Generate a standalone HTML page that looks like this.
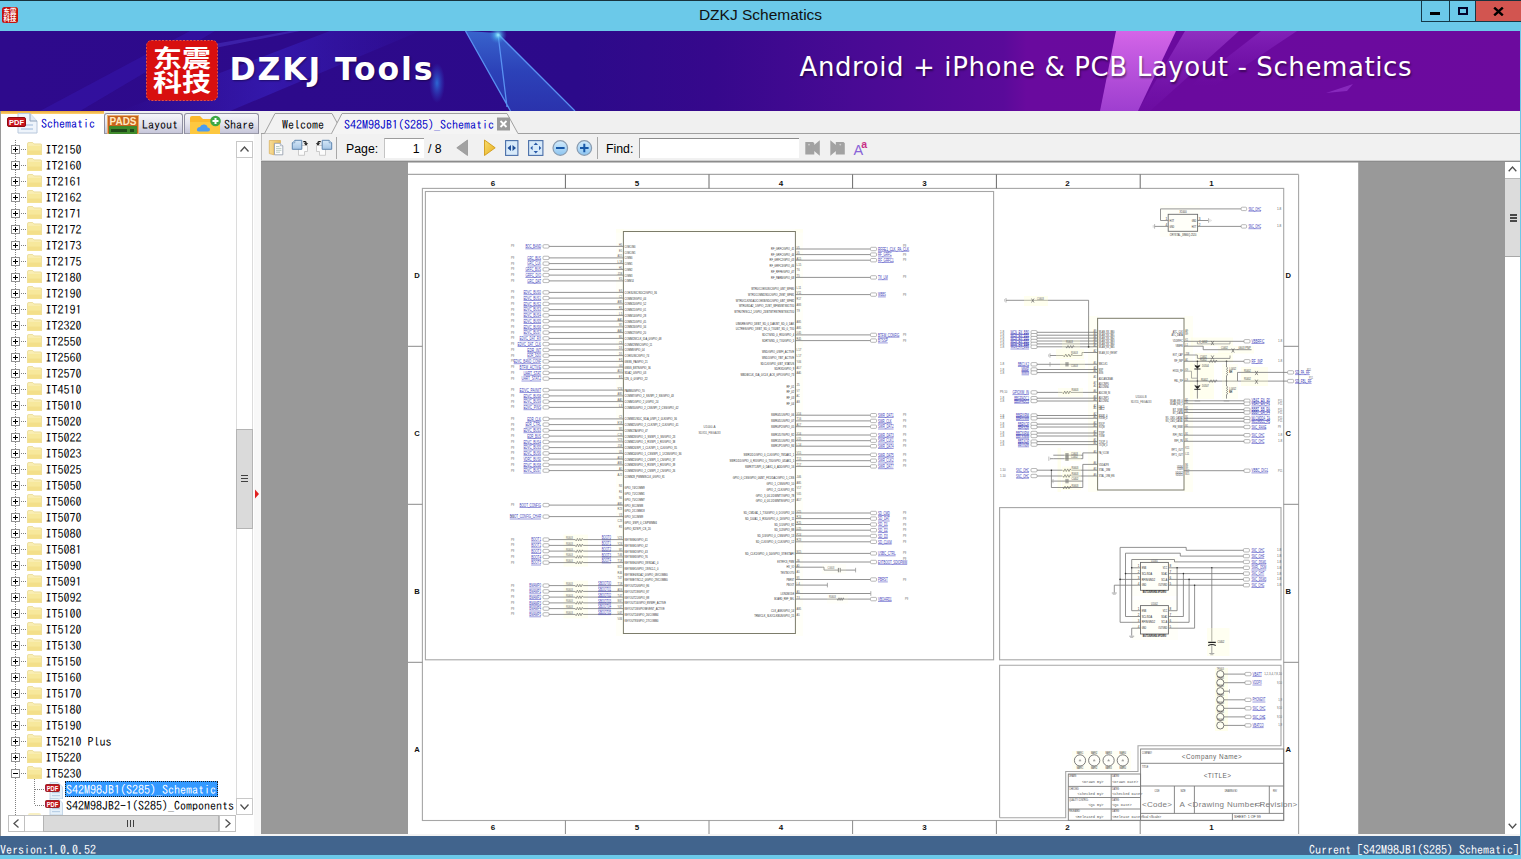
<!DOCTYPE html>
<html><head><meta charset="utf-8"><title>DZKJ Schematics</title>
<style>
html,body{margin:0;padding:0}
body{width:1521px;height:859px;overflow:hidden;position:relative;background:#f0f0f0;font-family:"IPAGothic","Liberation Mono",monospace;font-size:12px;color:#000}
.abs{position:absolute}
.mono{font-family:"IPAGothic","Liberation Mono",monospace;font-size:12px;line-height:16px;white-space:pre}
.sans{font-family:"Liberation Sans","DejaVu Sans",sans-serif}
#titlebar{left:0;top:0;width:1521px;height:31px;background:#6bc9e9}
#titlebar .topline{left:0;top:0;width:1521px;height:1px;background:#17323d}
#title{left:0;top:5px;width:1521px;text-align:center;font-family:"Liberation Sans","DejaVu Sans",sans-serif;font-size:15.5px;line-height:20px;color:#111}
#banner{left:0;top:31px;width:1521px;height:80px;background:linear-gradient(90deg,#2e0a8c 0%,#2c0a8a 38%,#36088c 47%,#480a94 56%,#5a0a9a 66%,#690a9e 67.5%,#6c0a9e 100%);overflow:hidden}
#tabs{left:0;top:111px;width:1521px;height:23px;background:#f0f0f0}
#status{left:0;top:836px;width:1521px;height:19px;background:#41648d}
#bottomline{left:0;top:855px;width:1521px;height:4px;background:#6bc9e9}
.trow{position:absolute;left:0;height:16px;width:236px}
.trow .lbl{position:absolute;top:0;left:44.4px;font-family:"IPAGothic","Liberation Mono",monospace;font-size:12px;line-height:16px;white-space:pre}
</style></head><body>
<div id="titlebar" class="abs"><div class="abs topline"></div><svg class="abs" style="left:2px;top:7px" width="16" height="16" viewBox="0 0 16 16"><rect x="0" y="0" width="16" height="16" rx="2.5" fill="#c4120e"/><text x="8" y="7.3" font-size="6.4" font-weight="bold" text-anchor="middle" fill="#fff" font-family='"Liberation Sans","Noto Sans CJK SC",sans-serif'>东震</text><text x="8" y="14" font-size="6.4" font-weight="bold" text-anchor="middle" fill="#fff" font-family='"Liberation Sans","Noto Sans CJK SC",sans-serif'>科技</text></svg><div id="title" class="abs">DZKJ Schematics</div><div class="abs" style="left:1421px;top:1px;width:100px;height:21px;border-left:1px solid #143848;border-bottom:1px solid #143848;box-sizing:border-box"><div class="abs" style="left:27px;top:0;width:1px;height:20px;background:#143848"></div><div class="abs" style="left:53px;top:0;width:1px;height:20px;background:#143848"></div><div class="abs" style="left:54px;top:0;width:46px;height:20px;background:#d25550"></div><div class="abs" style="left:8px;top:11px;width:10px;height:3px;background:#000"></div><div class="abs" style="left:36px;top:6px;width:10px;height:8px;border:2px solid #03032a;box-sizing:border-box"></div><svg class="abs" style="left:71px;top:5.5px" width="11" height="9" viewBox="0 0 11 9"><path d="M1.2 0.6 L9.8 8.4 M9.8 0.6 L1.2 8.4" stroke="#000" stroke-width="2.4" fill="none"/></svg></div></div>
<div id="banner" class="abs"><svg class="abs" style="left:0;top:0" width="1521" height="80" viewBox="0 0 1521 80"><defs><linearGradient id="st1" x1="0" y1="0" x2="1" y2="0"><stop offset="0" stop-color="#3d2ad8" stop-opacity="0"/><stop offset="0.5" stop-color="#3f2fe0" stop-opacity="0.75"/><stop offset="1" stop-color="#3d2ad8" stop-opacity="0.1"/></linearGradient><linearGradient id="tri" x1="0" y1="0" x2="0" y2="1"><stop offset="0" stop-color="#3a74d8" stop-opacity="0.85"/><stop offset="0.5" stop-color="#2c50c4" stop-opacity="0.8"/><stop offset="1" stop-color="#2a40b8" stop-opacity="0.75"/></linearGradient><radialGradient id="glow"><stop offset="0" stop-color="#9ff0ff" stop-opacity="1"/><stop offset="0.4" stop-color="#50b8f0" stop-opacity="0.6"/><stop offset="1" stop-color="#3a74d8" stop-opacity="0"/></radialGradient><radialGradient id="glow2"><stop offset="0" stop-color="#2c78e0" stop-opacity="0.85"/><stop offset="1" stop-color="#2c50d0" stop-opacity="0"/></radialGradient><linearGradient id="st3" x1="0" y1="0" x2="0" y2="1"><stop offset="0" stop-color="#a848d8" stop-opacity="0.6"/><stop offset="0.6" stop-color="#9030c8" stop-opacity="0.3"/><stop offset="1" stop-color="#8020c0" stop-opacity="0.1"/></linearGradient><linearGradient id="st4" x1="0" y1="0" x2="0" y2="1"><stop offset="0" stop-color="#9838d0" stop-opacity="0.5"/><stop offset="1" stop-color="#8020c0" stop-opacity="0"/></linearGradient><linearGradient id="st2" x1="0" y1="0" x2="0" y2="1"><stop offset="0" stop-color="#e070f0" stop-opacity="0.9"/><stop offset="1" stop-color="#b050e0" stop-opacity="0.75"/></linearGradient></defs><polygon points="120,80 330,0 420,0 230,80" fill="url(#st1)" opacity="0.5"/><polygon points="40,80 190,0 215,0 80,80" fill="#3a22c8" opacity="0.3"/><polygon points="185,18 290,0 300,0 200,20" fill="#5a4ae0" opacity="0.35"/><polygon points="465.5,0 498,2 575,80 510.5,80" fill="url(#tri)"/><path d="M465.5 0 L510.5 80 M498 3 L507 76 M498 3 L575 80" stroke="#5c96f4" stroke-width="1.3" fill="none" opacity="0.95"/><circle cx="498" cy="4" r="9" fill="url(#glow)"/><ellipse cx="437" cy="52" rx="8" ry="20" fill="url(#glow2)"/><polygon points="1116,0 1176,0 1138,80 1100,80" fill="url(#st2)"/><polygon points="1185,0 1239,0 1150,80 1138,80" fill="url(#st3)"/><polygon points="1261,0 1297,0 1215,55 1190,55" fill="url(#st4)"/><polygon points="1326,62 1353,53 1347,60" fill="#9a3cd0" opacity="0.6"/></svg><svg class="abs" style="left:146px;top:9px" width="72" height="61" viewBox="0 0 72 61"><rect x="0.5" y="0.5" width="71" height="60" rx="5" fill="#d80f0f" stroke="#e85040" stroke-width="1" stroke-dasharray="2 1.5"/><text x="36" y="27.3" font-size="24" font-weight="bold" text-anchor="middle" fill="#fff" font-family='"Liberation Sans","Noto Sans CJK SC",sans-serif' textLength="58" lengthAdjust="spacingAndGlyphs">东震</text><text x="36" y="50.5" font-size="24" font-weight="bold" text-anchor="middle" fill="#fff" font-family='"Liberation Sans","Noto Sans CJK SC",sans-serif' textLength="58" lengthAdjust="spacingAndGlyphs">科技</text></svg><div class="abs" style="left:229.6px;top:18px;font-family:'DejaVu Sans','Liberation Sans',sans-serif;font-size:31.5px;line-height:40px;letter-spacing:1.85px;font-weight:bold;color:#fff;white-space:pre;text-shadow:1px 1px 2px rgba(0,0,0,.4)">DZKJ Tools</div><div class="abs" style="left:799.5px;top:19px;font-family:'DejaVu Sans','Liberation Sans',sans-serif;font-size:26px;line-height:34px;letter-spacing:0.6px;color:#fff;white-space:pre;text-shadow:1px 2px 2px rgba(0,0,0,.45)">Android + iPhone &amp; PCB Layout - Schematics</div></div>
<div id="tabs" class="abs"><div class="abs" style="left:261px;top:22px;width:1260px;height:1px;background:#a0a0a0"></div><div class="abs" style="left:0;top:0;width:104px;height:23px;background:#fff;border-left:1px solid #9a9a9a;box-sizing:border-box"></div><div class="abs" style="left:1px;top:0;width:103px;height:3px;background:linear-gradient(180deg,#e8a838,#ffd070)"></div><svg class="abs" style="left:7px;top:1px" width="32" height="22" viewBox="0 0 32 22"><path d="M11 1.5 L23 1.5 L30 9 L30 21 L11 21 Z" fill="#eef4fb" stroke="#b8c8dc" stroke-width="1"/><path d="M23 1.5 L23 9 L30 9" fill="#dfe9f5" stroke="#8fa2ba" stroke-width="1"/><rect x="14" y="12" width="12" height="2" fill="#c5d6ea"/><rect x="14" y="16" width="12" height="2" fill="#c5d6ea"/><rect x="0.5" y="5.5" width="18" height="9" rx="1.5" fill="#c8141c" stroke="#8e0a10" stroke-width="1"/><text x="9.5" y="13" font-size="8" font-weight="bold" fill="#fff" text-anchor="middle" font-family='"Liberation Sans",sans-serif' textLength="15" lengthAdjust="spacingAndGlyphs">PDF</text></svg><div class="abs mono" style="left:41px;top:4px;color:#0000c8">Schematic</div><div class="abs" style="left:104px;top:2px;width:79px;height:21px;box-sizing:border-box;border:1px solid #8e8ea0;border-bottom:1px solid #9a9aa8;border-radius:3px 3px 0 0;background:linear-gradient(180deg,#f6f6fa 0%,#e4e4ee 50%,#c6c6da 100%)"></div><svg class="abs" style="left:107px;top:4px" width="32" height="19" viewBox="0 0 32 19"><rect x="0.5" y="0.5" width="31" height="18.5" fill="#c8641c" stroke="#e8b070" stroke-width="1"/><rect x="2" y="11" width="28" height="8" fill="#3f8a2c"/><rect x="4" y="14" width="16" height="3" fill="#1f4a18"/><rect x="23" y="14" width="4" height="3" fill="#1f4a18"/><text x="16" y="10" font-size="10" font-weight="bold" fill="#ffe9c0" text-anchor="middle" font-family='"Liberation Sans",sans-serif' textLength="27" lengthAdjust="spacingAndGlyphs">PADS</text></svg><div class="abs mono" style="left:142px;top:5px">Layout</div><div class="abs" style="left:184px;top:2px;width:75px;height:21px;box-sizing:border-box;border:1px solid #8e8ea0;border-bottom:1px solid #9a9aa8;border-radius:3px 3px 0 0;background:linear-gradient(180deg,#f6f6fa 0%,#e4e4ee 50%,#c6c6da 100%)"></div><svg class="abs" style="left:189px;top:3px" width="34" height="20" viewBox="0 0 34 20"><path d="M1 4 Q1 2 3 2 L11 2 L14 5 L29 5 Q31 5 31 7 L31 20 L1 20 Z" fill="#fbb92c"/><path d="M1 8 L31 8 L31 20 L1 20 Z" fill="#fdc840"/><path d="M10 17.5 Q7.5 17.5 8 15 Q8.5 13 11 13 Q12 10 15.5 10.5 Q18.5 11 18.5 13.5 Q21 13.5 21 15.5 Q21 17.5 19 17.5 Z" fill="#4b9cf0"/><circle cx="26.5" cy="7" r="5.3" fill="#3da845"/><path d="M26.5 4 V10 M23.5 7 H29.5" stroke="#fff" stroke-width="2"/></svg><div class="abs mono" style="left:224px;top:5px">Share</div><svg class="abs" style="left:261px;top:0" width="270" height="23" viewBox="0 0 270 23"><path d="M3.5 22.5 L14 2.5 L71 2.5 L82 22.5" fill="#f2f2f2" stroke="#a0a0a0" stroke-width="1"/><path d="M70.5 22.6 L81 2.5 L246 2.5 L257 22.6" fill="#f4f4f4" stroke="#a0a0a0" stroke-width="1"/><path d="M71.5 22.5 L256.5 22.5" stroke="#f4f4f4" stroke-width="1.4"/><rect x="236" y="6.5" width="13" height="13" fill="#9a9a9a"/><path d="M239.5 10 L245.5 16 M245.5 10 L239.5 16" stroke="#fff" stroke-width="1.8"/></svg><div class="abs mono" style="left:282px;top:5px">Welcome</div><div class="abs mono" style="left:344px;top:5px;color:#0000c8">S42M98JB1(S285)_Schematic</div></div>
<div class="abs" style="left:0;top:134px;width:254px;height:702px;background:#fff;border-left:1px solid #9a9a9a;box-sizing:border-box;overflow:hidden"><div class="abs" style="left:14px;top:6px;width:1px;height:676px;background:repeating-linear-gradient(180deg,#808080 0 1px,transparent 1px 2px)"></div><div class="trow" style="top:7px"><div class="abs" style="left:20px;top:8px;width:5px;height:1px;background:repeating-linear-gradient(90deg,#808080 0 1px,transparent 1px 2px)"></div><svg class="abs" style="left:10px;top:4px" width="9" height="9" viewBox="0 0 9 9"><rect x="0.5" y="0.5" width="8" height="8" fill="#fff" stroke="#919191"/><path d="M2 4.5 H7 M4.5 2 V7" stroke="#000" stroke-width="1"/></svg><svg class="abs" style="left:25.6px;top:1px" width="15" height="13.4" viewBox="0 0 16 14" preserveAspectRatio="none"><path d="M0.5 2 Q0.5 0.5 2 0.5 L6 0.5 L7.5 2 L14.5 2 Q15.5 2 15.5 3 L15.5 13.5 L0.5 13.5 Z" fill="#f9eeb4" stroke="#e8d68a" stroke-width="0.8"/><path d="M0.8 4 L15.2 4 L15.2 13.2 L0.8 13.2 Z" fill="#f7e89c"/><path d="M0.8 9 L15.2 9 L15.2 13.2 L0.8 13.2 Z" fill="#f1dc84" opacity="0.75"/></svg><div class="lbl">IT2150</div></div><div class="trow" style="top:23px"><div class="abs" style="left:20px;top:8px;width:5px;height:1px;background:repeating-linear-gradient(90deg,#808080 0 1px,transparent 1px 2px)"></div><svg class="abs" style="left:10px;top:4px" width="9" height="9" viewBox="0 0 9 9"><rect x="0.5" y="0.5" width="8" height="8" fill="#fff" stroke="#919191"/><path d="M2 4.5 H7 M4.5 2 V7" stroke="#000" stroke-width="1"/></svg><svg class="abs" style="left:25.6px;top:1px" width="15" height="13.4" viewBox="0 0 16 14" preserveAspectRatio="none"><path d="M0.5 2 Q0.5 0.5 2 0.5 L6 0.5 L7.5 2 L14.5 2 Q15.5 2 15.5 3 L15.5 13.5 L0.5 13.5 Z" fill="#f9eeb4" stroke="#e8d68a" stroke-width="0.8"/><path d="M0.8 4 L15.2 4 L15.2 13.2 L0.8 13.2 Z" fill="#f7e89c"/><path d="M0.8 9 L15.2 9 L15.2 13.2 L0.8 13.2 Z" fill="#f1dc84" opacity="0.75"/></svg><div class="lbl">IT2160</div></div><div class="trow" style="top:39px"><div class="abs" style="left:20px;top:8px;width:5px;height:1px;background:repeating-linear-gradient(90deg,#808080 0 1px,transparent 1px 2px)"></div><svg class="abs" style="left:10px;top:4px" width="9" height="9" viewBox="0 0 9 9"><rect x="0.5" y="0.5" width="8" height="8" fill="#fff" stroke="#919191"/><path d="M2 4.5 H7 M4.5 2 V7" stroke="#000" stroke-width="1"/></svg><svg class="abs" style="left:25.6px;top:1px" width="15" height="13.4" viewBox="0 0 16 14" preserveAspectRatio="none"><path d="M0.5 2 Q0.5 0.5 2 0.5 L6 0.5 L7.5 2 L14.5 2 Q15.5 2 15.5 3 L15.5 13.5 L0.5 13.5 Z" fill="#f9eeb4" stroke="#e8d68a" stroke-width="0.8"/><path d="M0.8 4 L15.2 4 L15.2 13.2 L0.8 13.2 Z" fill="#f7e89c"/><path d="M0.8 9 L15.2 9 L15.2 13.2 L0.8 13.2 Z" fill="#f1dc84" opacity="0.75"/></svg><div class="lbl">IT2161</div></div><div class="trow" style="top:55px"><div class="abs" style="left:20px;top:8px;width:5px;height:1px;background:repeating-linear-gradient(90deg,#808080 0 1px,transparent 1px 2px)"></div><svg class="abs" style="left:10px;top:4px" width="9" height="9" viewBox="0 0 9 9"><rect x="0.5" y="0.5" width="8" height="8" fill="#fff" stroke="#919191"/><path d="M2 4.5 H7 M4.5 2 V7" stroke="#000" stroke-width="1"/></svg><svg class="abs" style="left:25.6px;top:1px" width="15" height="13.4" viewBox="0 0 16 14" preserveAspectRatio="none"><path d="M0.5 2 Q0.5 0.5 2 0.5 L6 0.5 L7.5 2 L14.5 2 Q15.5 2 15.5 3 L15.5 13.5 L0.5 13.5 Z" fill="#f9eeb4" stroke="#e8d68a" stroke-width="0.8"/><path d="M0.8 4 L15.2 4 L15.2 13.2 L0.8 13.2 Z" fill="#f7e89c"/><path d="M0.8 9 L15.2 9 L15.2 13.2 L0.8 13.2 Z" fill="#f1dc84" opacity="0.75"/></svg><div class="lbl">IT2162</div></div><div class="trow" style="top:71px"><div class="abs" style="left:20px;top:8px;width:5px;height:1px;background:repeating-linear-gradient(90deg,#808080 0 1px,transparent 1px 2px)"></div><svg class="abs" style="left:10px;top:4px" width="9" height="9" viewBox="0 0 9 9"><rect x="0.5" y="0.5" width="8" height="8" fill="#fff" stroke="#919191"/><path d="M2 4.5 H7 M4.5 2 V7" stroke="#000" stroke-width="1"/></svg><svg class="abs" style="left:25.6px;top:1px" width="15" height="13.4" viewBox="0 0 16 14" preserveAspectRatio="none"><path d="M0.5 2 Q0.5 0.5 2 0.5 L6 0.5 L7.5 2 L14.5 2 Q15.5 2 15.5 3 L15.5 13.5 L0.5 13.5 Z" fill="#f9eeb4" stroke="#e8d68a" stroke-width="0.8"/><path d="M0.8 4 L15.2 4 L15.2 13.2 L0.8 13.2 Z" fill="#f7e89c"/><path d="M0.8 9 L15.2 9 L15.2 13.2 L0.8 13.2 Z" fill="#f1dc84" opacity="0.75"/></svg><div class="lbl">IT2171</div></div><div class="trow" style="top:87px"><div class="abs" style="left:20px;top:8px;width:5px;height:1px;background:repeating-linear-gradient(90deg,#808080 0 1px,transparent 1px 2px)"></div><svg class="abs" style="left:10px;top:4px" width="9" height="9" viewBox="0 0 9 9"><rect x="0.5" y="0.5" width="8" height="8" fill="#fff" stroke="#919191"/><path d="M2 4.5 H7 M4.5 2 V7" stroke="#000" stroke-width="1"/></svg><svg class="abs" style="left:25.6px;top:1px" width="15" height="13.4" viewBox="0 0 16 14" preserveAspectRatio="none"><path d="M0.5 2 Q0.5 0.5 2 0.5 L6 0.5 L7.5 2 L14.5 2 Q15.5 2 15.5 3 L15.5 13.5 L0.5 13.5 Z" fill="#f9eeb4" stroke="#e8d68a" stroke-width="0.8"/><path d="M0.8 4 L15.2 4 L15.2 13.2 L0.8 13.2 Z" fill="#f7e89c"/><path d="M0.8 9 L15.2 9 L15.2 13.2 L0.8 13.2 Z" fill="#f1dc84" opacity="0.75"/></svg><div class="lbl">IT2172</div></div><div class="trow" style="top:103px"><div class="abs" style="left:20px;top:8px;width:5px;height:1px;background:repeating-linear-gradient(90deg,#808080 0 1px,transparent 1px 2px)"></div><svg class="abs" style="left:10px;top:4px" width="9" height="9" viewBox="0 0 9 9"><rect x="0.5" y="0.5" width="8" height="8" fill="#fff" stroke="#919191"/><path d="M2 4.5 H7 M4.5 2 V7" stroke="#000" stroke-width="1"/></svg><svg class="abs" style="left:25.6px;top:1px" width="15" height="13.4" viewBox="0 0 16 14" preserveAspectRatio="none"><path d="M0.5 2 Q0.5 0.5 2 0.5 L6 0.5 L7.5 2 L14.5 2 Q15.5 2 15.5 3 L15.5 13.5 L0.5 13.5 Z" fill="#f9eeb4" stroke="#e8d68a" stroke-width="0.8"/><path d="M0.8 4 L15.2 4 L15.2 13.2 L0.8 13.2 Z" fill="#f7e89c"/><path d="M0.8 9 L15.2 9 L15.2 13.2 L0.8 13.2 Z" fill="#f1dc84" opacity="0.75"/></svg><div class="lbl">IT2173</div></div><div class="trow" style="top:119px"><div class="abs" style="left:20px;top:8px;width:5px;height:1px;background:repeating-linear-gradient(90deg,#808080 0 1px,transparent 1px 2px)"></div><svg class="abs" style="left:10px;top:4px" width="9" height="9" viewBox="0 0 9 9"><rect x="0.5" y="0.5" width="8" height="8" fill="#fff" stroke="#919191"/><path d="M2 4.5 H7 M4.5 2 V7" stroke="#000" stroke-width="1"/></svg><svg class="abs" style="left:25.6px;top:1px" width="15" height="13.4" viewBox="0 0 16 14" preserveAspectRatio="none"><path d="M0.5 2 Q0.5 0.5 2 0.5 L6 0.5 L7.5 2 L14.5 2 Q15.5 2 15.5 3 L15.5 13.5 L0.5 13.5 Z" fill="#f9eeb4" stroke="#e8d68a" stroke-width="0.8"/><path d="M0.8 4 L15.2 4 L15.2 13.2 L0.8 13.2 Z" fill="#f7e89c"/><path d="M0.8 9 L15.2 9 L15.2 13.2 L0.8 13.2 Z" fill="#f1dc84" opacity="0.75"/></svg><div class="lbl">IT2175</div></div><div class="trow" style="top:135px"><div class="abs" style="left:20px;top:8px;width:5px;height:1px;background:repeating-linear-gradient(90deg,#808080 0 1px,transparent 1px 2px)"></div><svg class="abs" style="left:10px;top:4px" width="9" height="9" viewBox="0 0 9 9"><rect x="0.5" y="0.5" width="8" height="8" fill="#fff" stroke="#919191"/><path d="M2 4.5 H7 M4.5 2 V7" stroke="#000" stroke-width="1"/></svg><svg class="abs" style="left:25.6px;top:1px" width="15" height="13.4" viewBox="0 0 16 14" preserveAspectRatio="none"><path d="M0.5 2 Q0.5 0.5 2 0.5 L6 0.5 L7.5 2 L14.5 2 Q15.5 2 15.5 3 L15.5 13.5 L0.5 13.5 Z" fill="#f9eeb4" stroke="#e8d68a" stroke-width="0.8"/><path d="M0.8 4 L15.2 4 L15.2 13.2 L0.8 13.2 Z" fill="#f7e89c"/><path d="M0.8 9 L15.2 9 L15.2 13.2 L0.8 13.2 Z" fill="#f1dc84" opacity="0.75"/></svg><div class="lbl">IT2180</div></div><div class="trow" style="top:151px"><div class="abs" style="left:20px;top:8px;width:5px;height:1px;background:repeating-linear-gradient(90deg,#808080 0 1px,transparent 1px 2px)"></div><svg class="abs" style="left:10px;top:4px" width="9" height="9" viewBox="0 0 9 9"><rect x="0.5" y="0.5" width="8" height="8" fill="#fff" stroke="#919191"/><path d="M2 4.5 H7 M4.5 2 V7" stroke="#000" stroke-width="1"/></svg><svg class="abs" style="left:25.6px;top:1px" width="15" height="13.4" viewBox="0 0 16 14" preserveAspectRatio="none"><path d="M0.5 2 Q0.5 0.5 2 0.5 L6 0.5 L7.5 2 L14.5 2 Q15.5 2 15.5 3 L15.5 13.5 L0.5 13.5 Z" fill="#f9eeb4" stroke="#e8d68a" stroke-width="0.8"/><path d="M0.8 4 L15.2 4 L15.2 13.2 L0.8 13.2 Z" fill="#f7e89c"/><path d="M0.8 9 L15.2 9 L15.2 13.2 L0.8 13.2 Z" fill="#f1dc84" opacity="0.75"/></svg><div class="lbl">IT2190</div></div><div class="trow" style="top:167px"><div class="abs" style="left:20px;top:8px;width:5px;height:1px;background:repeating-linear-gradient(90deg,#808080 0 1px,transparent 1px 2px)"></div><svg class="abs" style="left:10px;top:4px" width="9" height="9" viewBox="0 0 9 9"><rect x="0.5" y="0.5" width="8" height="8" fill="#fff" stroke="#919191"/><path d="M2 4.5 H7 M4.5 2 V7" stroke="#000" stroke-width="1"/></svg><svg class="abs" style="left:25.6px;top:1px" width="15" height="13.4" viewBox="0 0 16 14" preserveAspectRatio="none"><path d="M0.5 2 Q0.5 0.5 2 0.5 L6 0.5 L7.5 2 L14.5 2 Q15.5 2 15.5 3 L15.5 13.5 L0.5 13.5 Z" fill="#f9eeb4" stroke="#e8d68a" stroke-width="0.8"/><path d="M0.8 4 L15.2 4 L15.2 13.2 L0.8 13.2 Z" fill="#f7e89c"/><path d="M0.8 9 L15.2 9 L15.2 13.2 L0.8 13.2 Z" fill="#f1dc84" opacity="0.75"/></svg><div class="lbl">IT2191</div></div><div class="trow" style="top:183px"><div class="abs" style="left:20px;top:8px;width:5px;height:1px;background:repeating-linear-gradient(90deg,#808080 0 1px,transparent 1px 2px)"></div><svg class="abs" style="left:10px;top:4px" width="9" height="9" viewBox="0 0 9 9"><rect x="0.5" y="0.5" width="8" height="8" fill="#fff" stroke="#919191"/><path d="M2 4.5 H7 M4.5 2 V7" stroke="#000" stroke-width="1"/></svg><svg class="abs" style="left:25.6px;top:1px" width="15" height="13.4" viewBox="0 0 16 14" preserveAspectRatio="none"><path d="M0.5 2 Q0.5 0.5 2 0.5 L6 0.5 L7.5 2 L14.5 2 Q15.5 2 15.5 3 L15.5 13.5 L0.5 13.5 Z" fill="#f9eeb4" stroke="#e8d68a" stroke-width="0.8"/><path d="M0.8 4 L15.2 4 L15.2 13.2 L0.8 13.2 Z" fill="#f7e89c"/><path d="M0.8 9 L15.2 9 L15.2 13.2 L0.8 13.2 Z" fill="#f1dc84" opacity="0.75"/></svg><div class="lbl">IT2320</div></div><div class="trow" style="top:199px"><div class="abs" style="left:20px;top:8px;width:5px;height:1px;background:repeating-linear-gradient(90deg,#808080 0 1px,transparent 1px 2px)"></div><svg class="abs" style="left:10px;top:4px" width="9" height="9" viewBox="0 0 9 9"><rect x="0.5" y="0.5" width="8" height="8" fill="#fff" stroke="#919191"/><path d="M2 4.5 H7 M4.5 2 V7" stroke="#000" stroke-width="1"/></svg><svg class="abs" style="left:25.6px;top:1px" width="15" height="13.4" viewBox="0 0 16 14" preserveAspectRatio="none"><path d="M0.5 2 Q0.5 0.5 2 0.5 L6 0.5 L7.5 2 L14.5 2 Q15.5 2 15.5 3 L15.5 13.5 L0.5 13.5 Z" fill="#f9eeb4" stroke="#e8d68a" stroke-width="0.8"/><path d="M0.8 4 L15.2 4 L15.2 13.2 L0.8 13.2 Z" fill="#f7e89c"/><path d="M0.8 9 L15.2 9 L15.2 13.2 L0.8 13.2 Z" fill="#f1dc84" opacity="0.75"/></svg><div class="lbl">IT2550</div></div><div class="trow" style="top:215px"><div class="abs" style="left:20px;top:8px;width:5px;height:1px;background:repeating-linear-gradient(90deg,#808080 0 1px,transparent 1px 2px)"></div><svg class="abs" style="left:10px;top:4px" width="9" height="9" viewBox="0 0 9 9"><rect x="0.5" y="0.5" width="8" height="8" fill="#fff" stroke="#919191"/><path d="M2 4.5 H7 M4.5 2 V7" stroke="#000" stroke-width="1"/></svg><svg class="abs" style="left:25.6px;top:1px" width="15" height="13.4" viewBox="0 0 16 14" preserveAspectRatio="none"><path d="M0.5 2 Q0.5 0.5 2 0.5 L6 0.5 L7.5 2 L14.5 2 Q15.5 2 15.5 3 L15.5 13.5 L0.5 13.5 Z" fill="#f9eeb4" stroke="#e8d68a" stroke-width="0.8"/><path d="M0.8 4 L15.2 4 L15.2 13.2 L0.8 13.2 Z" fill="#f7e89c"/><path d="M0.8 9 L15.2 9 L15.2 13.2 L0.8 13.2 Z" fill="#f1dc84" opacity="0.75"/></svg><div class="lbl">IT2560</div></div><div class="trow" style="top:231px"><div class="abs" style="left:20px;top:8px;width:5px;height:1px;background:repeating-linear-gradient(90deg,#808080 0 1px,transparent 1px 2px)"></div><svg class="abs" style="left:10px;top:4px" width="9" height="9" viewBox="0 0 9 9"><rect x="0.5" y="0.5" width="8" height="8" fill="#fff" stroke="#919191"/><path d="M2 4.5 H7 M4.5 2 V7" stroke="#000" stroke-width="1"/></svg><svg class="abs" style="left:25.6px;top:1px" width="15" height="13.4" viewBox="0 0 16 14" preserveAspectRatio="none"><path d="M0.5 2 Q0.5 0.5 2 0.5 L6 0.5 L7.5 2 L14.5 2 Q15.5 2 15.5 3 L15.5 13.5 L0.5 13.5 Z" fill="#f9eeb4" stroke="#e8d68a" stroke-width="0.8"/><path d="M0.8 4 L15.2 4 L15.2 13.2 L0.8 13.2 Z" fill="#f7e89c"/><path d="M0.8 9 L15.2 9 L15.2 13.2 L0.8 13.2 Z" fill="#f1dc84" opacity="0.75"/></svg><div class="lbl">IT2570</div></div><div class="trow" style="top:247px"><div class="abs" style="left:20px;top:8px;width:5px;height:1px;background:repeating-linear-gradient(90deg,#808080 0 1px,transparent 1px 2px)"></div><svg class="abs" style="left:10px;top:4px" width="9" height="9" viewBox="0 0 9 9"><rect x="0.5" y="0.5" width="8" height="8" fill="#fff" stroke="#919191"/><path d="M2 4.5 H7 M4.5 2 V7" stroke="#000" stroke-width="1"/></svg><svg class="abs" style="left:25.6px;top:1px" width="15" height="13.4" viewBox="0 0 16 14" preserveAspectRatio="none"><path d="M0.5 2 Q0.5 0.5 2 0.5 L6 0.5 L7.5 2 L14.5 2 Q15.5 2 15.5 3 L15.5 13.5 L0.5 13.5 Z" fill="#f9eeb4" stroke="#e8d68a" stroke-width="0.8"/><path d="M0.8 4 L15.2 4 L15.2 13.2 L0.8 13.2 Z" fill="#f7e89c"/><path d="M0.8 9 L15.2 9 L15.2 13.2 L0.8 13.2 Z" fill="#f1dc84" opacity="0.75"/></svg><div class="lbl">IT4510</div></div><div class="trow" style="top:263px"><div class="abs" style="left:20px;top:8px;width:5px;height:1px;background:repeating-linear-gradient(90deg,#808080 0 1px,transparent 1px 2px)"></div><svg class="abs" style="left:10px;top:4px" width="9" height="9" viewBox="0 0 9 9"><rect x="0.5" y="0.5" width="8" height="8" fill="#fff" stroke="#919191"/><path d="M2 4.5 H7 M4.5 2 V7" stroke="#000" stroke-width="1"/></svg><svg class="abs" style="left:25.6px;top:1px" width="15" height="13.4" viewBox="0 0 16 14" preserveAspectRatio="none"><path d="M0.5 2 Q0.5 0.5 2 0.5 L6 0.5 L7.5 2 L14.5 2 Q15.5 2 15.5 3 L15.5 13.5 L0.5 13.5 Z" fill="#f9eeb4" stroke="#e8d68a" stroke-width="0.8"/><path d="M0.8 4 L15.2 4 L15.2 13.2 L0.8 13.2 Z" fill="#f7e89c"/><path d="M0.8 9 L15.2 9 L15.2 13.2 L0.8 13.2 Z" fill="#f1dc84" opacity="0.75"/></svg><div class="lbl">IT5010</div></div><div class="trow" style="top:279px"><div class="abs" style="left:20px;top:8px;width:5px;height:1px;background:repeating-linear-gradient(90deg,#808080 0 1px,transparent 1px 2px)"></div><svg class="abs" style="left:10px;top:4px" width="9" height="9" viewBox="0 0 9 9"><rect x="0.5" y="0.5" width="8" height="8" fill="#fff" stroke="#919191"/><path d="M2 4.5 H7 M4.5 2 V7" stroke="#000" stroke-width="1"/></svg><svg class="abs" style="left:25.6px;top:1px" width="15" height="13.4" viewBox="0 0 16 14" preserveAspectRatio="none"><path d="M0.5 2 Q0.5 0.5 2 0.5 L6 0.5 L7.5 2 L14.5 2 Q15.5 2 15.5 3 L15.5 13.5 L0.5 13.5 Z" fill="#f9eeb4" stroke="#e8d68a" stroke-width="0.8"/><path d="M0.8 4 L15.2 4 L15.2 13.2 L0.8 13.2 Z" fill="#f7e89c"/><path d="M0.8 9 L15.2 9 L15.2 13.2 L0.8 13.2 Z" fill="#f1dc84" opacity="0.75"/></svg><div class="lbl">IT5020</div></div><div class="trow" style="top:295px"><div class="abs" style="left:20px;top:8px;width:5px;height:1px;background:repeating-linear-gradient(90deg,#808080 0 1px,transparent 1px 2px)"></div><svg class="abs" style="left:10px;top:4px" width="9" height="9" viewBox="0 0 9 9"><rect x="0.5" y="0.5" width="8" height="8" fill="#fff" stroke="#919191"/><path d="M2 4.5 H7 M4.5 2 V7" stroke="#000" stroke-width="1"/></svg><svg class="abs" style="left:25.6px;top:1px" width="15" height="13.4" viewBox="0 0 16 14" preserveAspectRatio="none"><path d="M0.5 2 Q0.5 0.5 2 0.5 L6 0.5 L7.5 2 L14.5 2 Q15.5 2 15.5 3 L15.5 13.5 L0.5 13.5 Z" fill="#f9eeb4" stroke="#e8d68a" stroke-width="0.8"/><path d="M0.8 4 L15.2 4 L15.2 13.2 L0.8 13.2 Z" fill="#f7e89c"/><path d="M0.8 9 L15.2 9 L15.2 13.2 L0.8 13.2 Z" fill="#f1dc84" opacity="0.75"/></svg><div class="lbl">IT5022</div></div><div class="trow" style="top:311px"><div class="abs" style="left:20px;top:8px;width:5px;height:1px;background:repeating-linear-gradient(90deg,#808080 0 1px,transparent 1px 2px)"></div><svg class="abs" style="left:10px;top:4px" width="9" height="9" viewBox="0 0 9 9"><rect x="0.5" y="0.5" width="8" height="8" fill="#fff" stroke="#919191"/><path d="M2 4.5 H7 M4.5 2 V7" stroke="#000" stroke-width="1"/></svg><svg class="abs" style="left:25.6px;top:1px" width="15" height="13.4" viewBox="0 0 16 14" preserveAspectRatio="none"><path d="M0.5 2 Q0.5 0.5 2 0.5 L6 0.5 L7.5 2 L14.5 2 Q15.5 2 15.5 3 L15.5 13.5 L0.5 13.5 Z" fill="#f9eeb4" stroke="#e8d68a" stroke-width="0.8"/><path d="M0.8 4 L15.2 4 L15.2 13.2 L0.8 13.2 Z" fill="#f7e89c"/><path d="M0.8 9 L15.2 9 L15.2 13.2 L0.8 13.2 Z" fill="#f1dc84" opacity="0.75"/></svg><div class="lbl">IT5023</div></div><div class="trow" style="top:327px"><div class="abs" style="left:20px;top:8px;width:5px;height:1px;background:repeating-linear-gradient(90deg,#808080 0 1px,transparent 1px 2px)"></div><svg class="abs" style="left:10px;top:4px" width="9" height="9" viewBox="0 0 9 9"><rect x="0.5" y="0.5" width="8" height="8" fill="#fff" stroke="#919191"/><path d="M2 4.5 H7 M4.5 2 V7" stroke="#000" stroke-width="1"/></svg><svg class="abs" style="left:25.6px;top:1px" width="15" height="13.4" viewBox="0 0 16 14" preserveAspectRatio="none"><path d="M0.5 2 Q0.5 0.5 2 0.5 L6 0.5 L7.5 2 L14.5 2 Q15.5 2 15.5 3 L15.5 13.5 L0.5 13.5 Z" fill="#f9eeb4" stroke="#e8d68a" stroke-width="0.8"/><path d="M0.8 4 L15.2 4 L15.2 13.2 L0.8 13.2 Z" fill="#f7e89c"/><path d="M0.8 9 L15.2 9 L15.2 13.2 L0.8 13.2 Z" fill="#f1dc84" opacity="0.75"/></svg><div class="lbl">IT5025</div></div><div class="trow" style="top:343px"><div class="abs" style="left:20px;top:8px;width:5px;height:1px;background:repeating-linear-gradient(90deg,#808080 0 1px,transparent 1px 2px)"></div><svg class="abs" style="left:10px;top:4px" width="9" height="9" viewBox="0 0 9 9"><rect x="0.5" y="0.5" width="8" height="8" fill="#fff" stroke="#919191"/><path d="M2 4.5 H7 M4.5 2 V7" stroke="#000" stroke-width="1"/></svg><svg class="abs" style="left:25.6px;top:1px" width="15" height="13.4" viewBox="0 0 16 14" preserveAspectRatio="none"><path d="M0.5 2 Q0.5 0.5 2 0.5 L6 0.5 L7.5 2 L14.5 2 Q15.5 2 15.5 3 L15.5 13.5 L0.5 13.5 Z" fill="#f9eeb4" stroke="#e8d68a" stroke-width="0.8"/><path d="M0.8 4 L15.2 4 L15.2 13.2 L0.8 13.2 Z" fill="#f7e89c"/><path d="M0.8 9 L15.2 9 L15.2 13.2 L0.8 13.2 Z" fill="#f1dc84" opacity="0.75"/></svg><div class="lbl">IT5050</div></div><div class="trow" style="top:359px"><div class="abs" style="left:20px;top:8px;width:5px;height:1px;background:repeating-linear-gradient(90deg,#808080 0 1px,transparent 1px 2px)"></div><svg class="abs" style="left:10px;top:4px" width="9" height="9" viewBox="0 0 9 9"><rect x="0.5" y="0.5" width="8" height="8" fill="#fff" stroke="#919191"/><path d="M2 4.5 H7 M4.5 2 V7" stroke="#000" stroke-width="1"/></svg><svg class="abs" style="left:25.6px;top:1px" width="15" height="13.4" viewBox="0 0 16 14" preserveAspectRatio="none"><path d="M0.5 2 Q0.5 0.5 2 0.5 L6 0.5 L7.5 2 L14.5 2 Q15.5 2 15.5 3 L15.5 13.5 L0.5 13.5 Z" fill="#f9eeb4" stroke="#e8d68a" stroke-width="0.8"/><path d="M0.8 4 L15.2 4 L15.2 13.2 L0.8 13.2 Z" fill="#f7e89c"/><path d="M0.8 9 L15.2 9 L15.2 13.2 L0.8 13.2 Z" fill="#f1dc84" opacity="0.75"/></svg><div class="lbl">IT5060</div></div><div class="trow" style="top:375px"><div class="abs" style="left:20px;top:8px;width:5px;height:1px;background:repeating-linear-gradient(90deg,#808080 0 1px,transparent 1px 2px)"></div><svg class="abs" style="left:10px;top:4px" width="9" height="9" viewBox="0 0 9 9"><rect x="0.5" y="0.5" width="8" height="8" fill="#fff" stroke="#919191"/><path d="M2 4.5 H7 M4.5 2 V7" stroke="#000" stroke-width="1"/></svg><svg class="abs" style="left:25.6px;top:1px" width="15" height="13.4" viewBox="0 0 16 14" preserveAspectRatio="none"><path d="M0.5 2 Q0.5 0.5 2 0.5 L6 0.5 L7.5 2 L14.5 2 Q15.5 2 15.5 3 L15.5 13.5 L0.5 13.5 Z" fill="#f9eeb4" stroke="#e8d68a" stroke-width="0.8"/><path d="M0.8 4 L15.2 4 L15.2 13.2 L0.8 13.2 Z" fill="#f7e89c"/><path d="M0.8 9 L15.2 9 L15.2 13.2 L0.8 13.2 Z" fill="#f1dc84" opacity="0.75"/></svg><div class="lbl">IT5070</div></div><div class="trow" style="top:391px"><div class="abs" style="left:20px;top:8px;width:5px;height:1px;background:repeating-linear-gradient(90deg,#808080 0 1px,transparent 1px 2px)"></div><svg class="abs" style="left:10px;top:4px" width="9" height="9" viewBox="0 0 9 9"><rect x="0.5" y="0.5" width="8" height="8" fill="#fff" stroke="#919191"/><path d="M2 4.5 H7 M4.5 2 V7" stroke="#000" stroke-width="1"/></svg><svg class="abs" style="left:25.6px;top:1px" width="15" height="13.4" viewBox="0 0 16 14" preserveAspectRatio="none"><path d="M0.5 2 Q0.5 0.5 2 0.5 L6 0.5 L7.5 2 L14.5 2 Q15.5 2 15.5 3 L15.5 13.5 L0.5 13.5 Z" fill="#f9eeb4" stroke="#e8d68a" stroke-width="0.8"/><path d="M0.8 4 L15.2 4 L15.2 13.2 L0.8 13.2 Z" fill="#f7e89c"/><path d="M0.8 9 L15.2 9 L15.2 13.2 L0.8 13.2 Z" fill="#f1dc84" opacity="0.75"/></svg><div class="lbl">IT5080</div></div><div class="trow" style="top:407px"><div class="abs" style="left:20px;top:8px;width:5px;height:1px;background:repeating-linear-gradient(90deg,#808080 0 1px,transparent 1px 2px)"></div><svg class="abs" style="left:10px;top:4px" width="9" height="9" viewBox="0 0 9 9"><rect x="0.5" y="0.5" width="8" height="8" fill="#fff" stroke="#919191"/><path d="M2 4.5 H7 M4.5 2 V7" stroke="#000" stroke-width="1"/></svg><svg class="abs" style="left:25.6px;top:1px" width="15" height="13.4" viewBox="0 0 16 14" preserveAspectRatio="none"><path d="M0.5 2 Q0.5 0.5 2 0.5 L6 0.5 L7.5 2 L14.5 2 Q15.5 2 15.5 3 L15.5 13.5 L0.5 13.5 Z" fill="#f9eeb4" stroke="#e8d68a" stroke-width="0.8"/><path d="M0.8 4 L15.2 4 L15.2 13.2 L0.8 13.2 Z" fill="#f7e89c"/><path d="M0.8 9 L15.2 9 L15.2 13.2 L0.8 13.2 Z" fill="#f1dc84" opacity="0.75"/></svg><div class="lbl">IT5081</div></div><div class="trow" style="top:423px"><div class="abs" style="left:20px;top:8px;width:5px;height:1px;background:repeating-linear-gradient(90deg,#808080 0 1px,transparent 1px 2px)"></div><svg class="abs" style="left:10px;top:4px" width="9" height="9" viewBox="0 0 9 9"><rect x="0.5" y="0.5" width="8" height="8" fill="#fff" stroke="#919191"/><path d="M2 4.5 H7 M4.5 2 V7" stroke="#000" stroke-width="1"/></svg><svg class="abs" style="left:25.6px;top:1px" width="15" height="13.4" viewBox="0 0 16 14" preserveAspectRatio="none"><path d="M0.5 2 Q0.5 0.5 2 0.5 L6 0.5 L7.5 2 L14.5 2 Q15.5 2 15.5 3 L15.5 13.5 L0.5 13.5 Z" fill="#f9eeb4" stroke="#e8d68a" stroke-width="0.8"/><path d="M0.8 4 L15.2 4 L15.2 13.2 L0.8 13.2 Z" fill="#f7e89c"/><path d="M0.8 9 L15.2 9 L15.2 13.2 L0.8 13.2 Z" fill="#f1dc84" opacity="0.75"/></svg><div class="lbl">IT5090</div></div><div class="trow" style="top:439px"><div class="abs" style="left:20px;top:8px;width:5px;height:1px;background:repeating-linear-gradient(90deg,#808080 0 1px,transparent 1px 2px)"></div><svg class="abs" style="left:10px;top:4px" width="9" height="9" viewBox="0 0 9 9"><rect x="0.5" y="0.5" width="8" height="8" fill="#fff" stroke="#919191"/><path d="M2 4.5 H7 M4.5 2 V7" stroke="#000" stroke-width="1"/></svg><svg class="abs" style="left:25.6px;top:1px" width="15" height="13.4" viewBox="0 0 16 14" preserveAspectRatio="none"><path d="M0.5 2 Q0.5 0.5 2 0.5 L6 0.5 L7.5 2 L14.5 2 Q15.5 2 15.5 3 L15.5 13.5 L0.5 13.5 Z" fill="#f9eeb4" stroke="#e8d68a" stroke-width="0.8"/><path d="M0.8 4 L15.2 4 L15.2 13.2 L0.8 13.2 Z" fill="#f7e89c"/><path d="M0.8 9 L15.2 9 L15.2 13.2 L0.8 13.2 Z" fill="#f1dc84" opacity="0.75"/></svg><div class="lbl">IT5091</div></div><div class="trow" style="top:455px"><div class="abs" style="left:20px;top:8px;width:5px;height:1px;background:repeating-linear-gradient(90deg,#808080 0 1px,transparent 1px 2px)"></div><svg class="abs" style="left:10px;top:4px" width="9" height="9" viewBox="0 0 9 9"><rect x="0.5" y="0.5" width="8" height="8" fill="#fff" stroke="#919191"/><path d="M2 4.5 H7 M4.5 2 V7" stroke="#000" stroke-width="1"/></svg><svg class="abs" style="left:25.6px;top:1px" width="15" height="13.4" viewBox="0 0 16 14" preserveAspectRatio="none"><path d="M0.5 2 Q0.5 0.5 2 0.5 L6 0.5 L7.5 2 L14.5 2 Q15.5 2 15.5 3 L15.5 13.5 L0.5 13.5 Z" fill="#f9eeb4" stroke="#e8d68a" stroke-width="0.8"/><path d="M0.8 4 L15.2 4 L15.2 13.2 L0.8 13.2 Z" fill="#f7e89c"/><path d="M0.8 9 L15.2 9 L15.2 13.2 L0.8 13.2 Z" fill="#f1dc84" opacity="0.75"/></svg><div class="lbl">IT5092</div></div><div class="trow" style="top:471px"><div class="abs" style="left:20px;top:8px;width:5px;height:1px;background:repeating-linear-gradient(90deg,#808080 0 1px,transparent 1px 2px)"></div><svg class="abs" style="left:10px;top:4px" width="9" height="9" viewBox="0 0 9 9"><rect x="0.5" y="0.5" width="8" height="8" fill="#fff" stroke="#919191"/><path d="M2 4.5 H7 M4.5 2 V7" stroke="#000" stroke-width="1"/></svg><svg class="abs" style="left:25.6px;top:1px" width="15" height="13.4" viewBox="0 0 16 14" preserveAspectRatio="none"><path d="M0.5 2 Q0.5 0.5 2 0.5 L6 0.5 L7.5 2 L14.5 2 Q15.5 2 15.5 3 L15.5 13.5 L0.5 13.5 Z" fill="#f9eeb4" stroke="#e8d68a" stroke-width="0.8"/><path d="M0.8 4 L15.2 4 L15.2 13.2 L0.8 13.2 Z" fill="#f7e89c"/><path d="M0.8 9 L15.2 9 L15.2 13.2 L0.8 13.2 Z" fill="#f1dc84" opacity="0.75"/></svg><div class="lbl">IT5100</div></div><div class="trow" style="top:487px"><div class="abs" style="left:20px;top:8px;width:5px;height:1px;background:repeating-linear-gradient(90deg,#808080 0 1px,transparent 1px 2px)"></div><svg class="abs" style="left:10px;top:4px" width="9" height="9" viewBox="0 0 9 9"><rect x="0.5" y="0.5" width="8" height="8" fill="#fff" stroke="#919191"/><path d="M2 4.5 H7 M4.5 2 V7" stroke="#000" stroke-width="1"/></svg><svg class="abs" style="left:25.6px;top:1px" width="15" height="13.4" viewBox="0 0 16 14" preserveAspectRatio="none"><path d="M0.5 2 Q0.5 0.5 2 0.5 L6 0.5 L7.5 2 L14.5 2 Q15.5 2 15.5 3 L15.5 13.5 L0.5 13.5 Z" fill="#f9eeb4" stroke="#e8d68a" stroke-width="0.8"/><path d="M0.8 4 L15.2 4 L15.2 13.2 L0.8 13.2 Z" fill="#f7e89c"/><path d="M0.8 9 L15.2 9 L15.2 13.2 L0.8 13.2 Z" fill="#f1dc84" opacity="0.75"/></svg><div class="lbl">IT5120</div></div><div class="trow" style="top:503px"><div class="abs" style="left:20px;top:8px;width:5px;height:1px;background:repeating-linear-gradient(90deg,#808080 0 1px,transparent 1px 2px)"></div><svg class="abs" style="left:10px;top:4px" width="9" height="9" viewBox="0 0 9 9"><rect x="0.5" y="0.5" width="8" height="8" fill="#fff" stroke="#919191"/><path d="M2 4.5 H7 M4.5 2 V7" stroke="#000" stroke-width="1"/></svg><svg class="abs" style="left:25.6px;top:1px" width="15" height="13.4" viewBox="0 0 16 14" preserveAspectRatio="none"><path d="M0.5 2 Q0.5 0.5 2 0.5 L6 0.5 L7.5 2 L14.5 2 Q15.5 2 15.5 3 L15.5 13.5 L0.5 13.5 Z" fill="#f9eeb4" stroke="#e8d68a" stroke-width="0.8"/><path d="M0.8 4 L15.2 4 L15.2 13.2 L0.8 13.2 Z" fill="#f7e89c"/><path d="M0.8 9 L15.2 9 L15.2 13.2 L0.8 13.2 Z" fill="#f1dc84" opacity="0.75"/></svg><div class="lbl">IT5130</div></div><div class="trow" style="top:519px"><div class="abs" style="left:20px;top:8px;width:5px;height:1px;background:repeating-linear-gradient(90deg,#808080 0 1px,transparent 1px 2px)"></div><svg class="abs" style="left:10px;top:4px" width="9" height="9" viewBox="0 0 9 9"><rect x="0.5" y="0.5" width="8" height="8" fill="#fff" stroke="#919191"/><path d="M2 4.5 H7 M4.5 2 V7" stroke="#000" stroke-width="1"/></svg><svg class="abs" style="left:25.6px;top:1px" width="15" height="13.4" viewBox="0 0 16 14" preserveAspectRatio="none"><path d="M0.5 2 Q0.5 0.5 2 0.5 L6 0.5 L7.5 2 L14.5 2 Q15.5 2 15.5 3 L15.5 13.5 L0.5 13.5 Z" fill="#f9eeb4" stroke="#e8d68a" stroke-width="0.8"/><path d="M0.8 4 L15.2 4 L15.2 13.2 L0.8 13.2 Z" fill="#f7e89c"/><path d="M0.8 9 L15.2 9 L15.2 13.2 L0.8 13.2 Z" fill="#f1dc84" opacity="0.75"/></svg><div class="lbl">IT5150</div></div><div class="trow" style="top:535px"><div class="abs" style="left:20px;top:8px;width:5px;height:1px;background:repeating-linear-gradient(90deg,#808080 0 1px,transparent 1px 2px)"></div><svg class="abs" style="left:10px;top:4px" width="9" height="9" viewBox="0 0 9 9"><rect x="0.5" y="0.5" width="8" height="8" fill="#fff" stroke="#919191"/><path d="M2 4.5 H7 M4.5 2 V7" stroke="#000" stroke-width="1"/></svg><svg class="abs" style="left:25.6px;top:1px" width="15" height="13.4" viewBox="0 0 16 14" preserveAspectRatio="none"><path d="M0.5 2 Q0.5 0.5 2 0.5 L6 0.5 L7.5 2 L14.5 2 Q15.5 2 15.5 3 L15.5 13.5 L0.5 13.5 Z" fill="#f9eeb4" stroke="#e8d68a" stroke-width="0.8"/><path d="M0.8 4 L15.2 4 L15.2 13.2 L0.8 13.2 Z" fill="#f7e89c"/><path d="M0.8 9 L15.2 9 L15.2 13.2 L0.8 13.2 Z" fill="#f1dc84" opacity="0.75"/></svg><div class="lbl">IT5160</div></div><div class="trow" style="top:551px"><div class="abs" style="left:20px;top:8px;width:5px;height:1px;background:repeating-linear-gradient(90deg,#808080 0 1px,transparent 1px 2px)"></div><svg class="abs" style="left:10px;top:4px" width="9" height="9" viewBox="0 0 9 9"><rect x="0.5" y="0.5" width="8" height="8" fill="#fff" stroke="#919191"/><path d="M2 4.5 H7 M4.5 2 V7" stroke="#000" stroke-width="1"/></svg><svg class="abs" style="left:25.6px;top:1px" width="15" height="13.4" viewBox="0 0 16 14" preserveAspectRatio="none"><path d="M0.5 2 Q0.5 0.5 2 0.5 L6 0.5 L7.5 2 L14.5 2 Q15.5 2 15.5 3 L15.5 13.5 L0.5 13.5 Z" fill="#f9eeb4" stroke="#e8d68a" stroke-width="0.8"/><path d="M0.8 4 L15.2 4 L15.2 13.2 L0.8 13.2 Z" fill="#f7e89c"/><path d="M0.8 9 L15.2 9 L15.2 13.2 L0.8 13.2 Z" fill="#f1dc84" opacity="0.75"/></svg><div class="lbl">IT5170</div></div><div class="trow" style="top:567px"><div class="abs" style="left:20px;top:8px;width:5px;height:1px;background:repeating-linear-gradient(90deg,#808080 0 1px,transparent 1px 2px)"></div><svg class="abs" style="left:10px;top:4px" width="9" height="9" viewBox="0 0 9 9"><rect x="0.5" y="0.5" width="8" height="8" fill="#fff" stroke="#919191"/><path d="M2 4.5 H7 M4.5 2 V7" stroke="#000" stroke-width="1"/></svg><svg class="abs" style="left:25.6px;top:1px" width="15" height="13.4" viewBox="0 0 16 14" preserveAspectRatio="none"><path d="M0.5 2 Q0.5 0.5 2 0.5 L6 0.5 L7.5 2 L14.5 2 Q15.5 2 15.5 3 L15.5 13.5 L0.5 13.5 Z" fill="#f9eeb4" stroke="#e8d68a" stroke-width="0.8"/><path d="M0.8 4 L15.2 4 L15.2 13.2 L0.8 13.2 Z" fill="#f7e89c"/><path d="M0.8 9 L15.2 9 L15.2 13.2 L0.8 13.2 Z" fill="#f1dc84" opacity="0.75"/></svg><div class="lbl">IT5180</div></div><div class="trow" style="top:583px"><div class="abs" style="left:20px;top:8px;width:5px;height:1px;background:repeating-linear-gradient(90deg,#808080 0 1px,transparent 1px 2px)"></div><svg class="abs" style="left:10px;top:4px" width="9" height="9" viewBox="0 0 9 9"><rect x="0.5" y="0.5" width="8" height="8" fill="#fff" stroke="#919191"/><path d="M2 4.5 H7 M4.5 2 V7" stroke="#000" stroke-width="1"/></svg><svg class="abs" style="left:25.6px;top:1px" width="15" height="13.4" viewBox="0 0 16 14" preserveAspectRatio="none"><path d="M0.5 2 Q0.5 0.5 2 0.5 L6 0.5 L7.5 2 L14.5 2 Q15.5 2 15.5 3 L15.5 13.5 L0.5 13.5 Z" fill="#f9eeb4" stroke="#e8d68a" stroke-width="0.8"/><path d="M0.8 4 L15.2 4 L15.2 13.2 L0.8 13.2 Z" fill="#f7e89c"/><path d="M0.8 9 L15.2 9 L15.2 13.2 L0.8 13.2 Z" fill="#f1dc84" opacity="0.75"/></svg><div class="lbl">IT5190</div></div><div class="trow" style="top:599px"><div class="abs" style="left:20px;top:8px;width:5px;height:1px;background:repeating-linear-gradient(90deg,#808080 0 1px,transparent 1px 2px)"></div><svg class="abs" style="left:10px;top:4px" width="9" height="9" viewBox="0 0 9 9"><rect x="0.5" y="0.5" width="8" height="8" fill="#fff" stroke="#919191"/><path d="M2 4.5 H7 M4.5 2 V7" stroke="#000" stroke-width="1"/></svg><svg class="abs" style="left:25.6px;top:1px" width="15" height="13.4" viewBox="0 0 16 14" preserveAspectRatio="none"><path d="M0.5 2 Q0.5 0.5 2 0.5 L6 0.5 L7.5 2 L14.5 2 Q15.5 2 15.5 3 L15.5 13.5 L0.5 13.5 Z" fill="#f9eeb4" stroke="#e8d68a" stroke-width="0.8"/><path d="M0.8 4 L15.2 4 L15.2 13.2 L0.8 13.2 Z" fill="#f7e89c"/><path d="M0.8 9 L15.2 9 L15.2 13.2 L0.8 13.2 Z" fill="#f1dc84" opacity="0.75"/></svg><div class="lbl">IT5210 Plus</div></div><div class="trow" style="top:615px"><div class="abs" style="left:20px;top:8px;width:5px;height:1px;background:repeating-linear-gradient(90deg,#808080 0 1px,transparent 1px 2px)"></div><svg class="abs" style="left:10px;top:4px" width="9" height="9" viewBox="0 0 9 9"><rect x="0.5" y="0.5" width="8" height="8" fill="#fff" stroke="#919191"/><path d="M2 4.5 H7 M4.5 2 V7" stroke="#000" stroke-width="1"/></svg><svg class="abs" style="left:25.6px;top:1px" width="15" height="13.4" viewBox="0 0 16 14" preserveAspectRatio="none"><path d="M0.5 2 Q0.5 0.5 2 0.5 L6 0.5 L7.5 2 L14.5 2 Q15.5 2 15.5 3 L15.5 13.5 L0.5 13.5 Z" fill="#f9eeb4" stroke="#e8d68a" stroke-width="0.8"/><path d="M0.8 4 L15.2 4 L15.2 13.2 L0.8 13.2 Z" fill="#f7e89c"/><path d="M0.8 9 L15.2 9 L15.2 13.2 L0.8 13.2 Z" fill="#f1dc84" opacity="0.75"/></svg><div class="lbl">IT5220</div></div><div class="trow" style="top:631px"><div class="abs" style="left:20px;top:8px;width:5px;height:1px;background:repeating-linear-gradient(90deg,#808080 0 1px,transparent 1px 2px)"></div><svg class="abs" style="left:10px;top:4px" width="9" height="9" viewBox="0 0 9 9"><rect x="0.5" y="0.5" width="8" height="8" fill="#fff" stroke="#919191"/><path d="M2 4.5 H7" stroke="#000" stroke-width="1"/></svg><svg class="abs" style="left:25.6px;top:1px" width="15" height="13.4" viewBox="0 0 16 14" preserveAspectRatio="none"><path d="M0.5 2 Q0.5 0.5 2 0.5 L6 0.5 L7.5 2 L14.5 2 Q15.5 2 15.5 3 L15.5 13.5 L0.5 13.5 Z" fill="#f9eeb4" stroke="#e8d68a" stroke-width="0.8"/><path d="M0.8 4 L15.2 4 L15.2 13.2 L0.8 13.2 Z" fill="#f7e89c"/><path d="M0.8 9 L15.2 9 L15.2 13.2 L0.8 13.2 Z" fill="#f1dc84" opacity="0.75"/></svg><div class="lbl">IT5230</div></div><div class="abs" style="left:33px;top:645px;width:1px;height:26px;background:repeating-linear-gradient(180deg,#808080 0 1px,transparent 1px 2px)"></div><div class="abs" style="left:34px;top:655px;width:10px;height:1px;background:repeating-linear-gradient(90deg,#808080 0 1px,transparent 1px 2px)"></div><svg class="abs" style="left:44px;top:648px" width="18" height="17" viewBox="0 0 18 17"><path d="M5 0.5 L13 0.5 L17.5 5 L17.5 17 L5 17 Z" fill="#e6f1fa" stroke="#b9cee2" stroke-width="0.8"/><rect x="7" y="10" width="8" height="1.2" fill="#b8cfe6"/><rect x="7" y="13" width="8" height="1.2" fill="#b8cfe6"/><rect x="0.5" y="2.5" width="14" height="7" rx="1" fill="#c4141c" stroke="#8a0c12" stroke-width="0.8"/><text x="7.5" y="8.6" font-size="6.5" font-weight="bold" fill="#fff" text-anchor="middle" font-family='"Liberation Sans",sans-serif' textLength="11.5" lengthAdjust="spacingAndGlyphs">PDF</text></svg><div class="abs" style="left:34px;top:671px;width:10px;height:1px;background:repeating-linear-gradient(90deg,#808080 0 1px,transparent 1px 2px)"></div><svg class="abs" style="left:44px;top:664px" width="18" height="17" viewBox="0 0 18 17"><path d="M5 0.5 L13 0.5 L17.5 5 L17.5 17 L5 17 Z" fill="#e6f1fa" stroke="#b9cee2" stroke-width="0.8"/><rect x="7" y="10" width="8" height="1.2" fill="#b8cfe6"/><rect x="7" y="13" width="8" height="1.2" fill="#b8cfe6"/><rect x="0.5" y="2.5" width="14" height="7" rx="1" fill="#c4141c" stroke="#8a0c12" stroke-width="0.8"/><text x="7.5" y="8.6" font-size="6.5" font-weight="bold" fill="#fff" text-anchor="middle" font-family='"Liberation Sans",sans-serif' textLength="11.5" lengthAdjust="spacingAndGlyphs">PDF</text></svg><div class="abs" style="left:63.5px;top:647px;width:153px;height:16px;background:#3399ff;outline:1px dotted #1a1a1a;outline-offset:-1px"></div><div class="abs mono" style="left:65px;top:647px;color:#fff">S42M98JB1(S285)_Schematic</div><div class="abs mono" style="left:65px;top:663px">S42M98JB2-1(S285)_Components</div><div class="abs" style="left:27px;top:679px;width:13px;height:2px;border-radius:3px 3px 0 0;background:#f8f0c4"></div><div class="abs" style="left:235px;top:7px;width:17px;height:674px;background:#fff;border:1px solid #dcdcdc;box-sizing:border-box"></div><div class="abs" style="left:235px;top:7px;width:17px;height:17px;border:1px solid #c8c8c8;box-sizing:border-box;background:#fff"></div><svg class="abs" style="left:239px;top:12px" width="9" height="6" viewBox="0 0 9 6"><path d="M0.5 5.5 L4.5 1 L8.5 5.5" fill="none" stroke="#505050" stroke-width="1.3"/></svg><div class="abs" style="left:235px;top:664px;width:17px;height:17px;border:1px solid #c8c8c8;box-sizing:border-box;background:#fff"></div><svg class="abs" style="left:239px;top:670px" width="9" height="6" viewBox="0 0 9 6"><path d="M0.5 0.5 L4.5 5 L8.5 0.5" fill="none" stroke="#505050" stroke-width="1.3"/></svg><div class="abs" style="left:235px;top:295px;width:17px;height:100px;background:#dadada;border:1px solid #b4b4b4;box-sizing:border-box"></div><div class="abs" style="left:240px;top:341px;width:7px;height:1px;background:#404040;box-shadow:0 3px 0 #404040,0 6px 0 #404040"></div><div class="abs" style="left:7px;top:681px;width:228px;height:17px;background:#fff;border:1px solid #c8c8c8;box-sizing:border-box"></div><div class="abs" style="left:7px;top:681px;width:17px;height:17px;border:1px solid #c0c0c0;box-sizing:border-box;background:#fff"></div><svg class="abs" style="left:12px;top:685px" width="6" height="9" viewBox="0 0 6 9"><path d="M5.5 0.5 L1 4.5 L5.5 8.5" fill="none" stroke="#505050" stroke-width="1.3"/></svg><div class="abs" style="left:218px;top:681px;width:17px;height:17px;border:1px solid #c0c0c0;box-sizing:border-box;background:#fff"></div><svg class="abs" style="left:224px;top:685px" width="6" height="9" viewBox="0 0 6 9"><path d="M0.5 0.5 L5 4.5 L0.5 8.5" fill="none" stroke="#505050" stroke-width="1.3"/></svg><div class="abs" style="left:42px;top:681px;width:176px;height:17px;background:#dadada;border:1px solid #b4b4b4;box-sizing:border-box"></div><div class="abs" style="left:126px;top:686px;width:1px;height:7px;background:#404040;box-shadow:3px 0 0 #404040,6px 0 0 #404040"></div></div>
<div class="abs" style="left:254px;top:134px;width:7px;height:702px;background:#f8f8f8"></div><svg class="abs" style="left:254px;top:489px" width="6" height="10" viewBox="0 0 6 10"><path d="M1 0.5 L5 5 L1 9.5 Z" fill="#e02020"/></svg>
<div class="abs" style="left:261px;top:134px;width:1260px;height:27px;background:#f1f1f1;border-left:1px solid #bdbdbd;box-sizing:border-box"></div><div class="abs" style="left:261px;top:160px;width:1260px;height:1px;background:#d0d0d0"></div><div class="abs" style="left:261px;top:161px;width:1260px;height:1px;background:#8c8c8c"></div><svg class="abs" style="left:268px;top:139px" width="17" height="18" viewBox="0 0 17 18"><defs><linearGradient id="gcp" x1="0" y1="0" x2="1" y2="0"><stop offset="0" stop-color="#f6dc96"/><stop offset="1" stop-color="#e8bc5c"/></linearGradient><linearGradient id="gbl" x1="0" y1="0" x2="0" y2="1"><stop offset="0" stop-color="#d6e8f8"/><stop offset="1" stop-color="#a4c4e4"/></linearGradient></defs><path d="M1.3 1.5 L12.5 1.5 L12.5 4.5 L6 4.5 L6 15.8 L1.3 14.6 Z" fill="url(#gcp)" stroke="#d8ae58" stroke-width="0.7"/><path d="M6.5 4.3 L12.3 4.3 L14.8 6.8 L14.8 15.8 L6.5 15.8 Z" fill="#fdfdfd" stroke="#8e98a8" stroke-width="0.8"/><path d="M12.3 4.3 L12.3 6.8 L14.8 6.8" fill="#e4ecf4" stroke="#8e98a8" stroke-width="0.6"/><path d="M8 7.5 H11.5 M8 9.4 H13.4 M8 11.3 H13.4 M8 13.2 H12" stroke="#a8c0b8" stroke-width="0.8"/></svg><svg class="abs" style="left:291px;top:139px" width="18" height="18" viewBox="0 0 18 18"><path d="M7.5 6.5 L16.5 6.5 L16.5 12.5 L13.5 12.5 L13.5 16.3 L7.5 16.3 Z" fill="#fbfbfb" stroke="#c6c6c6" stroke-width="0.9"/><path d="M1.3 3.8 L3.8 1.3 L10.8 1.3 L10.8 10.3 L1.3 10.3 Z" fill="url(#gbl)" stroke="#5f86b0" stroke-width="1"/><path d="M1.3 3.8 L3.8 3.8 L3.8 1.3" fill="#e8f2fb" stroke="#5f86b0" stroke-width="0.7"/><path d="M12.3 2.6 H14 Q15 2.6 15 3.8 V4.6" fill="none" stroke="#111" stroke-width="1.3"/><path d="M12.8 4.3 L17.2 4.3 L15 6.4 Z" fill="#111"/></svg><svg class="abs" style="left:315px;top:139px" width="18" height="18" viewBox="0 0 18 18"><path d="M1.5 6.5 L10.5 6.5 L10.5 16.3 L4.5 16.3 L4.5 12.5 L1.5 12.5 Z" fill="#fbfbfb" stroke="#c6c6c6" stroke-width="0.9"/><path d="M7.2 1.3 L14.2 1.3 L16.7 3.8 L16.7 10.3 L7.2 10.3 Z" fill="url(#gbl)" stroke="#5f86b0" stroke-width="1"/><path d="M14.2 1.3 L14.2 3.8 L16.7 3.8" fill="#e8f2fb" stroke="#5f86b0" stroke-width="0.7"/><path d="M5.7 2.6 H4 Q3 2.6 3 3.8 V4.6" fill="none" stroke="#111" stroke-width="1.3"/><path d="M0.8 4.3 L5.2 4.3 L3 6.4 Z" fill="#111"/></svg><div class="abs" style="left:336px;top:137px;width:1px;height:22px;background:#a8a8a8"></div><div class="abs sans" style="left:346px;top:142px;font-size:12.3px;line-height:15px;white-space:pre">Page:</div><div class="abs" style="left:384px;top:138px;width:40px;height:20px;background:#fff;border-top:1px solid #9c9c9c;border-left:1px solid #c4c4c4;box-sizing:border-box"></div><div class="abs sans" style="left:384px;top:142px;width:35.5px;text-align:right;font-size:12.3px;line-height:15px;white-space:pre">1</div><div class="abs sans" style="left:428px;top:142px;font-size:12.3px;line-height:15px;white-space:pre">/ 8</div><svg class="abs" style="left:456px;top:139px" width="13" height="18" viewBox="0 0 13 18"><path d="M11.5 1 L11.5 16.5 L0.8 8.8 Z" fill="#a2a2a2" stroke="#969696" stroke-width="0.8"/></svg><svg class="abs" style="left:483px;top:139px" width="13" height="18" viewBox="0 0 13 18"><defs><linearGradient id="gy" x1="0" y1="0" x2="1" y2="1"><stop offset="0" stop-color="#f8dc6c"/><stop offset="1" stop-color="#e8b020"/></linearGradient></defs><path d="M1.5 1 L1.5 16.5 L12.2 8.8 Z" fill="url(#gy)" stroke="#d09a18" stroke-width="0.9"/></svg><svg class="abs" style="left:505px;top:140px" width="14" height="16" viewBox="0 0 14 16"><rect x="0.6" y="0.6" width="12.3" height="14.8" fill="#d8eafa" stroke="#4a6ea8" stroke-width="1.1"/><path d="M2.5 8 L6 5 L6 11 Z M11 8 L7.5 5 L7.5 11 Z" fill="#1f4f9a"/></svg><svg class="abs" style="left:528px;top:140px" width="16" height="16" viewBox="0 0 16 16"><rect x="0.6" y="0.6" width="14.3" height="14.8" fill="#d8eafa" stroke="#4a6ea8" stroke-width="1.1"/><path d="M7.8 2.5 L10 5 L5.6 5 Z M7.8 13.5 L10 11 L5.6 11 Z M2.3 8 L4.6 5.8 L4.6 10.2 Z M13.3 8 L11 5.8 L11 10.2 Z" fill="#2a5aa8"/></svg><svg class="abs" style="left:552px;top:140px" width="17" height="17" viewBox="0 0 17 17"><defs><linearGradient id="gz552" x1="0" y1="0" x2="0" y2="1"><stop offset="0" stop-color="#d4ecfc"/><stop offset="1" stop-color="#8cc4f0"/></linearGradient></defs><circle cx="8.3" cy="8" r="7.3" fill="url(#gz552)" stroke="#8a9cb0" stroke-width="1.2"/><path d="M4 8 H12.6" stroke="#1858a8" stroke-width="2"/></svg><svg class="abs" style="left:576px;top:140px" width="17" height="17" viewBox="0 0 17 17"><defs><linearGradient id="gz576" x1="0" y1="0" x2="0" y2="1"><stop offset="0" stop-color="#d4ecfc"/><stop offset="1" stop-color="#8cc4f0"/></linearGradient></defs><circle cx="8.3" cy="8" r="7.3" fill="url(#gz576)" stroke="#8a9cb0" stroke-width="1.2"/><path d="M4 8 H12.6 M8.3 3.7 V12.3" stroke="#1858a8" stroke-width="2"/></svg><div class="abs" style="left:597px;top:137px;width:1px;height:22px;background:#a8a8a8"></div><div class="abs sans" style="left:606px;top:142px;font-size:12.3px;line-height:15px;white-space:pre">Find:</div><div class="abs" style="left:639px;top:138px;width:160px;height:20px;background:#fff;border-top:1px solid #8c8c8c;border-left:1px solid #9c9c9c;box-sizing:border-box"></div><svg class="abs" style="left:804px;top:139px" width="18" height="18" viewBox="0 0 18 18"><path d="M1.3 3 L9 3 L10.3 4.3 L10.3 15.5 L1.3 15.5 Z" fill="#a2a2a2"/><path d="M15.8 1.3 L15.8 16.8 L6.5 9 Z" fill="#a2a2a2"/><circle cx="5" cy="5.6" r="0.9" fill="#d0d0d0"/></svg><svg class="abs" style="left:829px;top:139px" width="18" height="18" viewBox="0 0 18 18"><path d="M6.8 3 L14.5 3 L15.8 4.3 L15.8 15.5 L6.8 15.5 Z" fill="#a2a2a2"/><path d="M1.3 1.3 L1.3 16.8 L10.6 9 Z" fill="#a2a2a2"/><circle cx="11.3" cy="5.6" r="0.9" fill="#d0d0d0"/></svg><div class="abs sans" style="left:853.5px;top:142.6px;font-size:14.5px;line-height:14.5px;color:#8a64d8">A</div><div class="abs sans" style="left:861.2px;top:138.6px;font-size:10.5px;line-height:10.5px;color:#c83088;font-weight:bold">a</div>
<div class="abs" style="left:261px;top:162px;width:1244px;height:672px;background:#999"></div><div class="abs" style="left:261px;top:834px;width:1260px;height:2px;background:#f4f4f4"></div><div class="abs" style="left:1505px;top:162px;width:15px;height:672px;background:#fff"></div><div class="abs" style="left:1520px;top:31px;width:1px;height:828px;background:#6bc9e9;z-index:5"></div><svg class="abs" style="left:1508px;top:166px" width="9" height="6" viewBox="0 0 9 6"><path d="M0.7 5.3 L4.5 1 L8.3 5.3" fill="none" stroke="#505050" stroke-width="1.3"/></svg><div class="abs" style="left:1505px;top:178px;width:15px;height:79px;background:#dcdcdc;border-top:1px solid #b8b8b8;border-bottom:1px solid #a8a8a8;box-sizing:border-box"></div><div class="abs" style="left:1510px;top:214px;width:7px;height:2px;background:#484848;box-shadow:0 3px 0 #484848,0 6px 0 #484848"></div><svg class="abs" style="left:1508px;top:823px" width="9" height="6" viewBox="0 0 9 6"><path d="M0.7 0.7 L4.5 5 L8.3 0.7" fill="none" stroke="#505050" stroke-width="1.3"/></svg><svg class="abs" style="left:261px;top:161px" width="1244" height="673" viewBox="261 161 1244 673" font-family='"Liberation Sans",sans-serif' fill="none"><rect x="408" y="162.6" width="950.2" height="680" fill="#fff"/><path d="M408.0 174.4 L1298.6 174.4" stroke="#a6a6a6" stroke-width="1.1"/><path d="M1298.6 174.4 L1298.6 840.0" stroke="#a6a6a6" stroke-width="1.1"/><rect x="422.4" y="188.4" width="861.3" height="632.1" stroke="#a6a6a6" stroke-width="1.1" fill="none"/><path d="M565.4 174.4 L565.4 188.4" stroke="#6a6a6a" stroke-width="1"/><path d="M565.4 820.5 L565.4 840.0" stroke="#8a8a8a" stroke-width="1"/><path d="M709.0 174.4 L709.0 188.4" stroke="#6a6a6a" stroke-width="1"/><path d="M709.0 820.5 L709.0 840.0" stroke="#8a8a8a" stroke-width="1"/><path d="M852.6 174.4 L852.6 188.4" stroke="#6a6a6a" stroke-width="1"/><path d="M852.6 820.5 L852.6 840.0" stroke="#8a8a8a" stroke-width="1"/><path d="M996.4 174.4 L996.4 188.4" stroke="#6a6a6a" stroke-width="1"/><path d="M996.4 820.5 L996.4 840.0" stroke="#8a8a8a" stroke-width="1"/><path d="M1140.2 174.4 L1140.2 188.4" stroke="#6a6a6a" stroke-width="1"/><path d="M1140.2 820.5 L1140.2 840.0" stroke="#8a8a8a" stroke-width="1"/><path d="M408.0 346.3 L422.4 346.3" stroke="#8a8a8a" stroke-width="1"/><path d="M1283.7 346.3 L1298.6 346.3" stroke="#8a8a8a" stroke-width="1"/><path d="M408.0 504.3 L422.4 504.3" stroke="#8a8a8a" stroke-width="1"/><path d="M1283.7 504.3 L1298.6 504.3" stroke="#8a8a8a" stroke-width="1"/><path d="M408.0 662.3 L422.4 662.3" stroke="#8a8a8a" stroke-width="1"/><path d="M1283.7 662.3 L1298.6 662.3" stroke="#8a8a8a" stroke-width="1"/><text x="493.0" y="186.0" font-size="8" fill="#111" text-anchor="middle" font-weight="bold">6</text><text x="493.0" y="830.0" font-size="8" fill="#111" text-anchor="middle" font-weight="bold">6</text><text x="637.0" y="186.0" font-size="8" fill="#111" text-anchor="middle" font-weight="bold">5</text><text x="637.0" y="830.0" font-size="8" fill="#111" text-anchor="middle" font-weight="bold">5</text><text x="781.0" y="186.0" font-size="8" fill="#111" text-anchor="middle" font-weight="bold">4</text><text x="781.0" y="830.0" font-size="8" fill="#111" text-anchor="middle" font-weight="bold">4</text><text x="924.5" y="186.0" font-size="8" fill="#111" text-anchor="middle" font-weight="bold">3</text><text x="924.5" y="830.0" font-size="8" fill="#111" text-anchor="middle" font-weight="bold">3</text><text x="1067.5" y="186.0" font-size="8" fill="#111" text-anchor="middle" font-weight="bold">2</text><text x="1067.5" y="830.0" font-size="8" fill="#111" text-anchor="middle" font-weight="bold">2</text><text x="1211.5" y="186.0" font-size="8" fill="#111" text-anchor="middle" font-weight="bold">1</text><text x="1211.5" y="830.0" font-size="8" fill="#111" text-anchor="middle" font-weight="bold">1</text><text x="417.0" y="277.9" font-size="7.6" fill="#111" text-anchor="middle" font-weight="bold">D</text><text x="1288.3" y="277.9" font-size="7.6" fill="#111" text-anchor="middle" font-weight="bold">D</text><text x="417.0" y="435.9" font-size="7.6" fill="#111" text-anchor="middle" font-weight="bold">C</text><text x="1288.3" y="435.9" font-size="7.6" fill="#111" text-anchor="middle" font-weight="bold">C</text><text x="417.0" y="593.9" font-size="7.6" fill="#111" text-anchor="middle" font-weight="bold">B</text><text x="1288.3" y="593.9" font-size="7.6" fill="#111" text-anchor="middle" font-weight="bold">B</text><text x="417.0" y="751.9" font-size="7.6" fill="#111" text-anchor="middle" font-weight="bold">A</text><text x="1288.3" y="751.9" font-size="7.6" fill="#111" text-anchor="middle" font-weight="bold">A</text><rect x="425.4" y="191.5" width="568.2" height="468.3" stroke="#a6a6a6" stroke-width="1.1" fill="none"/><rect x="999.6" y="507.6" width="281.4" height="152.2" stroke="#a6a6a6" stroke-width="1.1" fill="none"/><path d="M999.6 817.7 L999.6 665.2 L1281.0 665.2 L1281.0 745.7 L1138.0 745.7 L1138.0 771.5 L1065.7 771.5 L1065.7 817.7 L999.6 817.7" stroke="#a6a6a6" stroke-width="1.1" fill="none"/><rect x="616.0" y="229.0" width="8.0" height="407.0" fill="#ffffcc" opacity="0.14"/><rect x="795.0" y="229.0" width="8.0" height="407.0" fill="#ffffcc" opacity="0.14"/><rect x="616.0" y="229.0" width="187.0" height="3.5" fill="#ffffcc" opacity="0.14"/><rect x="623.4" y="231.5" width="172.0" height="402.0" stroke="#7c7c6a" stroke-width="1" fill="none"/><text x="709.5" y="428.0" font-size="3.904" fill="#555" text-anchor="middle" textLength="11.9" lengthAdjust="spacingAndGlyphs">U1000-A</text><text x="709.5" y="433.5" font-size="3.904" fill="#555" text-anchor="middle" textLength="22.0" lengthAdjust="spacingAndGlyphs">SDX55_FBGA433</text><text x="624.6" y="247.8" font-size="3.538" fill="#2c2c2c" text-anchor="start" textLength="10.8" lengthAdjust="spacingAndGlyphs">COMCOM0</text><text x="622.2" y="245.9" font-size="3.538" fill="#555" text-anchor="end" textLength="3.1" lengthAdjust="spacingAndGlyphs">H5</text><path d="M549.0 246.4 L623.4 246.4" stroke="#767676" stroke-width="0.8"/><rect x="543.0" y="244.7" width="6.0" height="3.4" rx="1" stroke="#8a8a8a" stroke-width="0.6" fill="#fff"/><text x="541.0" y="248.1" font-size="5" fill="#3c3cb8" text-anchor="end" textLength="15.6" lengthAdjust="spacingAndGlyphs">BOC_BAND</text><path d="M525.4 248.8 h15.6" stroke="#4646c0" stroke-width="0.55"/><text x="511.0" y="247.4" font-size="3.538" fill="#666" text-anchor="start" textLength="3.1" lengthAdjust="spacingAndGlyphs">P9</text><text x="624.6" y="253.6" font-size="3.538" fill="#2c2c2c" text-anchor="start" textLength="10.8" lengthAdjust="spacingAndGlyphs">COMCOM1</text><text x="622.2" y="251.7" font-size="3.538" fill="#555" text-anchor="end" textLength="3.1" lengthAdjust="spacingAndGlyphs">E5</text><text x="624.6" y="259.3" font-size="3.538" fill="#2c2c2c" text-anchor="start" textLength="7.7" lengthAdjust="spacingAndGlyphs">COMM0</text><text x="622.2" y="257.4" font-size="3.538" fill="#555" text-anchor="end" textLength="4.6" lengthAdjust="spacingAndGlyphs">AD5</text><path d="M549.0 257.9 L623.4 257.9" stroke="#767676" stroke-width="0.8"/><rect x="543.0" y="256.2" width="6.0" height="3.4" rx="1" stroke="#8a8a8a" stroke-width="0.6" fill="#fff"/><text x="541.0" y="259.6" font-size="5" fill="#3c3cb8" text-anchor="end" textLength="13.7" lengthAdjust="spacingAndGlyphs">GRC_BUS</text><path d="M527.4 260.2 h13.7" stroke="#4646c0" stroke-width="0.55"/><text x="511.0" y="258.9" font-size="3.538" fill="#666" text-anchor="start" textLength="3.1" lengthAdjust="spacingAndGlyphs">P9</text><text x="624.6" y="265.0" font-size="3.538" fill="#2c2c2c" text-anchor="start" textLength="7.7" lengthAdjust="spacingAndGlyphs">COMM1</text><text x="622.2" y="263.1" font-size="3.538" fill="#555" text-anchor="end" textLength="4.6" lengthAdjust="spacingAndGlyphs">L18</text><path d="M549.0 263.6 L623.4 263.6" stroke="#767676" stroke-width="0.8"/><rect x="543.0" y="261.9" width="6.0" height="3.4" rx="1" stroke="#8a8a8a" stroke-width="0.6" fill="#fff"/><text x="541.0" y="265.3" font-size="5" fill="#3c3cb8" text-anchor="end" textLength="13.7" lengthAdjust="spacingAndGlyphs">GRC_CLK</text><path d="M527.4 266.0 h13.7" stroke="#4646c0" stroke-width="0.55"/><text x="511.0" y="264.6" font-size="3.538" fill="#666" text-anchor="start" textLength="3.1" lengthAdjust="spacingAndGlyphs">P9</text><text x="624.6" y="270.8" font-size="3.538" fill="#2c2c2c" text-anchor="start" textLength="7.7" lengthAdjust="spacingAndGlyphs">COMM2</text><text x="622.2" y="268.9" font-size="3.538" fill="#555" text-anchor="end" textLength="3.1" lengthAdjust="spacingAndGlyphs">H5</text><path d="M549.0 269.4 L623.4 269.4" stroke="#767676" stroke-width="0.8"/><rect x="543.0" y="267.7" width="6.0" height="3.4" rx="1" stroke="#8a8a8a" stroke-width="0.6" fill="#fff"/><text x="541.0" y="271.1" font-size="5" fill="#3c3cb8" text-anchor="end" textLength="15.6" lengthAdjust="spacingAndGlyphs">GRFC_BUS</text><path d="M525.4 271.7 h15.6" stroke="#4646c0" stroke-width="0.55"/><text x="511.0" y="270.4" font-size="3.538" fill="#666" text-anchor="start" textLength="3.1" lengthAdjust="spacingAndGlyphs">P9</text><text x="624.6" y="276.5" font-size="3.538" fill="#2c2c2c" text-anchor="start" textLength="7.7" lengthAdjust="spacingAndGlyphs">COMM3</text><text x="622.2" y="274.6" font-size="3.538" fill="#555" text-anchor="end" textLength="4.6" lengthAdjust="spacingAndGlyphs">J18</text><path d="M549.0 275.1 L623.4 275.1" stroke="#767676" stroke-width="0.8"/><rect x="543.0" y="273.4" width="6.0" height="3.4" rx="1" stroke="#8a8a8a" stroke-width="0.6" fill="#fff"/><text x="541.0" y="276.8" font-size="5" fill="#3c3cb8" text-anchor="end" textLength="15.6" lengthAdjust="spacingAndGlyphs">GRFC_DIO</text><path d="M525.4 277.5 h15.6" stroke="#4646c0" stroke-width="0.55"/><text x="511.0" y="276.1" font-size="3.538" fill="#666" text-anchor="start" textLength="3.1" lengthAdjust="spacingAndGlyphs">P9</text><text x="624.6" y="282.3" font-size="3.538" fill="#2c2c2c" text-anchor="start" textLength="9.2" lengthAdjust="spacingAndGlyphs">COMM14</text><text x="622.2" y="280.4" font-size="3.538" fill="#555" text-anchor="end" textLength="3.1" lengthAdjust="spacingAndGlyphs">K5</text><path d="M549.0 280.9 L623.4 280.9" stroke="#767676" stroke-width="0.8"/><rect x="543.0" y="279.2" width="6.0" height="3.4" rx="1" stroke="#8a8a8a" stroke-width="0.6" fill="#fff"/><text x="541.0" y="282.6" font-size="5" fill="#3c3cb8" text-anchor="end" textLength="13.7" lengthAdjust="spacingAndGlyphs">GRC_DAT</text><path d="M527.4 283.2 h13.7" stroke="#4646c0" stroke-width="0.55"/><text x="511.0" y="281.9" font-size="3.538" fill="#666" text-anchor="start" textLength="3.1" lengthAdjust="spacingAndGlyphs">P9</text><text x="624.6" y="293.8" font-size="3.538" fill="#2c2c2c" text-anchor="start" textLength="32.3" lengthAdjust="spacingAndGlyphs">COEXUSIC/SDC2/GPIO_36</text><text x="622.2" y="291.9" font-size="3.538" fill="#555" text-anchor="end" textLength="3.1" lengthAdjust="spacingAndGlyphs">E3</text><path d="M549.0 292.4 L623.4 292.4" stroke="#767676" stroke-width="0.8"/><rect x="543.0" y="290.7" width="6.0" height="3.4" rx="1" stroke="#8a8a8a" stroke-width="0.6" fill="#fff"/><text x="541.0" y="294.1" font-size="5" fill="#3c3cb8" text-anchor="end" textLength="17.6" lengthAdjust="spacingAndGlyphs">EDVC_BUS0</text><path d="M523.5 294.7 h17.6" stroke="#4646c0" stroke-width="0.55"/><text x="511.0" y="293.4" font-size="3.538" fill="#666" text-anchor="start" textLength="3.1" lengthAdjust="spacingAndGlyphs">P9</text><text x="624.6" y="299.5" font-size="3.538" fill="#2c2c2c" text-anchor="start" textLength="21.5" lengthAdjust="spacingAndGlyphs">COMM19/GPIO_44</text><text x="622.2" y="297.6" font-size="3.538" fill="#555" text-anchor="end" textLength="3.1" lengthAdjust="spacingAndGlyphs">C1</text><path d="M549.0 298.1 L623.4 298.1" stroke="#767676" stroke-width="0.8"/><rect x="543.0" y="296.4" width="6.0" height="3.4" rx="1" stroke="#8a8a8a" stroke-width="0.6" fill="#fff"/><text x="541.0" y="299.8" font-size="5" fill="#3c3cb8" text-anchor="end" textLength="17.6" lengthAdjust="spacingAndGlyphs">EDVC_BUS1</text><path d="M523.5 300.5 h17.6" stroke="#4646c0" stroke-width="0.55"/><text x="511.0" y="299.1" font-size="3.538" fill="#666" text-anchor="start" textLength="3.1" lengthAdjust="spacingAndGlyphs">P9</text><text x="624.6" y="305.3" font-size="3.538" fill="#2c2c2c" text-anchor="start" textLength="21.5" lengthAdjust="spacingAndGlyphs">COMM20/GPIO_52</text><text x="622.2" y="303.4" font-size="3.538" fill="#555" text-anchor="end" textLength="4.6" lengthAdjust="spacingAndGlyphs">AB5</text><path d="M549.0 303.9 L623.4 303.9" stroke="#767676" stroke-width="0.8"/><rect x="543.0" y="302.2" width="6.0" height="3.4" rx="1" stroke="#8a8a8a" stroke-width="0.6" fill="#fff"/><text x="541.0" y="305.6" font-size="5" fill="#3c3cb8" text-anchor="end" textLength="17.6" lengthAdjust="spacingAndGlyphs">EDVC_BUS2</text><path d="M523.5 306.2 h17.6" stroke="#4646c0" stroke-width="0.55"/><text x="511.0" y="304.9" font-size="3.538" fill="#666" text-anchor="start" textLength="3.1" lengthAdjust="spacingAndGlyphs">P9</text><text x="624.6" y="311.0" font-size="3.538" fill="#2c2c2c" text-anchor="start" textLength="21.5" lengthAdjust="spacingAndGlyphs">COMM21/GPIO_01</text><text x="622.2" y="309.1" font-size="3.538" fill="#555" text-anchor="end" textLength="3.1" lengthAdjust="spacingAndGlyphs">R3</text><path d="M549.0 309.6 L623.4 309.6" stroke="#767676" stroke-width="0.8"/><rect x="543.0" y="307.9" width="6.0" height="3.4" rx="1" stroke="#8a8a8a" stroke-width="0.6" fill="#fff"/><text x="541.0" y="311.3" font-size="5" fill="#3c3cb8" text-anchor="end" textLength="17.6" lengthAdjust="spacingAndGlyphs">EDVC_BUS3</text><path d="M523.5 312.0 h17.6" stroke="#4646c0" stroke-width="0.55"/><text x="511.0" y="310.6" font-size="3.538" fill="#666" text-anchor="start" textLength="3.1" lengthAdjust="spacingAndGlyphs">P9</text><text x="624.6" y="316.8" font-size="3.538" fill="#2c2c2c" text-anchor="start" textLength="21.5" lengthAdjust="spacingAndGlyphs">COMM14/GPIO_28</text><text x="622.2" y="314.9" font-size="3.538" fill="#555" text-anchor="end" textLength="3.1" lengthAdjust="spacingAndGlyphs">L5</text><path d="M549.0 315.4 L623.4 315.4" stroke="#767676" stroke-width="0.8"/><rect x="543.0" y="313.7" width="6.0" height="3.4" rx="1" stroke="#8a8a8a" stroke-width="0.6" fill="#fff"/><text x="541.0" y="317.1" font-size="5" fill="#3c3cb8" text-anchor="end" textLength="17.6" lengthAdjust="spacingAndGlyphs">EDVC_BUS4</text><path d="M523.5 317.7 h17.6" stroke="#4646c0" stroke-width="0.55"/><text x="511.0" y="316.4" font-size="3.538" fill="#666" text-anchor="start" textLength="3.1" lengthAdjust="spacingAndGlyphs">P9</text><text x="624.6" y="322.5" font-size="3.538" fill="#2c2c2c" text-anchor="start" textLength="21.5" lengthAdjust="spacingAndGlyphs">COMM25/GPIO_45</text><text x="622.2" y="320.6" font-size="3.538" fill="#555" text-anchor="end" textLength="4.6" lengthAdjust="spacingAndGlyphs">AA5</text><path d="M549.0 321.1 L623.4 321.1" stroke="#767676" stroke-width="0.8"/><rect x="543.0" y="319.4" width="6.0" height="3.4" rx="1" stroke="#8a8a8a" stroke-width="0.6" fill="#fff"/><text x="541.0" y="322.8" font-size="5" fill="#3c3cb8" text-anchor="end" textLength="17.6" lengthAdjust="spacingAndGlyphs">EDVC_BUS5</text><path d="M523.5 323.5 h17.6" stroke="#4646c0" stroke-width="0.55"/><text x="511.0" y="322.1" font-size="3.538" fill="#666" text-anchor="start" textLength="3.1" lengthAdjust="spacingAndGlyphs">P9</text><text x="624.6" y="328.3" font-size="3.538" fill="#2c2c2c" text-anchor="start" textLength="21.5" lengthAdjust="spacingAndGlyphs">COMM26/GPIO_34</text><text x="622.2" y="326.4" font-size="3.538" fill="#555" text-anchor="end" textLength="3.1" lengthAdjust="spacingAndGlyphs">W5</text><path d="M549.0 326.9 L623.4 326.9" stroke="#767676" stroke-width="0.8"/><rect x="543.0" y="325.2" width="6.0" height="3.4" rx="1" stroke="#8a8a8a" stroke-width="0.6" fill="#fff"/><text x="541.0" y="328.6" font-size="5" fill="#3c3cb8" text-anchor="end" textLength="17.6" lengthAdjust="spacingAndGlyphs">EDVC_BUS6</text><path d="M523.5 329.2 h17.6" stroke="#4646c0" stroke-width="0.55"/><text x="511.0" y="327.9" font-size="3.538" fill="#666" text-anchor="start" textLength="3.1" lengthAdjust="spacingAndGlyphs">P9</text><text x="624.6" y="334.0" font-size="3.538" fill="#2c2c2c" text-anchor="start" textLength="21.5" lengthAdjust="spacingAndGlyphs">COMM27/GPIO_20</text><text x="622.2" y="332.1" font-size="3.538" fill="#555" text-anchor="end" textLength="4.6" lengthAdjust="spacingAndGlyphs">AA3</text><path d="M549.0 332.6 L623.4 332.6" stroke="#767676" stroke-width="0.8"/><rect x="543.0" y="330.9" width="6.0" height="3.4" rx="1" stroke="#8a8a8a" stroke-width="0.6" fill="#fff"/><text x="541.0" y="334.3" font-size="5" fill="#3c3cb8" text-anchor="end" textLength="17.6" lengthAdjust="spacingAndGlyphs">EDVC_BUS7</text><path d="M523.5 335.0 h17.6" stroke="#4646c0" stroke-width="0.55"/><text x="511.0" y="333.6" font-size="3.538" fill="#666" text-anchor="start" textLength="3.1" lengthAdjust="spacingAndGlyphs">P9</text><text x="624.6" y="339.8" font-size="3.538" fill="#2c2c2c" text-anchor="start" textLength="36.9" lengthAdjust="spacingAndGlyphs">COMM28/CLK_IDA_0/GPIO_48</text><text x="622.2" y="337.9" font-size="3.538" fill="#555" text-anchor="end" textLength="3.1" lengthAdjust="spacingAndGlyphs">B5</text><path d="M549.0 338.4 L623.4 338.4" stroke="#767676" stroke-width="0.8"/><rect x="543.0" y="336.7" width="6.0" height="3.4" rx="1" stroke="#8a8a8a" stroke-width="0.6" fill="#fff"/><text x="541.0" y="340.1" font-size="5" fill="#3c3cb8" text-anchor="end" textLength="21.4" lengthAdjust="spacingAndGlyphs">EDVC_DAT_RX</text><path d="M519.5 340.7 h21.4" stroke="#4646c0" stroke-width="0.55"/><text x="511.0" y="339.4" font-size="3.538" fill="#666" text-anchor="start" textLength="3.1" lengthAdjust="spacingAndGlyphs">P9</text><text x="624.6" y="345.5" font-size="3.538" fill="#2c2c2c" text-anchor="start" textLength="27.7" lengthAdjust="spacingAndGlyphs">COMM29/MIC/GPIO_11</text><text x="622.2" y="343.6" font-size="3.538" fill="#555" text-anchor="end" textLength="3.1" lengthAdjust="spacingAndGlyphs">C3</text><path d="M549.0 344.1 L623.4 344.1" stroke="#767676" stroke-width="0.8"/><rect x="543.0" y="342.4" width="6.0" height="3.4" rx="1" stroke="#8a8a8a" stroke-width="0.6" fill="#fff"/><text x="541.0" y="345.8" font-size="5" fill="#3c3cb8" text-anchor="end" textLength="23.4" lengthAdjust="spacingAndGlyphs">EDVC_DAT_CLK</text><path d="M517.6 346.5 h23.4" stroke="#4646c0" stroke-width="0.55"/><text x="511.0" y="345.1" font-size="3.538" fill="#666" text-anchor="start" textLength="3.1" lengthAdjust="spacingAndGlyphs">P9</text><text x="624.6" y="351.3" font-size="3.538" fill="#2c2c2c" text-anchor="start" textLength="20.0" lengthAdjust="spacingAndGlyphs">COMM8/GPIO_04</text><text x="622.2" y="349.4" font-size="3.538" fill="#555" text-anchor="end" textLength="3.1" lengthAdjust="spacingAndGlyphs">D3</text><path d="M549.0 349.9 L623.4 349.9" stroke="#767676" stroke-width="0.8"/><rect x="543.0" y="348.2" width="6.0" height="3.4" rx="1" stroke="#8a8a8a" stroke-width="0.6" fill="#fff"/><text x="541.0" y="351.6" font-size="5" fill="#3c3cb8" text-anchor="end" textLength="13.7" lengthAdjust="spacingAndGlyphs">EDR_INT</text><path d="M527.4 352.2 h13.7" stroke="#4646c0" stroke-width="0.55"/><text x="511.0" y="350.9" font-size="3.538" fill="#666" text-anchor="start" textLength="3.1" lengthAdjust="spacingAndGlyphs">P9</text><text x="624.6" y="357.0" font-size="3.538" fill="#2c2c2c" text-anchor="start" textLength="24.6" lengthAdjust="spacingAndGlyphs">COEXUSIC/GPIO_74</text><text x="622.2" y="355.1" font-size="3.538" fill="#555" text-anchor="end" textLength="3.1" lengthAdjust="spacingAndGlyphs">D5</text><path d="M549.0 355.6 L623.4 355.6" stroke="#767676" stroke-width="0.8"/><rect x="543.0" y="353.9" width="6.0" height="3.4" rx="1" stroke="#8a8a8a" stroke-width="0.6" fill="#fff"/><text x="541.0" y="357.3" font-size="5" fill="#3c3cb8" text-anchor="end" textLength="13.7" lengthAdjust="spacingAndGlyphs">EDR_SDO</text><path d="M527.4 358.0 h13.7" stroke="#4646c0" stroke-width="0.55"/><text x="511.0" y="356.6" font-size="3.538" fill="#666" text-anchor="start" textLength="3.1" lengthAdjust="spacingAndGlyphs">P9</text><text x="624.6" y="362.8" font-size="3.538" fill="#2c2c2c" text-anchor="start" textLength="23.1" lengthAdjust="spacingAndGlyphs">GNSS_PA/GPIO_21</text><text x="622.2" y="360.9" font-size="3.538" fill="#555" text-anchor="end" textLength="3.1" lengthAdjust="spacingAndGlyphs">F3</text><path d="M549.0 361.4 L623.4 361.4" stroke="#767676" stroke-width="0.8"/><rect x="543.0" y="359.7" width="6.0" height="3.4" rx="1" stroke="#8a8a8a" stroke-width="0.6" fill="#fff"/><text x="541.0" y="363.1" font-size="5" fill="#3c3cb8" text-anchor="end" textLength="27.3" lengthAdjust="spacingAndGlyphs">EDVC_BAND_CONF</text><path d="M513.7 363.7 h27.3" stroke="#4646c0" stroke-width="0.55"/><text x="511.0" y="362.4" font-size="3.538" fill="#666" text-anchor="start" textLength="3.1" lengthAdjust="spacingAndGlyphs">P9</text><text x="624.6" y="368.5" font-size="3.538" fill="#2c2c2c" text-anchor="start" textLength="26.1" lengthAdjust="spacingAndGlyphs">GNSS_BSTN/GPIO_36</text><text x="622.2" y="366.6" font-size="3.538" fill="#555" text-anchor="end" textLength="3.1" lengthAdjust="spacingAndGlyphs">G3</text><path d="M549.0 367.1 L623.4 367.1" stroke="#767676" stroke-width="0.8"/><rect x="543.0" y="365.4" width="6.0" height="3.4" rx="1" stroke="#8a8a8a" stroke-width="0.6" fill="#fff"/><text x="541.0" y="368.8" font-size="5" fill="#3c3cb8" text-anchor="end" textLength="21.4" lengthAdjust="spacingAndGlyphs">BTFM_ACTIVE</text><path d="M519.5 369.5 h21.4" stroke="#4646c0" stroke-width="0.55"/><text x="511.0" y="368.1" font-size="3.538" fill="#666" text-anchor="start" textLength="3.1" lengthAdjust="spacingAndGlyphs">P9</text><text x="624.6" y="374.3" font-size="3.538" fill="#2c2c2c" text-anchor="start" textLength="21.5" lengthAdjust="spacingAndGlyphs">SDA2_0/GPIO_03</text><text x="622.2" y="372.4" font-size="3.538" fill="#555" text-anchor="end" textLength="4.6" lengthAdjust="spacingAndGlyphs">AD3</text><path d="M549.0 372.9 L623.4 372.9" stroke="#767676" stroke-width="0.8"/><rect x="543.0" y="371.2" width="6.0" height="3.4" rx="1" stroke="#8a8a8a" stroke-width="0.6" fill="#fff"/><text x="541.0" y="374.6" font-size="5" fill="#3c3cb8" text-anchor="end" textLength="17.6" lengthAdjust="spacingAndGlyphs">UART_STAT</text><path d="M523.5 375.2 h17.6" stroke="#4646c0" stroke-width="0.55"/><text x="511.0" y="373.9" font-size="3.538" fill="#666" text-anchor="start" textLength="3.1" lengthAdjust="spacingAndGlyphs">P9</text><text x="624.6" y="380.0" font-size="3.538" fill="#2c2c2c" text-anchor="start" textLength="23.1" lengthAdjust="spacingAndGlyphs">I2S_0_0/GPIO_22</text><text x="622.2" y="378.1" font-size="3.538" fill="#555" text-anchor="end" textLength="3.1" lengthAdjust="spacingAndGlyphs">E3</text><path d="M549.0 378.6 L623.4 378.6" stroke="#767676" stroke-width="0.8"/><rect x="543.0" y="376.9" width="6.0" height="3.4" rx="1" stroke="#8a8a8a" stroke-width="0.6" fill="#fff"/><text x="541.0" y="380.3" font-size="5" fill="#3c3cb8" text-anchor="end" textLength="19.5" lengthAdjust="spacingAndGlyphs">UART_STAT2</text><path d="M521.5 381.0 h19.5" stroke="#4646c0" stroke-width="0.55"/><text x="511.0" y="379.6" font-size="3.538" fill="#666" text-anchor="start" textLength="3.1" lengthAdjust="spacingAndGlyphs">P9</text><text x="624.6" y="391.5" font-size="3.538" fill="#2c2c2c" text-anchor="start" textLength="20.0" lengthAdjust="spacingAndGlyphs">PAMM4/GPIO_70</text><text x="622.2" y="389.6" font-size="3.538" fill="#555" text-anchor="end" textLength="4.6" lengthAdjust="spacingAndGlyphs">Y24</text><path d="M549.0 390.1 L623.4 390.1" stroke="#767676" stroke-width="0.8"/><rect x="543.0" y="388.4" width="6.0" height="3.4" rx="1" stroke="#8a8a8a" stroke-width="0.6" fill="#fff"/><text x="541.0" y="391.8" font-size="5" fill="#3c3cb8" text-anchor="end" textLength="21.4" lengthAdjust="spacingAndGlyphs">EDVC_PAINIT</text><path d="M519.5 392.5 h21.4" stroke="#4646c0" stroke-width="0.55"/><text x="511.0" y="391.1" font-size="3.538" fill="#666" text-anchor="start" textLength="3.1" lengthAdjust="spacingAndGlyphs">P9</text><text x="624.6" y="397.3" font-size="3.538" fill="#2c2c2c" text-anchor="start" textLength="49.2" lengthAdjust="spacingAndGlyphs">COMM7/GPIO_2_SS/SPI_2_SS/GPIO_43</text><text x="622.2" y="395.4" font-size="3.538" fill="#555" text-anchor="end" textLength="4.6" lengthAdjust="spacingAndGlyphs">AB5</text><path d="M549.0 395.9 L623.4 395.9" stroke="#767676" stroke-width="0.8"/><rect x="543.0" y="394.2" width="6.0" height="3.4" rx="1" stroke="#8a8a8a" stroke-width="0.6" fill="#fff"/><text x="541.0" y="397.6" font-size="5" fill="#3c3cb8" text-anchor="end" textLength="17.6" lengthAdjust="spacingAndGlyphs">EDVC_BUS8</text><path d="M523.5 398.2 h17.6" stroke="#4646c0" stroke-width="0.55"/><text x="511.0" y="396.9" font-size="3.538" fill="#666" text-anchor="start" textLength="3.1" lengthAdjust="spacingAndGlyphs">P9</text><text x="624.6" y="403.0" font-size="3.538" fill="#2c2c2c" text-anchor="start" textLength="33.8" lengthAdjust="spacingAndGlyphs">COMM1/GPIO_2_0/GPIO_24</text><text x="622.2" y="401.1" font-size="3.538" fill="#555" text-anchor="end" textLength="4.6" lengthAdjust="spacingAndGlyphs">AA5</text><path d="M549.0 401.6 L623.4 401.6" stroke="#767676" stroke-width="0.8"/><rect x="543.0" y="399.9" width="6.0" height="3.4" rx="1" stroke="#8a8a8a" stroke-width="0.6" fill="#fff"/><text x="541.0" y="403.3" font-size="5" fill="#3c3cb8" text-anchor="end" textLength="17.6" lengthAdjust="spacingAndGlyphs">EDVC_BUS9</text><path d="M523.5 404.0 h17.6" stroke="#4646c0" stroke-width="0.55"/><text x="511.0" y="402.6" font-size="3.538" fill="#666" text-anchor="start" textLength="3.1" lengthAdjust="spacingAndGlyphs">P9</text><text x="624.6" y="408.8" font-size="3.538" fill="#2c2c2c" text-anchor="start" textLength="53.8" lengthAdjust="spacingAndGlyphs">COMM30/GPIO_2_CSS/SPI_2_CSS/GPIO_42</text><text x="622.2" y="406.9" font-size="3.538" fill="#555" text-anchor="end" textLength="3.1" lengthAdjust="spacingAndGlyphs">L3</text><path d="M549.0 407.4 L623.4 407.4" stroke="#767676" stroke-width="0.8"/><rect x="543.0" y="405.7" width="6.0" height="3.4" rx="1" stroke="#8a8a8a" stroke-width="0.6" fill="#fff"/><text x="541.0" y="409.1" font-size="5" fill="#3c3cb8" text-anchor="end" textLength="17.6" lengthAdjust="spacingAndGlyphs">EDVC_PINS</text><path d="M523.5 409.7 h17.6" stroke="#4646c0" stroke-width="0.55"/><text x="511.0" y="408.4" font-size="3.538" fill="#666" text-anchor="start" textLength="3.1" lengthAdjust="spacingAndGlyphs">P9</text><text x="624.6" y="420.3" font-size="3.538" fill="#2c2c2c" text-anchor="start" textLength="52.3" lengthAdjust="spacingAndGlyphs">COMM31/SDC_SDA_0/SPI_2_0LK/GPIO_36</text><text x="622.2" y="418.4" font-size="3.538" fill="#555" text-anchor="end" textLength="3.1" lengthAdjust="spacingAndGlyphs">C5</text><path d="M549.0 418.9 L623.4 418.9" stroke="#767676" stroke-width="0.8"/><rect x="543.0" y="417.2" width="6.0" height="3.4" rx="1" stroke="#8a8a8a" stroke-width="0.6" fill="#fff"/><text x="541.0" y="420.6" font-size="5" fill="#3c3cb8" text-anchor="end" textLength="13.7" lengthAdjust="spacingAndGlyphs">EDR_CLK</text><path d="M527.4 421.2 h13.7" stroke="#4646c0" stroke-width="0.55"/><text x="511.0" y="419.9" font-size="3.538" fill="#666" text-anchor="start" textLength="3.1" lengthAdjust="spacingAndGlyphs">P9</text><text x="624.6" y="426.0" font-size="3.538" fill="#2c2c2c" text-anchor="start" textLength="53.8" lengthAdjust="spacingAndGlyphs">COMM25/GPIO_2_CLK/SPI_2_CLK/GPIO_41</text><text x="622.2" y="424.1" font-size="3.538" fill="#555" text-anchor="end" textLength="4.6" lengthAdjust="spacingAndGlyphs">E18</text><path d="M549.0 424.6 L623.4 424.6" stroke="#767676" stroke-width="0.8"/><rect x="543.0" y="422.9" width="6.0" height="3.4" rx="1" stroke="#8a8a8a" stroke-width="0.6" fill="#fff"/><text x="541.0" y="426.3" font-size="5" fill="#3c3cb8" text-anchor="end" textLength="15.6" lengthAdjust="spacingAndGlyphs">EDR_CTRL</text><path d="M525.4 427.0 h15.6" stroke="#4646c0" stroke-width="0.55"/><text x="511.0" y="425.6" font-size="3.538" fill="#666" text-anchor="start" textLength="3.1" lengthAdjust="spacingAndGlyphs">P9</text><text x="624.6" y="431.8" font-size="3.538" fill="#2c2c2c" text-anchor="start" textLength="23.1" lengthAdjust="spacingAndGlyphs">COMM27A/GPIO_47</text><text x="622.2" y="429.9" font-size="3.538" fill="#555" text-anchor="end" textLength="3.1" lengthAdjust="spacingAndGlyphs">W3</text><path d="M549.0 430.4 L623.4 430.4" stroke="#767676" stroke-width="0.8"/><rect x="543.0" y="428.7" width="6.0" height="3.4" rx="1" stroke="#8a8a8a" stroke-width="0.6" fill="#fff"/><text x="541.0" y="432.1" font-size="5" fill="#3c3cb8" text-anchor="end" textLength="17.6" lengthAdjust="spacingAndGlyphs">EDVC_BUS3</text><path d="M523.5 432.7 h17.6" stroke="#4646c0" stroke-width="0.55"/><text x="511.0" y="431.4" font-size="3.538" fill="#666" text-anchor="start" textLength="3.1" lengthAdjust="spacingAndGlyphs">P9</text><text x="624.6" y="437.5" font-size="3.538" fill="#2c2c2c" text-anchor="start" textLength="50.7" lengthAdjust="spacingAndGlyphs">COMM28/GPIO_1_SS/SPI_1_SS/GPIO_23</text><text x="622.2" y="435.6" font-size="3.538" fill="#555" text-anchor="end" textLength="4.6" lengthAdjust="spacingAndGlyphs">C23</text><path d="M549.0 436.1 L623.4 436.1" stroke="#767676" stroke-width="0.8"/><rect x="543.0" y="434.4" width="6.0" height="3.4" rx="1" stroke="#8a8a8a" stroke-width="0.6" fill="#fff"/><text x="541.0" y="437.8" font-size="5" fill="#3c3cb8" text-anchor="end" textLength="13.7" lengthAdjust="spacingAndGlyphs">EDR_BUS</text><path d="M527.4 438.5 h13.7" stroke="#4646c0" stroke-width="0.55"/><text x="511.0" y="437.1" font-size="3.538" fill="#666" text-anchor="start" textLength="3.1" lengthAdjust="spacingAndGlyphs">P9</text><text x="624.6" y="443.3" font-size="3.538" fill="#2c2c2c" text-anchor="start" textLength="50.7" lengthAdjust="spacingAndGlyphs">COMM21/GPIO_1_RX/SPI_1_RX/GPIO_38</text><text x="622.2" y="441.4" font-size="3.538" fill="#555" text-anchor="end" textLength="4.6" lengthAdjust="spacingAndGlyphs">Y23</text><path d="M549.0 441.9 L623.4 441.9" stroke="#767676" stroke-width="0.8"/><rect x="543.0" y="440.2" width="6.0" height="3.4" rx="1" stroke="#8a8a8a" stroke-width="0.6" fill="#fff"/><text x="541.0" y="443.6" font-size="5" fill="#3c3cb8" text-anchor="end" textLength="17.6" lengthAdjust="spacingAndGlyphs">EDVC_BUS4</text><path d="M523.5 444.2 h17.6" stroke="#4646c0" stroke-width="0.55"/><text x="511.0" y="442.9" font-size="3.538" fill="#666" text-anchor="start" textLength="3.1" lengthAdjust="spacingAndGlyphs">P9</text><text x="624.6" y="449.0" font-size="3.538" fill="#2c2c2c" text-anchor="start" textLength="52.3" lengthAdjust="spacingAndGlyphs">COMM26/SPI_1_CLK/SPI_1_CLK/GPIO_35</text><text x="622.2" y="447.1" font-size="3.538" fill="#555" text-anchor="end" textLength="4.6" lengthAdjust="spacingAndGlyphs">J18</text><path d="M549.0 447.6 L623.4 447.6" stroke="#767676" stroke-width="0.8"/><rect x="543.0" y="445.9" width="6.0" height="3.4" rx="1" stroke="#8a8a8a" stroke-width="0.6" fill="#fff"/><text x="541.0" y="449.3" font-size="5" fill="#3c3cb8" text-anchor="end" textLength="17.6" lengthAdjust="spacingAndGlyphs">EDVC_BUS5</text><path d="M523.5 450.0 h17.6" stroke="#4646c0" stroke-width="0.55"/><text x="511.0" y="448.6" font-size="3.538" fill="#666" text-anchor="start" textLength="3.1" lengthAdjust="spacingAndGlyphs">P9</text><text x="624.6" y="454.8" font-size="3.538" fill="#2c2c2c" text-anchor="start" textLength="56.9" lengthAdjust="spacingAndGlyphs">COMM24/GPIO_1_CSS/SPI_1_1/CSS/GPIO_36</text><text x="622.2" y="452.9" font-size="3.538" fill="#555" text-anchor="end" textLength="3.1" lengthAdjust="spacingAndGlyphs">U5</text><path d="M549.0 453.4 L623.4 453.4" stroke="#767676" stroke-width="0.8"/><rect x="543.0" y="451.7" width="6.0" height="3.4" rx="1" stroke="#8a8a8a" stroke-width="0.6" fill="#fff"/><text x="541.0" y="455.1" font-size="5" fill="#3c3cb8" text-anchor="end" textLength="17.6" lengthAdjust="spacingAndGlyphs">EDVC_BUS6</text><path d="M523.5 455.7 h17.6" stroke="#4646c0" stroke-width="0.55"/><text x="511.0" y="454.4" font-size="3.538" fill="#666" text-anchor="start" textLength="3.1" lengthAdjust="spacingAndGlyphs">P9</text><text x="624.6" y="460.5" font-size="3.538" fill="#2c2c2c" text-anchor="start" textLength="50.7" lengthAdjust="spacingAndGlyphs">COMM23/GPIO_1_CS/SPI_1_CS/GPIO_37</text><text x="622.2" y="458.6" font-size="3.538" fill="#555" text-anchor="end" textLength="4.6" lengthAdjust="spacingAndGlyphs">AD3</text><path d="M549.0 459.1 L623.4 459.1" stroke="#767676" stroke-width="0.8"/><rect x="543.0" y="457.4" width="6.0" height="3.4" rx="1" stroke="#8a8a8a" stroke-width="0.6" fill="#fff"/><text x="541.0" y="460.8" font-size="5" fill="#3c3cb8" text-anchor="end" textLength="17.6" lengthAdjust="spacingAndGlyphs">VDRC_BUS0</text><path d="M523.5 461.5 h17.6" stroke="#4646c0" stroke-width="0.55"/><text x="511.0" y="460.1" font-size="3.538" fill="#666" text-anchor="start" textLength="3.1" lengthAdjust="spacingAndGlyphs">P9</text><text x="624.6" y="466.3" font-size="3.538" fill="#2c2c2c" text-anchor="start" textLength="50.7" lengthAdjust="spacingAndGlyphs">COMM28/GPIO_1_RX/SPI_1_RX/GPIO_39</text><text x="622.2" y="464.4" font-size="3.538" fill="#555" text-anchor="end" textLength="4.6" lengthAdjust="spacingAndGlyphs">AB3</text><path d="M549.0 464.9 L623.4 464.9" stroke="#767676" stroke-width="0.8"/><rect x="543.0" y="463.2" width="6.0" height="3.4" rx="1" stroke="#8a8a8a" stroke-width="0.6" fill="#fff"/><text x="541.0" y="466.6" font-size="5" fill="#3c3cb8" text-anchor="end" textLength="17.6" lengthAdjust="spacingAndGlyphs">EDVC_BUS8</text><path d="M523.5 467.2 h17.6" stroke="#4646c0" stroke-width="0.55"/><text x="511.0" y="465.9" font-size="3.538" fill="#666" text-anchor="start" textLength="3.1" lengthAdjust="spacingAndGlyphs">P9</text><text x="624.6" y="472.0" font-size="3.538" fill="#2c2c2c" text-anchor="start" textLength="50.7" lengthAdjust="spacingAndGlyphs">COMM29/GPIO_2_CS/SPI_2_CS/GPIO_26</text><text x="622.2" y="470.1" font-size="3.538" fill="#555" text-anchor="end" textLength="3.1" lengthAdjust="spacingAndGlyphs">A5</text><path d="M549.0 470.6 L623.4 470.6" stroke="#767676" stroke-width="0.8"/><rect x="543.0" y="468.9" width="6.0" height="3.4" rx="1" stroke="#8a8a8a" stroke-width="0.6" fill="#fff"/><text x="541.0" y="472.3" font-size="5" fill="#3c3cb8" text-anchor="end" textLength="17.6" lengthAdjust="spacingAndGlyphs">EDVC_BUS7</text><path d="M523.5 473.0 h17.6" stroke="#4646c0" stroke-width="0.55"/><text x="511.0" y="471.6" font-size="3.538" fill="#666" text-anchor="start" textLength="3.1" lengthAdjust="spacingAndGlyphs">P9</text><text x="624.6" y="477.8" font-size="3.538" fill="#2c2c2c" text-anchor="start" textLength="40.0" lengthAdjust="spacingAndGlyphs">COMM28_PWMM/SCLK_0/GPIO_81</text><text x="622.2" y="475.9" font-size="3.538" fill="#555" text-anchor="end" textLength="4.6" lengthAdjust="spacingAndGlyphs">AJ5</text><text x="624.6" y="489.3" font-size="3.538" fill="#2c2c2c" text-anchor="start" textLength="20.0" lengthAdjust="spacingAndGlyphs">GPIO_74/COMM9</text><text x="622.2" y="487.4" font-size="3.538" fill="#555" text-anchor="end" textLength="3.1" lengthAdjust="spacingAndGlyphs">N3</text><text x="624.6" y="495.0" font-size="3.538" fill="#2c2c2c" text-anchor="start" textLength="20.0" lengthAdjust="spacingAndGlyphs">GPIO_71/COMM1</text><text x="622.2" y="493.1" font-size="3.538" fill="#555" text-anchor="end" textLength="3.1" lengthAdjust="spacingAndGlyphs">R4</text><text x="624.6" y="500.8" font-size="3.538" fill="#2c2c2c" text-anchor="start" textLength="20.0" lengthAdjust="spacingAndGlyphs">GPIO_75/COMM7</text><text x="622.2" y="498.9" font-size="3.538" fill="#555" text-anchor="end" textLength="3.1" lengthAdjust="spacingAndGlyphs">N6</text><text x="624.6" y="506.5" font-size="3.538" fill="#2c2c2c" text-anchor="start" textLength="18.4" lengthAdjust="spacingAndGlyphs">GPIO_8/COMM8</text><text x="622.2" y="504.6" font-size="3.538" fill="#555" text-anchor="end" textLength="4.6" lengthAdjust="spacingAndGlyphs">AB5</text><path d="M549.0 505.1 L623.4 505.1" stroke="#767676" stroke-width="0.8"/><rect x="543.0" y="503.4" width="6.0" height="3.4" rx="1" stroke="#8a8a8a" stroke-width="0.6" fill="#fff"/><text x="541.0" y="506.8" font-size="5" fill="#3c3cb8" text-anchor="end" textLength="21.4" lengthAdjust="spacingAndGlyphs">BOOT_CONFIG</text><path d="M519.5 507.5 h21.4" stroke="#4646c0" stroke-width="0.55"/><text x="511.0" y="506.1" font-size="3.538" fill="#666" text-anchor="start" textLength="3.1" lengthAdjust="spacingAndGlyphs">P9</text><text x="624.6" y="512.3" font-size="3.538" fill="#2c2c2c" text-anchor="start" textLength="20.0" lengthAdjust="spacingAndGlyphs">GPIO_2/COMM18</text><text x="622.2" y="510.4" font-size="3.538" fill="#555" text-anchor="end" textLength="4.6" lengthAdjust="spacingAndGlyphs">R23</text><text x="624.6" y="518.0" font-size="3.538" fill="#2c2c2c" text-anchor="start" textLength="18.4" lengthAdjust="spacingAndGlyphs">GPIO_5/COMM9</text><text x="622.2" y="516.1" font-size="3.538" fill="#555" text-anchor="end" textLength="3.1" lengthAdjust="spacingAndGlyphs">V3</text><path d="M549.0 516.6 L623.4 516.6" stroke="#767676" stroke-width="0.8"/><rect x="543.0" y="514.9" width="6.0" height="3.4" rx="1" stroke="#8a8a8a" stroke-width="0.6" fill="#fff"/><text x="541.0" y="518.4" font-size="5" fill="#3c3cb8" text-anchor="end" textLength="31.2" lengthAdjust="spacingAndGlyphs">BOOT_CONFIG_CHAR</text><path d="M509.8 519.0 h31.2" stroke="#4646c0" stroke-width="0.55"/><text x="511.0" y="517.6" font-size="3.538" fill="#666" text-anchor="start" textLength="3.1" lengthAdjust="spacingAndGlyphs">P9</text><text x="624.6" y="523.8" font-size="3.538" fill="#2c2c2c" text-anchor="start" textLength="32.3" lengthAdjust="spacingAndGlyphs">GPIO_3/SPI_0_CS/PWMM4</text><text x="622.2" y="521.9" font-size="3.538" fill="#555" text-anchor="end" textLength="4.6" lengthAdjust="spacingAndGlyphs">C23</text><text x="624.6" y="529.5" font-size="3.538" fill="#2c2c2c" text-anchor="start" textLength="26.1" lengthAdjust="spacingAndGlyphs">GPIO_82/SPI_CS_20</text><text x="622.2" y="527.6" font-size="3.538" fill="#555" text-anchor="end" textLength="3.1" lengthAdjust="spacingAndGlyphs">R3</text><rect x="563.5" y="534.6" width="24.5" height="32.0" fill="#ffffcc" opacity="0.28"/><rect x="563.5" y="580.6" width="24.5" height="37.8" fill="#ffffcc" opacity="0.28"/><text x="624.6" y="541.0" font-size="3.538" fill="#2c2c2c" text-anchor="start" textLength="23.1" lengthAdjust="spacingAndGlyphs">KEYSKE0/GPIO_41</text><text x="622.2" y="539.1" font-size="3.538" fill="#555" text-anchor="end" textLength="4.6" lengthAdjust="spacingAndGlyphs">V23</text><text x="624.6" y="546.8" font-size="3.538" fill="#2c2c2c" text-anchor="start" textLength="23.1" lengthAdjust="spacingAndGlyphs">KEYSKE1/GPIO_42</text><text x="622.2" y="544.9" font-size="3.538" fill="#555" text-anchor="end" textLength="4.6" lengthAdjust="spacingAndGlyphs">Y24</text><text x="624.6" y="552.5" font-size="3.538" fill="#2c2c2c" text-anchor="start" textLength="23.1" lengthAdjust="spacingAndGlyphs">KEYSKE2/GPIO_43</text><text x="622.2" y="550.6" font-size="3.538" fill="#555" text-anchor="end" textLength="3.1" lengthAdjust="spacingAndGlyphs">W5</text><text x="624.6" y="558.3" font-size="3.538" fill="#2c2c2c" text-anchor="start" textLength="23.1" lengthAdjust="spacingAndGlyphs">KEYSKE3/GPIO_76</text><text x="622.2" y="556.4" font-size="3.538" fill="#555" text-anchor="end" textLength="4.6" lengthAdjust="spacingAndGlyphs">T46</text><text x="624.6" y="564.0" font-size="3.538" fill="#2c2c2c" text-anchor="start" textLength="33.8" lengthAdjust="spacingAndGlyphs">KEYSKE4/GPIO_39/SDA1_0</text><text x="622.2" y="562.1" font-size="3.538" fill="#555" text-anchor="end" textLength="4.6" lengthAdjust="spacingAndGlyphs">T18</text><text x="624.6" y="569.8" font-size="3.538" fill="#2c2c2c" text-anchor="start" textLength="33.8" lengthAdjust="spacingAndGlyphs">KEYSKE5/GPIO_19/SCL1_0</text><text x="622.2" y="567.9" font-size="3.538" fill="#555" text-anchor="end" textLength="4.6" lengthAdjust="spacingAndGlyphs">W25</text><text x="624.6" y="575.5" font-size="3.538" fill="#2c2c2c" text-anchor="start" textLength="43.0" lengthAdjust="spacingAndGlyphs">KEYSKE6/SDA2_0/GPIO_09/COMM0</text><text x="622.2" y="573.6" font-size="3.538" fill="#555" text-anchor="end" textLength="4.6" lengthAdjust="spacingAndGlyphs">R46</text><text x="624.6" y="581.3" font-size="3.538" fill="#2c2c2c" text-anchor="start" textLength="43.0" lengthAdjust="spacingAndGlyphs">KEYSKE7/SCL2_0/GPIO_29/COMM0</text><text x="622.2" y="579.4" font-size="3.538" fill="#555" text-anchor="end" textLength="4.6" lengthAdjust="spacingAndGlyphs">T47</text><text x="624.6" y="587.0" font-size="3.538" fill="#2c2c2c" text-anchor="start" textLength="24.6" lengthAdjust="spacingAndGlyphs">KEYOUT20/GPIO_86</text><text x="622.2" y="585.1" font-size="3.538" fill="#555" text-anchor="end" textLength="4.6" lengthAdjust="spacingAndGlyphs">T18</text><text x="624.6" y="592.8" font-size="3.538" fill="#2c2c2c" text-anchor="start" textLength="24.6" lengthAdjust="spacingAndGlyphs">KEYOUT19/GPIO_87</text><text x="622.2" y="590.9" font-size="3.538" fill="#555" text-anchor="end" textLength="4.6" lengthAdjust="spacingAndGlyphs">AD6</text><text x="624.6" y="598.5" font-size="3.538" fill="#2c2c2c" text-anchor="start" textLength="24.6" lengthAdjust="spacingAndGlyphs">KEYOUT21/GPIO_88</text><text x="622.2" y="596.6" font-size="3.538" fill="#555" text-anchor="end" textLength="4.6" lengthAdjust="spacingAndGlyphs">T47</text><text x="624.6" y="604.3" font-size="3.538" fill="#2c2c2c" text-anchor="start" textLength="41.5" lengthAdjust="spacingAndGlyphs">KEYOUT16/GPIO_89/WFI_ACTIVE</text><text x="622.2" y="602.4" font-size="3.538" fill="#555" text-anchor="end" textLength="4.6" lengthAdjust="spacingAndGlyphs">W47</text><text x="624.6" y="610.0" font-size="3.538" fill="#2c2c2c" text-anchor="start" textLength="40.0" lengthAdjust="spacingAndGlyphs">KEYOUT18/GPIOSEVENT_ACTIVE</text><text x="622.2" y="608.1" font-size="3.538" fill="#555" text-anchor="end" textLength="4.6" lengthAdjust="spacingAndGlyphs">Y47</text><text x="624.6" y="615.8" font-size="3.538" fill="#2c2c2c" text-anchor="start" textLength="33.8" lengthAdjust="spacingAndGlyphs">KEYOUT24/GPIO_26/COMM4</text><text x="622.2" y="613.9" font-size="3.538" fill="#555" text-anchor="end" textLength="4.6" lengthAdjust="spacingAndGlyphs">U47</text><text x="624.6" y="621.5" font-size="3.538" fill="#2c2c2c" text-anchor="start" textLength="33.8" lengthAdjust="spacingAndGlyphs">KEYOUT93/GPIO_27/COMM0</text><text x="622.2" y="619.6" font-size="3.538" fill="#555" text-anchor="end" textLength="4.6" lengthAdjust="spacingAndGlyphs">V46</text><path d="M549.0 539.6 L623.4 539.6" stroke="#767676" stroke-width="0.8"/><rect x="543.0" y="537.9" width="6.0" height="3.4" rx="1" stroke="#8a8a8a" stroke-width="0.6" fill="#fff"/><text x="541.0" y="541.4" font-size="5" fill="#3c3cb8" text-anchor="end" textLength="9.8" lengthAdjust="spacingAndGlyphs">BOOT1</text><path d="M531.2 542.0 h9.8" stroke="#4646c0" stroke-width="0.55"/><text x="511.0" y="540.6" font-size="3.538" fill="#666" text-anchor="start" textLength="3.1" lengthAdjust="spacingAndGlyphs">P9</text><rect x="575.2" y="537.9" width="8" height="3.4" fill="#ffffea"/><path d="M575.5 539.6 L576.1 540.9 L577.4 538.4 L578.6 540.9 L579.8 538.4 L581.0 540.9 L582.3 538.4 L582.9 539.6" stroke="#767676" stroke-width="0.7" fill="none"/><text x="566.0" y="539.0" font-size="3.172" fill="#666" text-anchor="start" textLength="6.9" lengthAdjust="spacingAndGlyphs">R0603</text><text x="611.0" y="539.2" font-size="5" fill="#3c3cb8" text-anchor="end" textLength="9.2" lengthAdjust="spacingAndGlyphs">BOOT0</text><path d="M601.8 539.9 h9.2" stroke="#4646c0" stroke-width="0.55"/><path d="M549.0 545.4 L623.4 545.4" stroke="#767676" stroke-width="0.8"/><rect x="543.0" y="543.7" width="6.0" height="3.4" rx="1" stroke="#8a8a8a" stroke-width="0.6" fill="#fff"/><text x="541.0" y="547.1" font-size="5" fill="#3c3cb8" text-anchor="end" textLength="9.8" lengthAdjust="spacingAndGlyphs">BOOT2</text><path d="M531.2 547.8 h9.8" stroke="#4646c0" stroke-width="0.55"/><text x="511.0" y="546.4" font-size="3.538" fill="#666" text-anchor="start" textLength="3.1" lengthAdjust="spacingAndGlyphs">P9</text><rect x="575.2" y="543.7" width="8" height="3.4" fill="#ffffea"/><path d="M575.5 545.4 L576.1 546.7 L577.4 544.1 L578.6 546.7 L579.8 544.1 L581.0 546.7 L582.3 544.1 L582.9 545.4" stroke="#767676" stroke-width="0.7" fill="none"/><text x="566.0" y="544.8" font-size="3.172" fill="#666" text-anchor="start" textLength="6.9" lengthAdjust="spacingAndGlyphs">R0603</text><text x="611.0" y="545.0" font-size="5" fill="#3c3cb8" text-anchor="end" textLength="9.2" lengthAdjust="spacingAndGlyphs">BOOT1</text><path d="M601.8 545.6 h9.2" stroke="#4646c0" stroke-width="0.55"/><path d="M549.0 551.1 L623.4 551.1" stroke="#767676" stroke-width="0.8"/><rect x="543.0" y="549.4" width="6.0" height="3.4" rx="1" stroke="#8a8a8a" stroke-width="0.6" fill="#fff"/><text x="541.0" y="552.9" font-size="5" fill="#3c3cb8" text-anchor="end" textLength="9.8" lengthAdjust="spacingAndGlyphs">BOOT3</text><path d="M531.2 553.5 h9.8" stroke="#4646c0" stroke-width="0.55"/><text x="511.0" y="552.1" font-size="3.538" fill="#666" text-anchor="start" textLength="3.1" lengthAdjust="spacingAndGlyphs">P9</text><rect x="575.2" y="549.4" width="8" height="3.4" fill="#ffffea"/><path d="M575.5 551.1 L576.1 552.4 L577.4 549.9 L578.6 552.4 L579.8 549.9 L581.0 552.4 L582.3 549.9 L582.9 551.1" stroke="#767676" stroke-width="0.7" fill="none"/><text x="566.0" y="550.5" font-size="3.172" fill="#666" text-anchor="start" textLength="6.9" lengthAdjust="spacingAndGlyphs">R0603</text><text x="611.0" y="550.8" font-size="5" fill="#3c3cb8" text-anchor="end" textLength="9.2" lengthAdjust="spacingAndGlyphs">BOOT2</text><path d="M601.8 551.4 h9.2" stroke="#4646c0" stroke-width="0.55"/><path d="M549.0 556.9 L623.4 556.9" stroke="#767676" stroke-width="0.8"/><rect x="543.0" y="555.2" width="6.0" height="3.4" rx="1" stroke="#8a8a8a" stroke-width="0.6" fill="#fff"/><text x="541.0" y="558.6" font-size="5" fill="#3c3cb8" text-anchor="end" textLength="9.8" lengthAdjust="spacingAndGlyphs">BOOT4</text><path d="M531.2 559.2 h9.8" stroke="#4646c0" stroke-width="0.55"/><text x="511.0" y="557.9" font-size="3.538" fill="#666" text-anchor="start" textLength="3.1" lengthAdjust="spacingAndGlyphs">P9</text><rect x="575.2" y="555.2" width="8" height="3.4" fill="#ffffea"/><path d="M575.5 556.9 L576.1 558.2 L577.4 555.6 L578.6 558.2 L579.8 555.6 L581.0 558.2 L582.3 555.6 L582.9 556.9" stroke="#767676" stroke-width="0.7" fill="none"/><text x="566.0" y="556.3" font-size="3.172" fill="#666" text-anchor="start" textLength="6.9" lengthAdjust="spacingAndGlyphs">R0603</text><text x="611.0" y="556.5" font-size="5" fill="#3c3cb8" text-anchor="end" textLength="9.2" lengthAdjust="spacingAndGlyphs">BOOT3</text><path d="M601.8 557.1 h9.2" stroke="#4646c0" stroke-width="0.55"/><path d="M549.0 562.6 L623.4 562.6" stroke="#767676" stroke-width="0.8"/><rect x="543.0" y="560.9" width="6.0" height="3.4" rx="1" stroke="#8a8a8a" stroke-width="0.6" fill="#fff"/><text x="541.0" y="564.4" font-size="5" fill="#3c3cb8" text-anchor="end" textLength="9.8" lengthAdjust="spacingAndGlyphs">BOOT5</text><path d="M531.2 565.0 h9.8" stroke="#4646c0" stroke-width="0.55"/><text x="511.0" y="563.6" font-size="3.538" fill="#666" text-anchor="start" textLength="3.1" lengthAdjust="spacingAndGlyphs">P9</text><rect x="575.2" y="560.9" width="8" height="3.4" fill="#ffffea"/><path d="M575.5 562.6 L576.1 563.9 L577.4 561.4 L578.6 563.9 L579.8 561.4 L581.0 563.9 L582.3 561.4 L582.9 562.6" stroke="#767676" stroke-width="0.7" fill="none"/><text x="566.0" y="562.0" font-size="3.172" fill="#666" text-anchor="start" textLength="6.9" lengthAdjust="spacingAndGlyphs">R0603</text><text x="611.0" y="562.2" font-size="5" fill="#3c3cb8" text-anchor="end" textLength="9.2" lengthAdjust="spacingAndGlyphs">BOOT4</text><path d="M601.8 562.9 h9.2" stroke="#4646c0" stroke-width="0.55"/><path d="M549.0 585.6 L623.4 585.6" stroke="#767676" stroke-width="0.8"/><rect x="543.0" y="583.9" width="6.0" height="3.4" rx="1" stroke="#8a8a8a" stroke-width="0.6" fill="#fff"/><text x="541.0" y="587.4" font-size="5" fill="#3c3cb8" text-anchor="end" textLength="11.7" lengthAdjust="spacingAndGlyphs">BMAMP0</text><path d="M529.3 588.0 h11.7" stroke="#4646c0" stroke-width="0.55"/><text x="511.0" y="586.6" font-size="3.538" fill="#666" text-anchor="start" textLength="3.1" lengthAdjust="spacingAndGlyphs">P9</text><rect x="575.2" y="583.9" width="8" height="3.4" fill="#ffffea"/><path d="M575.5 585.6 L576.1 586.9 L577.4 584.4 L578.6 586.9 L579.8 584.4 L581.0 586.9 L582.3 584.4 L582.9 585.6" stroke="#767676" stroke-width="0.7" fill="none"/><text x="566.0" y="585.0" font-size="3.172" fill="#666" text-anchor="start" textLength="6.9" lengthAdjust="spacingAndGlyphs">R0603</text><text x="611.0" y="585.2" font-size="5" fill="#3c3cb8" text-anchor="end" textLength="12.9" lengthAdjust="spacingAndGlyphs">SBOOT00</text><path d="M598.1 585.9 h12.9" stroke="#4646c0" stroke-width="0.55"/><path d="M549.0 591.4 L623.4 591.4" stroke="#767676" stroke-width="0.8"/><rect x="543.0" y="589.7" width="6.0" height="3.4" rx="1" stroke="#8a8a8a" stroke-width="0.6" fill="#fff"/><text x="541.0" y="593.1" font-size="5" fill="#3c3cb8" text-anchor="end" textLength="11.7" lengthAdjust="spacingAndGlyphs">BMAMP1</text><path d="M529.3 593.8 h11.7" stroke="#4646c0" stroke-width="0.55"/><text x="511.0" y="592.4" font-size="3.538" fill="#666" text-anchor="start" textLength="3.1" lengthAdjust="spacingAndGlyphs">P9</text><rect x="575.2" y="589.7" width="8" height="3.4" fill="#ffffea"/><path d="M575.5 591.4 L576.1 592.7 L577.4 590.1 L578.6 592.7 L579.8 590.1 L581.0 592.7 L582.3 590.1 L582.9 591.4" stroke="#767676" stroke-width="0.7" fill="none"/><text x="566.0" y="590.8" font-size="3.172" fill="#666" text-anchor="start" textLength="6.9" lengthAdjust="spacingAndGlyphs">R0603</text><text x="611.0" y="591.0" font-size="5" fill="#3c3cb8" text-anchor="end" textLength="12.9" lengthAdjust="spacingAndGlyphs">SBOOT01</text><path d="M598.1 591.6 h12.9" stroke="#4646c0" stroke-width="0.55"/><path d="M549.0 597.1 L623.4 597.1" stroke="#767676" stroke-width="0.8"/><rect x="543.0" y="595.4" width="6.0" height="3.4" rx="1" stroke="#8a8a8a" stroke-width="0.6" fill="#fff"/><text x="541.0" y="598.9" font-size="5" fill="#3c3cb8" text-anchor="end" textLength="11.7" lengthAdjust="spacingAndGlyphs">BMAMP2</text><path d="M529.3 599.5 h11.7" stroke="#4646c0" stroke-width="0.55"/><text x="511.0" y="598.1" font-size="3.538" fill="#666" text-anchor="start" textLength="3.1" lengthAdjust="spacingAndGlyphs">P9</text><rect x="575.2" y="595.4" width="8" height="3.4" fill="#ffffea"/><path d="M575.5 597.1 L576.1 598.4 L577.4 595.9 L578.6 598.4 L579.8 595.9 L581.0 598.4 L582.3 595.9 L582.9 597.1" stroke="#767676" stroke-width="0.7" fill="none"/><text x="566.0" y="596.5" font-size="3.172" fill="#666" text-anchor="start" textLength="6.9" lengthAdjust="spacingAndGlyphs">R0603</text><text x="611.0" y="596.8" font-size="5" fill="#3c3cb8" text-anchor="end" textLength="12.9" lengthAdjust="spacingAndGlyphs">SBOOT02</text><path d="M598.1 597.4 h12.9" stroke="#4646c0" stroke-width="0.55"/><path d="M549.0 602.9 L623.4 602.9" stroke="#767676" stroke-width="0.8"/><rect x="543.0" y="601.2" width="6.0" height="3.4" rx="1" stroke="#8a8a8a" stroke-width="0.6" fill="#fff"/><text x="541.0" y="604.6" font-size="5" fill="#3c3cb8" text-anchor="end" textLength="11.7" lengthAdjust="spacingAndGlyphs">BMAMP3</text><path d="M529.3 605.2 h11.7" stroke="#4646c0" stroke-width="0.55"/><text x="511.0" y="603.9" font-size="3.538" fill="#666" text-anchor="start" textLength="3.1" lengthAdjust="spacingAndGlyphs">P9</text><rect x="575.2" y="601.2" width="8" height="3.4" fill="#ffffea"/><path d="M575.5 602.9 L576.1 604.2 L577.4 601.6 L578.6 604.2 L579.8 601.6 L581.0 604.2 L582.3 601.6 L582.9 602.9" stroke="#767676" stroke-width="0.7" fill="none"/><text x="566.0" y="602.3" font-size="3.172" fill="#666" text-anchor="start" textLength="6.9" lengthAdjust="spacingAndGlyphs">R0603</text><text x="611.0" y="602.5" font-size="5" fill="#3c3cb8" text-anchor="end" textLength="12.9" lengthAdjust="spacingAndGlyphs">SBOOT03</text><path d="M598.1 603.1 h12.9" stroke="#4646c0" stroke-width="0.55"/><path d="M549.0 608.6 L623.4 608.6" stroke="#767676" stroke-width="0.8"/><rect x="543.0" y="606.9" width="6.0" height="3.4" rx="1" stroke="#8a8a8a" stroke-width="0.6" fill="#fff"/><text x="541.0" y="610.4" font-size="5" fill="#3c3cb8" text-anchor="end" textLength="11.7" lengthAdjust="spacingAndGlyphs">BMAMP4</text><path d="M529.3 611.0 h11.7" stroke="#4646c0" stroke-width="0.55"/><text x="511.0" y="609.6" font-size="3.538" fill="#666" text-anchor="start" textLength="3.1" lengthAdjust="spacingAndGlyphs">P9</text><rect x="575.2" y="606.9" width="8" height="3.4" fill="#ffffea"/><path d="M575.5 608.6 L576.1 609.9 L577.4 607.4 L578.6 609.9 L579.8 607.4 L581.0 609.9 L582.3 607.4 L582.9 608.6" stroke="#767676" stroke-width="0.7" fill="none"/><text x="566.0" y="608.0" font-size="3.172" fill="#666" text-anchor="start" textLength="6.9" lengthAdjust="spacingAndGlyphs">R0603</text><text x="611.0" y="608.2" font-size="5" fill="#3c3cb8" text-anchor="end" textLength="12.9" lengthAdjust="spacingAndGlyphs">SBOOT04</text><path d="M598.1 608.9 h12.9" stroke="#4646c0" stroke-width="0.55"/><path d="M549.0 614.4 L623.4 614.4" stroke="#767676" stroke-width="0.8"/><rect x="543.0" y="612.7" width="6.0" height="3.4" rx="1" stroke="#8a8a8a" stroke-width="0.6" fill="#fff"/><text x="541.0" y="616.1" font-size="5" fill="#3c3cb8" text-anchor="end" textLength="11.7" lengthAdjust="spacingAndGlyphs">BMAMP5</text><path d="M529.3 616.8 h11.7" stroke="#4646c0" stroke-width="0.55"/><text x="511.0" y="615.4" font-size="3.538" fill="#666" text-anchor="start" textLength="3.1" lengthAdjust="spacingAndGlyphs">P9</text><rect x="575.2" y="612.7" width="8" height="3.4" fill="#ffffea"/><path d="M575.5 614.4 L576.1 615.7 L577.4 613.1 L578.6 615.7 L579.8 613.1 L581.0 615.7 L582.3 613.1 L582.9 614.4" stroke="#767676" stroke-width="0.7" fill="none"/><text x="566.0" y="613.8" font-size="3.172" fill="#666" text-anchor="start" textLength="6.9" lengthAdjust="spacingAndGlyphs">R0603</text><text x="611.0" y="614.0" font-size="5" fill="#3c3cb8" text-anchor="end" textLength="12.9" lengthAdjust="spacingAndGlyphs">SBOOT05</text><path d="M598.1 614.6 h12.9" stroke="#4646c0" stroke-width="0.55"/><text x="794.2" y="250.2" font-size="3.538" fill="#2c2c2c" text-anchor="end" textLength="23.1" lengthAdjust="spacingAndGlyphs">RF_GRFC/GPIO_41</text><text x="796.6" y="248.5" font-size="3.538" fill="#555" text-anchor="start" textLength="3.1" lengthAdjust="spacingAndGlyphs">V5</text><path d="M795.4 249.0 L870.5 249.0" stroke="#767676" stroke-width="0.8"/><rect x="870.5" y="247.3" width="6.0" height="3.4" rx="1" stroke="#8a8a8a" stroke-width="0.6" fill="#fff"/><text x="878.0" y="250.7" font-size="5" fill="#3c3cb8" text-anchor="start" textLength="31.2" lengthAdjust="spacingAndGlyphs">RFFE1_CLK_PA_CLK</text><path d="M878.0 251.3 h31.2" stroke="#4646c0" stroke-width="0.55"/><text x="903.0" y="247.0" font-size="3.538" fill="#666" text-anchor="start" textLength="3.1" lengthAdjust="spacingAndGlyphs">P9</text><text x="794.2" y="255.8" font-size="3.538" fill="#2c2c2c" text-anchor="end" textLength="23.1" lengthAdjust="spacingAndGlyphs">RF_GRFC/GPIO_44</text><text x="796.6" y="254.1" font-size="3.538" fill="#555" text-anchor="start" textLength="3.1" lengthAdjust="spacingAndGlyphs">U5</text><path d="M795.4 254.6 L870.5 254.6" stroke="#767676" stroke-width="0.8"/><rect x="870.5" y="252.9" width="6.0" height="3.4" rx="1" stroke="#8a8a8a" stroke-width="0.6" fill="#fff"/><text x="878.0" y="256.3" font-size="5" fill="#3c3cb8" text-anchor="start" textLength="13.7" lengthAdjust="spacingAndGlyphs">RF_GRFC</text><path d="M878.0 256.9 h13.7" stroke="#4646c0" stroke-width="0.55"/><text x="903.0" y="255.6" font-size="3.538" fill="#666" text-anchor="start" textLength="3.1" lengthAdjust="spacingAndGlyphs">P9</text><text x="794.2" y="261.4" font-size="3.538" fill="#2c2c2c" text-anchor="end" textLength="24.6" lengthAdjust="spacingAndGlyphs">RF_GRFC2/GPIO_43</text><text x="796.6" y="259.7" font-size="3.538" fill="#555" text-anchor="start" textLength="4.6" lengthAdjust="spacingAndGlyphs">A15</text><path d="M795.4 260.2 L870.5 260.2" stroke="#767676" stroke-width="0.8"/><rect x="870.5" y="258.5" width="6.0" height="3.4" rx="1" stroke="#8a8a8a" stroke-width="0.6" fill="#fff"/><text x="878.0" y="261.9" font-size="5" fill="#3c3cb8" text-anchor="start" textLength="15.6" lengthAdjust="spacingAndGlyphs">RF_GRFC1</text><path d="M878.0 262.5 h15.6" stroke="#4646c0" stroke-width="0.55"/><text x="903.0" y="261.2" font-size="3.538" fill="#666" text-anchor="start" textLength="3.1" lengthAdjust="spacingAndGlyphs">P9</text><text x="794.2" y="267.2" font-size="3.538" fill="#2c2c2c" text-anchor="end" textLength="24.6" lengthAdjust="spacingAndGlyphs">RF_GRFC3/GPIO_46</text><text x="796.6" y="265.5" font-size="3.538" fill="#555" text-anchor="start" textLength="4.6" lengthAdjust="spacingAndGlyphs">L15</text><text x="794.2" y="272.8" font-size="3.538" fill="#2c2c2c" text-anchor="end" textLength="23.1" lengthAdjust="spacingAndGlyphs">RF_RFFE/GPIO_47</text><text x="796.6" y="271.1" font-size="3.538" fill="#555" text-anchor="start" textLength="3.1" lengthAdjust="spacingAndGlyphs">T6</text><text x="794.2" y="278.6" font-size="3.538" fill="#2c2c2c" text-anchor="end" textLength="23.1" lengthAdjust="spacingAndGlyphs">RF_PARB/GPIO_68</text><text x="796.6" y="276.9" font-size="3.538" fill="#555" text-anchor="start" textLength="3.1" lengthAdjust="spacingAndGlyphs">T5</text><path d="M795.4 277.4 L870.5 277.4" stroke="#767676" stroke-width="0.8"/><rect x="870.5" y="275.7" width="6.0" height="3.4" rx="1" stroke="#8a8a8a" stroke-width="0.6" fill="#fff"/><text x="878.0" y="279.1" font-size="5" fill="#3c3cb8" text-anchor="start" textLength="9.8" lengthAdjust="spacingAndGlyphs">TX_LM</text><path d="M878.0 279.7 h9.8" stroke="#4646c0" stroke-width="0.55"/><text x="903.0" y="278.4" font-size="3.538" fill="#666" text-anchor="start" textLength="3.1" lengthAdjust="spacingAndGlyphs">P9</text><text x="794.2" y="290.2" font-size="3.538" fill="#2c2c2c" text-anchor="end" textLength="43.0" lengthAdjust="spacingAndGlyphs">WTR0/COEXUSIC/GPIO_0/BT_WFM0</text><text x="796.6" y="288.5" font-size="3.538" fill="#555" text-anchor="start" textLength="4.6" lengthAdjust="spacingAndGlyphs">L11</text><text x="794.2" y="295.8" font-size="3.538" fill="#2c2c2c" text-anchor="end" textLength="46.1" lengthAdjust="spacingAndGlyphs">WTR1/COMM2/SDC/GPIO_29/BT_WFM1</text><text x="796.6" y="294.1" font-size="3.538" fill="#555" text-anchor="start" textLength="4.6" lengthAdjust="spacingAndGlyphs">V11</text><path d="M795.4 294.6 L870.5 294.6" stroke="#767676" stroke-width="0.8"/><rect x="870.5" y="292.9" width="6.0" height="3.4" rx="1" stroke="#8a8a8a" stroke-width="0.6" fill="#fff"/><text x="878.0" y="296.3" font-size="5" fill="#3c3cb8" text-anchor="start" textLength="7.8" lengthAdjust="spacingAndGlyphs">WBBS</text><path d="M878.0 296.9 h7.8" stroke="#4646c0" stroke-width="0.55"/><text x="903.0" y="295.6" font-size="3.538" fill="#666" text-anchor="start" textLength="3.1" lengthAdjust="spacingAndGlyphs">P9</text><text x="794.2" y="301.6" font-size="3.538" fill="#2c2c2c" text-anchor="end" textLength="58.4" lengthAdjust="spacingAndGlyphs">WTR0/CLK/SDA1/COEXB/SDC/GPIO_6/BT_WFM2</text><text x="796.6" y="299.9" font-size="3.538" fill="#555" text-anchor="start" textLength="4.6" lengthAdjust="spacingAndGlyphs">R17</text><text x="794.2" y="307.3" font-size="3.538" fill="#2c2c2c" text-anchor="end" textLength="55.3" lengthAdjust="spacingAndGlyphs">WTR0/SDA2_1/GPIO_21/BT_WFM3/BTSS1TX0</text><text x="796.6" y="305.6" font-size="3.538" fill="#555" text-anchor="start" textLength="4.6" lengthAdjust="spacingAndGlyphs">AB3</text><text x="794.2" y="313.2" font-size="3.538" fill="#2c2c2c" text-anchor="end" textLength="59.9" lengthAdjust="spacingAndGlyphs">WTR0TR/SCL2_1/GPIO_23/BTWTRSTR/BTSS1TX0</text><text x="796.6" y="311.5" font-size="3.538" fill="#555" text-anchor="start" textLength="3.1" lengthAdjust="spacingAndGlyphs">T9</text><text x="794.2" y="324.6" font-size="3.538" fill="#2c2c2c" text-anchor="end" textLength="58.4" lengthAdjust="spacingAndGlyphs">UIM0RE/GPIO_58/BT_SD_0_DAK/BT_SD_0_DAK</text><text x="796.6" y="322.9" font-size="3.538" fill="#555" text-anchor="start" textLength="4.6" lengthAdjust="spacingAndGlyphs">AB5</text><text x="794.2" y="330.3" font-size="3.538" fill="#2c2c2c" text-anchor="end" textLength="58.4" lengthAdjust="spacingAndGlyphs">UCTRES/GPIO_59/BT_SD_0_TX0/BT_SD_0_TX0</text><text x="796.6" y="328.6" font-size="3.538" fill="#555" text-anchor="start" textLength="4.6" lengthAdjust="spacingAndGlyphs">AB5</text><text x="794.2" y="336.1" font-size="3.538" fill="#2c2c2c" text-anchor="end" textLength="32.3" lengthAdjust="spacingAndGlyphs">SDCTS/SD_0_RX0/GPIO_4</text><text x="796.6" y="334.4" font-size="3.538" fill="#555" text-anchor="start" textLength="4.6" lengthAdjust="spacingAndGlyphs">U45</text><path d="M795.4 334.9 L870.5 334.9" stroke="#767676" stroke-width="0.8"/><rect x="870.5" y="333.2" width="6.0" height="3.4" rx="1" stroke="#8a8a8a" stroke-width="0.6" fill="#fff"/><text x="878.0" y="336.6" font-size="5" fill="#3c3cb8" text-anchor="start" textLength="21.4" lengthAdjust="spacingAndGlyphs">BTFM_CONFIG</text><path d="M878.0 337.2 h21.4" stroke="#4646c0" stroke-width="0.55"/><text x="903.0" y="335.9" font-size="3.538" fill="#666" text-anchor="start" textLength="3.1" lengthAdjust="spacingAndGlyphs">P9</text><text x="794.2" y="341.8" font-size="3.538" fill="#2c2c2c" text-anchor="end" textLength="32.3" lengthAdjust="spacingAndGlyphs">SDRTS/SD_0_TX0/GPIO_5</text><text x="796.6" y="340.1" font-size="3.538" fill="#555" text-anchor="start" textLength="4.6" lengthAdjust="spacingAndGlyphs">R45</text><path d="M795.4 340.6 L870.5 340.6" stroke="#767676" stroke-width="0.8"/><rect x="870.5" y="338.9" width="6.0" height="3.4" rx="1" stroke="#8a8a8a" stroke-width="0.6" fill="#fff"/><text x="878.0" y="342.3" font-size="5" fill="#3c3cb8" text-anchor="start" textLength="9.8" lengthAdjust="spacingAndGlyphs">BTSSP</text><path d="M878.0 342.9 h9.8" stroke="#4646c0" stroke-width="0.55"/><text x="903.0" y="341.6" font-size="3.538" fill="#666" text-anchor="start" textLength="3.1" lengthAdjust="spacingAndGlyphs">P9</text><text x="794.2" y="353.1" font-size="3.538" fill="#2c2c2c" text-anchor="end" textLength="32.3" lengthAdjust="spacingAndGlyphs">WSD/GPIO_0/WFI_ACTIVE</text><text x="796.6" y="351.4" font-size="3.538" fill="#555" text-anchor="start" textLength="4.6" lengthAdjust="spacingAndGlyphs">L17</text><text x="794.2" y="358.8" font-size="3.538" fill="#2c2c2c" text-anchor="end" textLength="32.3" lengthAdjust="spacingAndGlyphs">WSD1/GPIO_7/BT_ACTIVE</text><text x="796.6" y="357.1" font-size="3.538" fill="#555" text-anchor="start" textLength="4.6" lengthAdjust="spacingAndGlyphs">L17</text><text x="794.2" y="364.6" font-size="3.538" fill="#2c2c2c" text-anchor="end" textLength="33.8" lengthAdjust="spacingAndGlyphs">SDCLK/GPIO_6/BT_STATUS</text><text x="796.6" y="362.9" font-size="3.538" fill="#555" text-anchor="start" textLength="4.6" lengthAdjust="spacingAndGlyphs">Y46</text><text x="794.2" y="370.2" font-size="3.538" fill="#2c2c2c" text-anchor="end" textLength="20.0" lengthAdjust="spacingAndGlyphs">SD/RXD/GPIO_9</text><text x="796.6" y="368.5" font-size="3.538" fill="#555" text-anchor="start" textLength="4.6" lengthAdjust="spacingAndGlyphs">AD7</text><text x="794.2" y="376.1" font-size="3.538" fill="#2c2c2c" text-anchor="end" textLength="53.8" lengthAdjust="spacingAndGlyphs">WBDB/CLK_IDA_0/CLK_ACK_GPIO/GPIO_73</text><text x="796.6" y="374.4" font-size="3.538" fill="#555" text-anchor="start" textLength="4.6" lengthAdjust="spacingAndGlyphs">AA5</text><text x="794.2" y="387.6" font-size="3.538" fill="#2c2c2c" text-anchor="end" textLength="7.7" lengthAdjust="spacingAndGlyphs">RF_01</text><text x="796.6" y="385.9" font-size="3.538" fill="#555" text-anchor="start" textLength="3.1" lengthAdjust="spacingAndGlyphs">J5</text><text x="794.2" y="393.4" font-size="3.538" fill="#2c2c2c" text-anchor="end" textLength="7.7" lengthAdjust="spacingAndGlyphs">RF_02</text><text x="796.6" y="391.7" font-size="3.538" fill="#555" text-anchor="start" textLength="3.1" lengthAdjust="spacingAndGlyphs">V7</text><text x="794.2" y="399.1" font-size="3.538" fill="#2c2c2c" text-anchor="end" textLength="7.7" lengthAdjust="spacingAndGlyphs">RF_03</text><text x="796.6" y="397.4" font-size="3.538" fill="#555" text-anchor="start" textLength="3.1" lengthAdjust="spacingAndGlyphs">AC</text><text x="794.2" y="404.8" font-size="3.538" fill="#2c2c2c" text-anchor="end" textLength="7.7" lengthAdjust="spacingAndGlyphs">RF_04</text><text x="796.6" y="403.1" font-size="3.538" fill="#555" text-anchor="start" textLength="3.1" lengthAdjust="spacingAndGlyphs">AB</text><text x="794.2" y="416.4" font-size="3.538" fill="#2c2c2c" text-anchor="end" textLength="23.1" lengthAdjust="spacingAndGlyphs">SWR0/D1/GPIO_06</text><text x="796.6" y="414.7" font-size="3.538" fill="#555" text-anchor="start" textLength="4.6" lengthAdjust="spacingAndGlyphs">V16</text><path d="M795.4 415.2 L870.5 415.2" stroke="#767676" stroke-width="0.8"/><rect x="870.5" y="413.5" width="6.0" height="3.4" rx="1" stroke="#8a8a8a" stroke-width="0.6" fill="#fff"/><text x="878.0" y="416.9" font-size="5" fill="#3c3cb8" text-anchor="start" textLength="15.6" lengthAdjust="spacingAndGlyphs">SWR_DAT1</text><path d="M878.0 417.5 h15.6" stroke="#4646c0" stroke-width="0.55"/><text x="903.0" y="416.2" font-size="3.538" fill="#666" text-anchor="start" textLength="3.1" lengthAdjust="spacingAndGlyphs">P9</text><text x="794.2" y="422.1" font-size="3.538" fill="#2c2c2c" text-anchor="end" textLength="23.1" lengthAdjust="spacingAndGlyphs">SWR0/D1/GPIO_07</text><text x="796.6" y="420.4" font-size="3.538" fill="#555" text-anchor="start" textLength="4.6" lengthAdjust="spacingAndGlyphs">T16</text><path d="M795.4 420.9 L870.5 420.9" stroke="#767676" stroke-width="0.8"/><rect x="870.5" y="419.2" width="6.0" height="3.4" rx="1" stroke="#8a8a8a" stroke-width="0.6" fill="#fff"/><text x="878.0" y="422.6" font-size="5" fill="#3c3cb8" text-anchor="start" textLength="13.7" lengthAdjust="spacingAndGlyphs">SWR_CLK</text><path d="M878.0 423.2 h13.7" stroke="#4646c0" stroke-width="0.55"/><text x="903.0" y="421.9" font-size="3.538" fill="#666" text-anchor="start" textLength="3.1" lengthAdjust="spacingAndGlyphs">P9</text><text x="794.2" y="427.9" font-size="3.538" fill="#2c2c2c" text-anchor="end" textLength="23.1" lengthAdjust="spacingAndGlyphs">SWR0/P2/GPIO_05</text><text x="796.6" y="426.2" font-size="3.538" fill="#555" text-anchor="start" textLength="4.6" lengthAdjust="spacingAndGlyphs">A17</text><path d="M795.4 426.7 L870.5 426.7" stroke="#767676" stroke-width="0.8"/><rect x="870.5" y="425.0" width="6.0" height="3.4" rx="1" stroke="#8a8a8a" stroke-width="0.6" fill="#fff"/><text x="878.0" y="428.4" font-size="5" fill="#3c3cb8" text-anchor="start" textLength="15.6" lengthAdjust="spacingAndGlyphs">SWR_DAT2</text><path d="M878.0 429.0 h15.6" stroke="#4646c0" stroke-width="0.55"/><text x="903.0" y="427.7" font-size="3.538" fill="#666" text-anchor="start" textLength="3.1" lengthAdjust="spacingAndGlyphs">P9</text><text x="794.2" y="436.2" font-size="3.538" fill="#2c2c2c" text-anchor="end" textLength="23.1" lengthAdjust="spacingAndGlyphs">SWR1/D7/GPIO_82</text><text x="796.6" y="434.5" font-size="3.538" fill="#555" text-anchor="start" textLength="4.6" lengthAdjust="spacingAndGlyphs">Y16</text><path d="M795.4 435.0 L870.5 435.0" stroke="#767676" stroke-width="0.8"/><rect x="870.5" y="433.3" width="6.0" height="3.4" rx="1" stroke="#8a8a8a" stroke-width="0.6" fill="#fff"/><text x="878.0" y="436.7" font-size="5" fill="#3c3cb8" text-anchor="start" textLength="15.6" lengthAdjust="spacingAndGlyphs">SWR_DAT3</text><path d="M878.0 437.3 h15.6" stroke="#4646c0" stroke-width="0.55"/><text x="903.0" y="436.0" font-size="3.538" fill="#666" text-anchor="start" textLength="3.1" lengthAdjust="spacingAndGlyphs">P9</text><text x="794.2" y="441.9" font-size="3.538" fill="#2c2c2c" text-anchor="end" textLength="23.1" lengthAdjust="spacingAndGlyphs">SWR1/D1/GPIO_83</text><text x="796.6" y="440.2" font-size="3.538" fill="#555" text-anchor="start" textLength="4.6" lengthAdjust="spacingAndGlyphs">U15</text><path d="M795.4 440.7 L870.5 440.7" stroke="#767676" stroke-width="0.8"/><rect x="870.5" y="439.0" width="6.0" height="3.4" rx="1" stroke="#8a8a8a" stroke-width="0.6" fill="#fff"/><text x="878.0" y="442.4" font-size="5" fill="#3c3cb8" text-anchor="start" textLength="15.6" lengthAdjust="spacingAndGlyphs">SWR_CLK1</text><path d="M878.0 443.0 h15.6" stroke="#4646c0" stroke-width="0.55"/><text x="903.0" y="441.7" font-size="3.538" fill="#666" text-anchor="start" textLength="3.1" lengthAdjust="spacingAndGlyphs">P9</text><text x="794.2" y="447.4" font-size="3.538" fill="#2c2c2c" text-anchor="end" textLength="23.1" lengthAdjust="spacingAndGlyphs">SWR1/P1/GPIO_84</text><text x="796.6" y="445.7" font-size="3.538" fill="#555" text-anchor="start" textLength="4.6" lengthAdjust="spacingAndGlyphs">L14</text><path d="M795.4 446.2 L870.5 446.2" stroke="#767676" stroke-width="0.8"/><rect x="870.5" y="444.5" width="6.0" height="3.4" rx="1" stroke="#8a8a8a" stroke-width="0.6" fill="#fff"/><text x="878.0" y="447.9" font-size="5" fill="#3c3cb8" text-anchor="start" textLength="15.6" lengthAdjust="spacingAndGlyphs">SWR_DAT4</text><path d="M878.0 448.5 h15.6" stroke="#4646c0" stroke-width="0.55"/><text x="903.0" y="447.2" font-size="3.538" fill="#666" text-anchor="start" textLength="3.1" lengthAdjust="spacingAndGlyphs">P9</text><text x="794.2" y="456.0" font-size="3.538" fill="#2c2c2c" text-anchor="end" textLength="50.7" lengthAdjust="spacingAndGlyphs">SWR1/D1/GPIO_0_CLK/GPIO_78/DAK1_1</text><text x="796.6" y="454.3" font-size="3.538" fill="#555" text-anchor="start" textLength="4.6" lengthAdjust="spacingAndGlyphs">V15</text><path d="M795.4 454.8 L870.5 454.8" stroke="#767676" stroke-width="0.8"/><rect x="870.5" y="453.1" width="6.0" height="3.4" rx="1" stroke="#8a8a8a" stroke-width="0.6" fill="#fff"/><text x="878.0" y="456.5" font-size="5" fill="#3c3cb8" text-anchor="start" textLength="15.6" lengthAdjust="spacingAndGlyphs">SWR_DAT5</text><path d="M878.0 457.1 h15.6" stroke="#4646c0" stroke-width="0.55"/><text x="903.0" y="455.8" font-size="3.538" fill="#666" text-anchor="start" textLength="3.1" lengthAdjust="spacingAndGlyphs">P9</text><text x="794.2" y="461.9" font-size="3.538" fill="#2c2c2c" text-anchor="end" textLength="64.6" lengthAdjust="spacingAndGlyphs">SWR1/D1/GPIO_0_RX/GPIO_0_TX0/GPIO_0/DAK1_1</text><text x="796.6" y="460.2" font-size="3.538" fill="#555" text-anchor="start" textLength="4.6" lengthAdjust="spacingAndGlyphs">T15</text><path d="M795.4 460.7 L870.5 460.7" stroke="#767676" stroke-width="0.8"/><rect x="870.5" y="459.0" width="6.0" height="3.4" rx="1" stroke="#8a8a8a" stroke-width="0.6" fill="#fff"/><text x="878.0" y="462.4" font-size="5" fill="#3c3cb8" text-anchor="start" textLength="15.6" lengthAdjust="spacingAndGlyphs">SWR_CLK2</text><path d="M878.0 463.0 h15.6" stroke="#4646c0" stroke-width="0.55"/><text x="903.0" y="461.7" font-size="3.538" fill="#666" text-anchor="start" textLength="3.1" lengthAdjust="spacingAndGlyphs">P9</text><text x="794.2" y="467.6" font-size="3.538" fill="#2c2c2c" text-anchor="end" textLength="49.2" lengthAdjust="spacingAndGlyphs">SWR7/T1/SPI_0_DAK1_0_ADD/GPIO_16</text><text x="796.6" y="465.9" font-size="3.538" fill="#555" text-anchor="start" textLength="4.6" lengthAdjust="spacingAndGlyphs">T17</text><path d="M795.4 466.4 L870.5 466.4" stroke="#767676" stroke-width="0.8"/><rect x="870.5" y="464.7" width="6.0" height="3.4" rx="1" stroke="#8a8a8a" stroke-width="0.6" fill="#fff"/><text x="878.0" y="468.1" font-size="5" fill="#3c3cb8" text-anchor="start" textLength="15.6" lengthAdjust="spacingAndGlyphs">SWR_DAT7</text><path d="M878.0 468.7 h15.6" stroke="#4646c0" stroke-width="0.55"/><text x="903.0" y="467.4" font-size="3.538" fill="#666" text-anchor="start" textLength="3.1" lengthAdjust="spacingAndGlyphs">P9</text><text x="794.2" y="479.2" font-size="3.538" fill="#2c2c2c" text-anchor="end" textLength="61.5" lengthAdjust="spacingAndGlyphs">GPIO_0_CSS/GPIO_06/BT_FX1/DAC/GPIO_1_CSS</text><text x="796.6" y="477.5" font-size="3.538" fill="#555" text-anchor="start" textLength="4.6" lengthAdjust="spacingAndGlyphs">J46</text><text x="794.2" y="485.2" font-size="3.538" fill="#2c2c2c" text-anchor="end" textLength="27.7" lengthAdjust="spacingAndGlyphs">GPIO_1_CSS/GPIO_10</text><text x="796.6" y="483.5" font-size="3.538" fill="#555" text-anchor="start" textLength="4.6" lengthAdjust="spacingAndGlyphs">AB5</text><text x="794.2" y="490.8" font-size="3.538" fill="#2c2c2c" text-anchor="end" textLength="27.7" lengthAdjust="spacingAndGlyphs">GPIO_2_CLK/GPIO_81</text><text x="796.6" y="489.1" font-size="3.538" fill="#555" text-anchor="start" textLength="4.6" lengthAdjust="spacingAndGlyphs">V17</text><text x="794.2" y="496.6" font-size="3.538" fill="#2c2c2c" text-anchor="end" textLength="38.4" lengthAdjust="spacingAndGlyphs">GPIO_3_0/L1/DWMT7/GPIO_78</text><text x="796.6" y="494.9" font-size="3.538" fill="#555" text-anchor="start" textLength="4.6" lengthAdjust="spacingAndGlyphs">V45</text><text x="794.2" y="502.2" font-size="3.538" fill="#2c2c2c" text-anchor="end" textLength="38.4" lengthAdjust="spacingAndGlyphs">GPIO_4_0/L1/DWMT8/GPIO_17</text><text x="796.6" y="500.5" font-size="3.538" fill="#555" text-anchor="start" textLength="4.6" lengthAdjust="spacingAndGlyphs">AD7</text><text x="794.2" y="514.2" font-size="3.538" fill="#2c2c2c" text-anchor="end" textLength="50.7" lengthAdjust="spacingAndGlyphs">SD_CMD/A1_1_TX0/GPIO_0_DO/GPIO_10</text><text x="796.6" y="512.5" font-size="3.538" fill="#555" text-anchor="start" textLength="4.6" lengthAdjust="spacingAndGlyphs">V25</text><path d="M795.4 513.0 L870.5 513.0" stroke="#767676" stroke-width="0.8"/><rect x="870.5" y="511.3" width="6.0" height="3.4" rx="1" stroke="#8a8a8a" stroke-width="0.6" fill="#fff"/><text x="878.0" y="514.7" font-size="5" fill="#3c3cb8" text-anchor="start" textLength="11.7" lengthAdjust="spacingAndGlyphs">SD_CMD</text><path d="M878.0 515.4 h11.7" stroke="#4646c0" stroke-width="0.55"/><text x="903.0" y="514.0" font-size="3.538" fill="#666" text-anchor="start" textLength="3.1" lengthAdjust="spacingAndGlyphs">P9</text><text x="794.2" y="519.8" font-size="3.538" fill="#2c2c2c" text-anchor="end" textLength="49.2" lengthAdjust="spacingAndGlyphs">SD_D0/A1_1_RX0/GPIO_0_DI/GPIO_11</text><text x="796.6" y="518.1" font-size="3.538" fill="#555" text-anchor="start" textLength="4.6" lengthAdjust="spacingAndGlyphs">R24</text><path d="M795.4 518.6 L870.5 518.6" stroke="#767676" stroke-width="0.8"/><rect x="870.5" y="516.9" width="6.0" height="3.4" rx="1" stroke="#8a8a8a" stroke-width="0.6" fill="#fff"/><text x="878.0" y="520.3" font-size="5" fill="#3c3cb8" text-anchor="start" textLength="11.7" lengthAdjust="spacingAndGlyphs">SD_DAT</text><path d="M878.0 521.0 h11.7" stroke="#4646c0" stroke-width="0.55"/><text x="903.0" y="519.6" font-size="3.538" fill="#666" text-anchor="start" textLength="3.1" lengthAdjust="spacingAndGlyphs">P9</text><text x="794.2" y="525.7" font-size="3.538" fill="#2c2c2c" text-anchor="end" textLength="20.0" lengthAdjust="spacingAndGlyphs">SD_D1/GPIO_82</text><text x="796.6" y="524.0" font-size="3.538" fill="#555" text-anchor="start" textLength="4.6" lengthAdjust="spacingAndGlyphs">R25</text><path d="M795.4 524.5 L870.5 524.5" stroke="#767676" stroke-width="0.8"/><rect x="870.5" y="522.8" width="6.0" height="3.4" rx="1" stroke="#8a8a8a" stroke-width="0.6" fill="#fff"/><text x="878.0" y="526.2" font-size="5" fill="#3c3cb8" text-anchor="start" textLength="9.8" lengthAdjust="spacingAndGlyphs">SD_D1</text><path d="M878.0 526.9 h9.8" stroke="#4646c0" stroke-width="0.55"/><text x="903.0" y="525.5" font-size="3.538" fill="#666" text-anchor="start" textLength="3.1" lengthAdjust="spacingAndGlyphs">P9</text><text x="794.2" y="531.4" font-size="3.538" fill="#2c2c2c" text-anchor="end" textLength="20.0" lengthAdjust="spacingAndGlyphs">SD_D2/GPIO_88</text><text x="796.6" y="529.7" font-size="3.538" fill="#555" text-anchor="start" textLength="4.6" lengthAdjust="spacingAndGlyphs">U25</text><path d="M795.4 530.2 L870.5 530.2" stroke="#767676" stroke-width="0.8"/><rect x="870.5" y="528.5" width="6.0" height="3.4" rx="1" stroke="#8a8a8a" stroke-width="0.6" fill="#fff"/><text x="878.0" y="531.9" font-size="5" fill="#3c3cb8" text-anchor="start" textLength="9.8" lengthAdjust="spacingAndGlyphs">SD_D2</text><path d="M878.0 532.6 h9.8" stroke="#4646c0" stroke-width="0.55"/><text x="903.0" y="531.2" font-size="3.538" fill="#666" text-anchor="start" textLength="3.1" lengthAdjust="spacingAndGlyphs">P9</text><text x="794.2" y="537.2" font-size="3.538" fill="#2c2c2c" text-anchor="end" textLength="36.9" lengthAdjust="spacingAndGlyphs">SD_D3/GPIO_0_CSS/GPIO_13</text><text x="796.6" y="535.5" font-size="3.538" fill="#555" text-anchor="start" textLength="4.6" lengthAdjust="spacingAndGlyphs">P24</text><path d="M795.4 536.0 L870.5 536.0" stroke="#767676" stroke-width="0.8"/><rect x="870.5" y="534.3" width="6.0" height="3.4" rx="1" stroke="#8a8a8a" stroke-width="0.6" fill="#fff"/><text x="878.0" y="537.7" font-size="5" fill="#3c3cb8" text-anchor="start" textLength="9.8" lengthAdjust="spacingAndGlyphs">SD_D3</text><path d="M878.0 538.4 h9.8" stroke="#4646c0" stroke-width="0.55"/><text x="903.0" y="537.0" font-size="3.538" fill="#666" text-anchor="start" textLength="3.1" lengthAdjust="spacingAndGlyphs">P9</text><text x="794.2" y="543.0" font-size="3.538" fill="#2c2c2c" text-anchor="end" textLength="38.4" lengthAdjust="spacingAndGlyphs">SD_CLK/GPIO_0_CLK/GPIO_12</text><text x="796.6" y="541.3" font-size="3.538" fill="#555" text-anchor="start" textLength="4.6" lengthAdjust="spacingAndGlyphs">R23</text><path d="M795.4 541.8 L870.5 541.8" stroke="#767676" stroke-width="0.8"/><rect x="870.5" y="540.1" width="6.0" height="3.4" rx="1" stroke="#8a8a8a" stroke-width="0.6" fill="#fff"/><text x="878.0" y="543.5" font-size="5" fill="#3c3cb8" text-anchor="start" textLength="13.7" lengthAdjust="spacingAndGlyphs">SD_CLKM</text><path d="M878.0 544.1 h13.7" stroke="#4646c0" stroke-width="0.55"/><text x="903.0" y="542.8" font-size="3.538" fill="#666" text-anchor="start" textLength="3.1" lengthAdjust="spacingAndGlyphs">P9</text><text x="794.2" y="554.6" font-size="3.538" fill="#2c2c2c" text-anchor="end" textLength="49.2" lengthAdjust="spacingAndGlyphs">SD_CLK1/GPIO_0_D0/GPIO_37/EXTAFI</text><text x="796.6" y="552.9" font-size="3.538" fill="#555" text-anchor="start" textLength="4.6" lengthAdjust="spacingAndGlyphs">W25</text><path d="M795.4 553.4 L870.5 553.4" stroke="#767676" stroke-width="0.8"/><rect x="870.5" y="551.7" width="6.0" height="3.4" rx="1" stroke="#8a8a8a" stroke-width="0.6" fill="#fff"/><text x="878.0" y="555.1" font-size="5" fill="#3c3cb8" text-anchor="start" textLength="17.6" lengthAdjust="spacingAndGlyphs">USBC_CTRL</text><path d="M878.0 555.8 h17.6" stroke="#4646c0" stroke-width="0.55"/><text x="903.0" y="554.4" font-size="3.538" fill="#666" text-anchor="start" textLength="3.1" lengthAdjust="spacingAndGlyphs">P9</text><text x="794.2" y="563.2" font-size="3.538" fill="#2c2c2c" text-anchor="end" textLength="16.9" lengthAdjust="spacingAndGlyphs">EXTRFCS_PWM</text><text x="796.6" y="561.5" font-size="3.538" fill="#555" text-anchor="start" textLength="3.1" lengthAdjust="spacingAndGlyphs">J6</text><path d="M795.4 562.0 L870.5 562.0" stroke="#767676" stroke-width="0.8"/><rect x="870.5" y="560.3" width="6.0" height="3.4" rx="1" stroke="#8a8a8a" stroke-width="0.6" fill="#fff"/><text x="878.0" y="563.7" font-size="5" fill="#3c3cb8" text-anchor="start" textLength="29.2" lengthAdjust="spacingAndGlyphs">EXTBOOT_SDIOPWM</text><path d="M878.0 564.4 h29.2" stroke="#4646c0" stroke-width="0.55"/><text x="903.0" y="560.0" font-size="3.538" fill="#666" text-anchor="start" textLength="3.1" lengthAdjust="spacingAndGlyphs">P9</text><text x="794.2" y="612.0" font-size="3.538" fill="#2c2c2c" text-anchor="end" textLength="23.1" lengthAdjust="spacingAndGlyphs">CLK_ASK/GPIO_14</text><text x="796.6" y="610.3" font-size="3.538" fill="#555" text-anchor="start" textLength="4.6" lengthAdjust="spacingAndGlyphs">AB5</text><text x="794.2" y="617.4" font-size="3.538" fill="#2c2c2c" text-anchor="end" textLength="40.0" lengthAdjust="spacingAndGlyphs">TRM/CLK_SLK/CLKBUS/GPIO_15</text><text x="796.6" y="615.7" font-size="3.538" fill="#555" text-anchor="start" textLength="3.1" lengthAdjust="spacingAndGlyphs">A5</text><text x="794.2" y="568.4" font-size="3.538" fill="#2c2c2c" text-anchor="end" textLength="7.7" lengthAdjust="spacingAndGlyphs">HV_IO</text><text x="796.6" y="566.7" font-size="3.538" fill="#555" text-anchor="start" textLength="3.1" lengthAdjust="spacingAndGlyphs">AD</text><path d="M795.4 567.2 L824.0 567.2 L824.0 570.1 L838.4 570.1" stroke="#767676" stroke-width="0.8" fill="none"/><path d="M838.4 567.9 L838.4 572.3" stroke="#555" stroke-width="0.8"/><path d="M840.2 567.9 L840.2 572.3" stroke="#555" stroke-width="0.8"/><path d="M840.2 570.1 L855.6 570.1" stroke="#767676" stroke-width="0.8"/><path d="M855.6 567.8 L855.6 572.4" stroke="#888" stroke-width="0.7"/><text x="827.5" y="569.0" font-size="3.172" fill="#555" text-anchor="start" textLength="6.9" lengthAdjust="spacingAndGlyphs">C0603</text><rect x="822.0" y="564.0" width="24.0" height="10.0" fill="#ffffcc" opacity="0.12"/><text x="794.2" y="574.4" font-size="3.538" fill="#2c2c2c" text-anchor="end" textLength="13.8" lengthAdjust="spacingAndGlyphs">TESTBOOT0</text><text x="796.6" y="572.7" font-size="3.538" fill="#555" text-anchor="start" textLength="3.1" lengthAdjust="spacingAndGlyphs">A5</text><text x="794.2" y="580.7" font-size="3.538" fill="#2c2c2c" text-anchor="end" textLength="7.7" lengthAdjust="spacingAndGlyphs">PBRST</text><text x="796.6" y="579.0" font-size="3.538" fill="#555" text-anchor="start" textLength="3.1" lengthAdjust="spacingAndGlyphs">W5</text><path d="M795.4 579.5 L870.5 579.5" stroke="#767676" stroke-width="0.8"/><rect x="870.5" y="577.8" width="6.0" height="3.4" rx="1" stroke="#8a8a8a" stroke-width="0.6" fill="#fff"/><text x="878.0" y="581.2" font-size="5" fill="#3c3cb8" text-anchor="start" textLength="9.8" lengthAdjust="spacingAndGlyphs">PBRST</text><path d="M878.0 581.9 h9.8" stroke="#4646c0" stroke-width="0.55"/><text x="903.0" y="580.5" font-size="3.538" fill="#666" text-anchor="start" textLength="3.1" lengthAdjust="spacingAndGlyphs">P9</text><text x="794.2" y="586.3" font-size="3.538" fill="#2c2c2c" text-anchor="end" textLength="7.7" lengthAdjust="spacingAndGlyphs">PBOOT</text><text x="796.6" y="584.6" font-size="3.538" fill="#555" text-anchor="start" textLength="3.1" lengthAdjust="spacingAndGlyphs">L4</text><path d="M795.4 585.1 L827.4 585.1" stroke="#767676" stroke-width="0.8"/><path d="M827.4 582.8 L827.4 587.4" stroke="#888" stroke-width="0.7"/><text x="794.2" y="594.7" font-size="3.538" fill="#2c2c2c" text-anchor="end" textLength="13.8" lengthAdjust="spacingAndGlyphs">LIONDMODE</text><text x="796.6" y="593.0" font-size="3.538" fill="#555" text-anchor="start" textLength="3.1" lengthAdjust="spacingAndGlyphs">A5</text><path d="M795.4 593.5 L870.5 593.5" stroke="#767676" stroke-width="0.8"/><path d="M870.8 591.2 L870.8 595.8" stroke="#888" stroke-width="0.7"/><text x="794.2" y="600.3" font-size="3.538" fill="#2c2c2c" text-anchor="end" textLength="20.0" lengthAdjust="spacingAndGlyphs">BOARD_REF_SEL</text><text x="796.6" y="598.6" font-size="3.538" fill="#555" text-anchor="start" textLength="3.1" lengthAdjust="spacingAndGlyphs">T3</text><path d="M795.4 599.1 L870.5 599.1" stroke="#767676" stroke-width="0.8"/><rect x="870.5" y="597.4" width="6.0" height="3.4" rx="1" stroke="#8a8a8a" stroke-width="0.6" fill="#fff"/><text x="878.0" y="600.8" font-size="5" fill="#3c3cb8" text-anchor="start" textLength="13.7" lengthAdjust="spacingAndGlyphs">VBOARD1</text><path d="M878.0 601.5 h13.7" stroke="#4646c0" stroke-width="0.55"/><text x="905.0" y="600.1" font-size="3.538" fill="#666" text-anchor="start" textLength="3.1" lengthAdjust="spacingAndGlyphs">P9</text><rect x="827.0" y="594.5" width="21.0" height="9.0" fill="#ffffcc" opacity="0.12"/><path d="M837.4 599.1 L837.9 600.4 L839.0 597.8 L840.1 600.4 L841.1 597.8 L842.2 600.4 L843.3 597.8 L843.8 599.1" stroke="#767676" stroke-width="0.7" fill="none"/><text x="829.0" y="598.2" font-size="3.172" fill="#555" text-anchor="start" textLength="6.9" lengthAdjust="spacingAndGlyphs">R0603</text><rect x="1160.0" y="205.0" width="40.0" height="32.0" fill="#ffffcc" opacity="0.11"/><rect x="1168.2" y="214.3" width="29.4" height="17.0" stroke="#6c6c6c" stroke-width="0.9" fill="none"/><text x="1183.0" y="213.4" font-size="3.294" fill="#333" text-anchor="middle" textLength="7.2" lengthAdjust="spacingAndGlyphs">X1000</text><text x="1183.0" y="235.6" font-size="3.416" fill="#333" text-anchor="middle" textLength="26.7" lengthAdjust="spacingAndGlyphs">CRYSTAL_38M4Q-2520</text><text x="1169.6" y="221.6" font-size="3.416" fill="#222" text-anchor="start" textLength="4.5" lengthAdjust="spacingAndGlyphs">HOT</text><text x="1196.2" y="221.6" font-size="3.416" fill="#222" text-anchor="end" textLength="4.5" lengthAdjust="spacingAndGlyphs">GND</text><text x="1169.6" y="227.5" font-size="3.416" fill="#222" text-anchor="start" textLength="4.5" lengthAdjust="spacingAndGlyphs">GND</text><text x="1196.2" y="227.5" font-size="3.416" fill="#222" text-anchor="end" textLength="4.5" lengthAdjust="spacingAndGlyphs">HOT</text><text x="1167.2" y="220.0" font-size="3.05" fill="#333" text-anchor="end">1</text><text x="1167.2" y="225.9" font-size="3.05" fill="#333" text-anchor="end">4</text><text x="1198.8" y="220.0" font-size="3.05" fill="#333" text-anchor="start">3</text><text x="1198.8" y="225.9" font-size="3.05" fill="#333" text-anchor="start">2</text><path d="M1168.2 220.5 L1160.5 220.5 L1160.5 208.9 L1241.2 208.9" stroke="#8a8a8a" stroke-width="0.9" fill="none"/><rect x="1241.2" y="207.2" width="5.4" height="3.4" rx="1" stroke="#8a8a8a" stroke-width="0.6" fill="#fff"/><text x="1248.4" y="210.5" font-size="5" fill="#3c3cb8" text-anchor="start" textLength="12.6" lengthAdjust="spacingAndGlyphs">SNC_OHC</text><path d="M1248.4 211.2 h12.6" stroke="#4646c0" stroke-width="0.55"/><text x="1277.0" y="209.5" font-size="3.294" fill="#555" text-anchor="start" textLength="4.3" lengthAdjust="spacingAndGlyphs">1.8</text><path d="M1197.6 226.4 L1241.2 226.4" stroke="#767676" stroke-width="0.8"/><rect x="1241.2" y="224.7" width="5.4" height="3.4" rx="1" stroke="#8a8a8a" stroke-width="0.6" fill="#fff"/><text x="1248.4" y="228.0" font-size="5" fill="#3c3cb8" text-anchor="start" textLength="12.6" lengthAdjust="spacingAndGlyphs">SNC_OHC</text><path d="M1248.4 228.7 h12.6" stroke="#4646c0" stroke-width="0.55"/><text x="1277.0" y="227.0" font-size="3.294" fill="#555" text-anchor="start" textLength="4.3" lengthAdjust="spacingAndGlyphs">1.8</text><path d="M1154.6 226.4 L1168.2 226.4" stroke="#767676" stroke-width="0.8"/><path d="M1154.6 224.1 L1154.6 228.7" stroke="#999" stroke-width="0.7"/><path d="M1153.2 225.1 L1153.2 227.7" stroke="#bbb" stroke-width="0.6"/><path d="M1197.6 220.5 L1208.0 220.5" stroke="#767676" stroke-width="0.8"/><path d="M1208.6 218.2 L1208.6 222.8" stroke="#999" stroke-width="0.7"/><path d="M1210.0 219.2 L1210.0 221.8" stroke="#bbb" stroke-width="0.6"/><path d="M1211.4 219.9 L1211.4 221.1" stroke="#ccc" stroke-width="0.6"/><rect x="1088.0" y="316.0" width="10.0" height="176.0" fill="#ffffcc" opacity="0.19"/><rect x="1184.0" y="316.0" width="9.0" height="176.0" fill="#ffffcc" opacity="0.19"/><rect x="1097.6" y="318.3" width="86.4" height="171.7" stroke="#7c7c6a" stroke-width="1" fill="none"/><text x="1141.0" y="397.5" font-size="3.66" fill="#555" text-anchor="middle" textLength="11.1" lengthAdjust="spacingAndGlyphs">U1000-B</text><text x="1141.0" y="403.0" font-size="3.66" fill="#555" text-anchor="middle" textLength="20.7" lengthAdjust="spacingAndGlyphs">SDX55_FBGA433</text><text x="1098.8" y="333.4" font-size="3.294" fill="#333" text-anchor="start" textLength="15.7" lengthAdjust="spacingAndGlyphs">WLAN_RX_BB0</text><text x="1096.4" y="332.0" font-size="3.172" fill="#555" text-anchor="end" textLength="2.8" lengthAdjust="spacingAndGlyphs">A9</text><path d="M1037.0 332.3 L1097.6 332.3" stroke="#767676" stroke-width="0.8"/><rect x="1031.0" y="330.6" width="6.0" height="3.4" rx="1" stroke="#8a8a8a" stroke-width="0.6" fill="#fff"/><text x="1029.0" y="333.9" font-size="5" fill="#3c3cb8" text-anchor="end" textLength="18.5" lengthAdjust="spacingAndGlyphs">WCN_RX_BB0</text><path d="M1010.5 334.5 h18.5" stroke="#4646c0" stroke-width="0.55"/><text x="1000.0" y="333.3" font-size="3.294" fill="#666" text-anchor="start" textLength="4.3" lengthAdjust="spacingAndGlyphs">1.8</text><text x="1098.8" y="336.3" font-size="3.294" fill="#333" text-anchor="start" textLength="15.7" lengthAdjust="spacingAndGlyphs">WLAN_RX_BB1</text><text x="1096.4" y="334.9" font-size="3.172" fill="#555" text-anchor="end" textLength="2.8" lengthAdjust="spacingAndGlyphs">A3</text><path d="M1037.0 335.2 L1097.6 335.2" stroke="#767676" stroke-width="0.8"/><rect x="1031.0" y="333.5" width="6.0" height="3.4" rx="1" stroke="#8a8a8a" stroke-width="0.6" fill="#fff"/><text x="1029.0" y="336.8" font-size="5" fill="#3c3cb8" text-anchor="end" textLength="18.5" lengthAdjust="spacingAndGlyphs">WCN_RX_BB1</text><path d="M1010.5 337.4 h18.5" stroke="#4646c0" stroke-width="0.55"/><text x="1000.0" y="336.2" font-size="3.294" fill="#666" text-anchor="start" textLength="4.3" lengthAdjust="spacingAndGlyphs">1.8</text><text x="1098.8" y="339.2" font-size="3.294" fill="#333" text-anchor="start" textLength="15.7" lengthAdjust="spacingAndGlyphs">WLAN_RX_BB2</text><text x="1096.4" y="337.8" font-size="3.172" fill="#555" text-anchor="end" textLength="2.8" lengthAdjust="spacingAndGlyphs">A6</text><path d="M1037.0 338.1 L1097.6 338.1" stroke="#767676" stroke-width="0.8"/><rect x="1031.0" y="336.4" width="6.0" height="3.4" rx="1" stroke="#8a8a8a" stroke-width="0.6" fill="#fff"/><text x="1029.0" y="339.7" font-size="5" fill="#3c3cb8" text-anchor="end" textLength="18.5" lengthAdjust="spacingAndGlyphs">WCN_RX_BB2</text><path d="M1010.5 340.3 h18.5" stroke="#4646c0" stroke-width="0.55"/><text x="1000.0" y="339.1" font-size="3.294" fill="#666" text-anchor="start" textLength="4.3" lengthAdjust="spacingAndGlyphs">1.8</text><text x="1098.8" y="342.1" font-size="3.294" fill="#333" text-anchor="start" textLength="15.7" lengthAdjust="spacingAndGlyphs">WLAN_RX_BB3</text><text x="1096.4" y="340.7" font-size="3.172" fill="#555" text-anchor="end" textLength="2.8" lengthAdjust="spacingAndGlyphs">A9</text><path d="M1037.0 341.0 L1097.6 341.0" stroke="#767676" stroke-width="0.8"/><rect x="1031.0" y="339.3" width="6.0" height="3.4" rx="1" stroke="#8a8a8a" stroke-width="0.6" fill="#fff"/><text x="1029.0" y="342.6" font-size="5" fill="#3c3cb8" text-anchor="end" textLength="18.5" lengthAdjust="spacingAndGlyphs">WCN_RX_BB3</text><path d="M1010.5 343.2 h18.5" stroke="#4646c0" stroke-width="0.55"/><text x="1000.0" y="342.0" font-size="3.294" fill="#666" text-anchor="start" textLength="4.3" lengthAdjust="spacingAndGlyphs">1.8</text><text x="1098.8" y="345.0" font-size="3.294" fill="#333" text-anchor="start" textLength="15.7" lengthAdjust="spacingAndGlyphs">WLAN_RX_BB4</text><text x="1096.4" y="343.6" font-size="3.172" fill="#555" text-anchor="end" textLength="2.8" lengthAdjust="spacingAndGlyphs">A2</text><path d="M1037.0 343.9 L1097.6 343.9" stroke="#767676" stroke-width="0.8"/><rect x="1031.0" y="342.2" width="6.0" height="3.4" rx="1" stroke="#8a8a8a" stroke-width="0.6" fill="#fff"/><text x="1029.0" y="345.5" font-size="5" fill="#3c3cb8" text-anchor="end" textLength="18.5" lengthAdjust="spacingAndGlyphs">WCN_RX_BB4</text><path d="M1010.5 346.1 h18.5" stroke="#4646c0" stroke-width="0.55"/><text x="1000.0" y="344.9" font-size="3.294" fill="#666" text-anchor="start" textLength="4.3" lengthAdjust="spacingAndGlyphs">1.8</text><text x="1098.8" y="347.9" font-size="3.294" fill="#333" text-anchor="start" textLength="15.7" lengthAdjust="spacingAndGlyphs">WLAN_RX_BB5</text><text x="1096.4" y="346.5" font-size="3.172" fill="#555" text-anchor="end" textLength="2.8" lengthAdjust="spacingAndGlyphs">A5</text><path d="M1037.0 346.8 L1097.6 346.8" stroke="#767676" stroke-width="0.8"/><rect x="1031.0" y="345.1" width="6.0" height="3.4" rx="1" stroke="#8a8a8a" stroke-width="0.6" fill="#fff"/><text x="1029.0" y="348.4" font-size="5" fill="#3c3cb8" text-anchor="end" textLength="18.5" lengthAdjust="spacingAndGlyphs">WCN_RX_BB5</text><path d="M1010.5 349.0 h18.5" stroke="#4646c0" stroke-width="0.55"/><text x="1000.0" y="347.8" font-size="3.294" fill="#666" text-anchor="start" textLength="4.3" lengthAdjust="spacingAndGlyphs">1.8</text><path d="M1006.0 300.3 L1088.6 300.3 L1088.6 346.8" stroke="#767676" stroke-width="0.8" fill="none"/><circle cx="1088.6" cy="346.8" r="0.9" fill="#444"/><path d="M1006.0 298.0 L1006.0 302.6" stroke="#999" stroke-width="0.7"/><path d="M1004.6 299.0 L1004.6 301.6" stroke="#aaa" stroke-width="0.6"/><rect x="1024.0" y="296.0" width="24.0" height="10.0" fill="#ffffcc" opacity="0.31"/><path d="M1031.5 298.6 L1034.0 302.5" stroke="#666" stroke-width="0.7"/><path d="M1034.0 298.6 L1031.5 302.5" stroke="#666" stroke-width="0.7"/><text x="1037.0" y="300.0" font-size="3.172" fill="#555" text-anchor="start" textLength="6.9" lengthAdjust="spacingAndGlyphs">C0603</text><text x="1098.8" y="353.6" font-size="3.294" fill="#333" text-anchor="start" textLength="18.6" lengthAdjust="spacingAndGlyphs">WLAN_XO_RESET</text><text x="1096.4" y="352.2" font-size="3.172" fill="#555" text-anchor="end" textLength="2.8" lengthAdjust="spacingAndGlyphs">A2</text><path d="M1050.0 355.5 L1082.0 355.5 L1082.0 352.5 L1097.6 352.5" stroke="#767676" stroke-width="0.8" fill="none"/><rect x="1056.0" y="349.0" width="28.0" height="10.0" fill="#ffffcc" opacity="0.31"/><rect x="1063" y="353.8" width="10" height="3.4" fill="#ffffe2"/><path d="M1063.5 355.5 L1064.2 356.8 L1065.8 354.2 L1067.2 356.8 L1068.8 354.2 L1070.2 356.8 L1071.8 354.2 L1072.5 355.5" stroke="#767676" stroke-width="0.7" fill="none"/><text x="1071.0" y="354.0" font-size="3.172" fill="#555" text-anchor="start" textLength="6.9" lengthAdjust="spacingAndGlyphs">R0603</text><path d="M1050.0 353.3 L1050.0 357.7" stroke="#999" stroke-width="0.7"/><path d="M1048.6 354.3 L1048.6 356.7" stroke="#aaa" stroke-width="0.6"/><rect x="1062.0" y="340.0" width="18.0" height="9.0" fill="#ffffcc" opacity="0.25"/><path d="M1066.0 346.8 L1066.7 348.1 L1068.0 345.5 L1069.3 348.1 L1070.7 345.5 L1072.0 348.1 L1073.3 345.5 L1074.0 346.8" stroke="#767676" stroke-width="0.7" fill="none"/><text x="1066.0" y="343.0" font-size="3.172" fill="#555" text-anchor="start" textLength="6.9" lengthAdjust="spacingAndGlyphs">R0603</text><text x="1098.8" y="365.4" font-size="3.294" fill="#333" text-anchor="start" textLength="8.6" lengthAdjust="spacingAndGlyphs">BBCLK1</text><text x="1096.4" y="364.0" font-size="3.172" fill="#555" text-anchor="end" textLength="2.8" lengthAdjust="spacingAndGlyphs">A5</text><path d="M1037.0 364.3 L1097.6 364.3" stroke="#767676" stroke-width="0.8"/><rect x="1031.0" y="362.6" width="6.0" height="3.4" rx="1" stroke="#8a8a8a" stroke-width="0.6" fill="#fff"/><text x="1029.0" y="365.9" font-size="5" fill="#3c3cb8" text-anchor="end" textLength="11.1" lengthAdjust="spacingAndGlyphs">BBCLK2</text><path d="M1017.9 366.5 h11.1" stroke="#4646c0" stroke-width="0.55"/><text x="1000.0" y="365.3" font-size="3.294" fill="#666" text-anchor="start" textLength="4.3" lengthAdjust="spacingAndGlyphs">1.8</text><rect x="1060.0" y="360.0" width="25.0" height="9.0" fill="#ffffcc" opacity="0.25"/><path d="M1066.1 362.1 L1066.1 366.5" stroke="#555" stroke-width="0.8"/><path d="M1067.9 362.1 L1067.9 366.5" stroke="#555" stroke-width="0.8"/><text x="1071.0" y="366.5" font-size="3.172" fill="#555" text-anchor="start" textLength="6.9" lengthAdjust="spacingAndGlyphs">C0603</text><path d="M1050.0 362.0 L1050.0 366.6" stroke="#999" stroke-width="0.7"/><text x="1098.8" y="370.6" font-size="3.294" fill="#333" text-anchor="start" textLength="4.3" lengthAdjust="spacingAndGlyphs">MXP</text><text x="1096.4" y="369.2" font-size="3.172" fill="#555" text-anchor="end" textLength="2.8" lengthAdjust="spacingAndGlyphs">A1</text><path d="M1037.0 369.5 L1097.6 369.5" stroke="#767676" stroke-width="0.8"/><rect x="1031.0" y="367.8" width="6.0" height="3.4" rx="1" stroke="#8a8a8a" stroke-width="0.6" fill="#fff"/><text x="1029.0" y="371.1" font-size="5" fill="#3c3cb8" text-anchor="end" textLength="7.4" lengthAdjust="spacingAndGlyphs">MMIP</text><path d="M1021.6 371.7 h7.4" stroke="#4646c0" stroke-width="0.55"/><text x="1000.0" y="370.5" font-size="3.294" fill="#666" text-anchor="start" textLength="4.3" lengthAdjust="spacingAndGlyphs">1.8</text><text x="1098.8" y="373.7" font-size="3.294" fill="#333" text-anchor="start" textLength="4.3" lengthAdjust="spacingAndGlyphs">MXN</text><text x="1096.4" y="372.3" font-size="3.172" fill="#555" text-anchor="end" textLength="2.8" lengthAdjust="spacingAndGlyphs">A4</text><path d="M1037.0 372.6 L1097.6 372.6" stroke="#767676" stroke-width="0.8"/><rect x="1031.0" y="370.9" width="6.0" height="3.4" rx="1" stroke="#8a8a8a" stroke-width="0.6" fill="#fff"/><text x="1029.0" y="374.2" font-size="5" fill="#3c3cb8" text-anchor="end" textLength="7.4" lengthAdjust="spacingAndGlyphs">MMIN</text><path d="M1021.6 374.8 h7.4" stroke="#4646c0" stroke-width="0.55"/><text x="1000.0" y="373.6" font-size="3.294" fill="#666" text-anchor="start" textLength="4.3" lengthAdjust="spacingAndGlyphs">1.8</text><text x="1098.8" y="379.5" font-size="3.294" fill="#333" text-anchor="start" textLength="14.3" lengthAdjust="spacingAndGlyphs">ADCANCBIAS</text><text x="1096.4" y="378.1" font-size="3.172" fill="#555" text-anchor="end" textLength="2.8" lengthAdjust="spacingAndGlyphs">A1</text><text x="1098.8" y="385.1" font-size="3.294" fill="#333" text-anchor="start" textLength="10.0" lengthAdjust="spacingAndGlyphs">ADCINP0</text><text x="1096.4" y="383.7" font-size="3.172" fill="#555" text-anchor="end" textLength="2.8" lengthAdjust="spacingAndGlyphs">A7</text><text x="1098.8" y="388.1" font-size="3.294" fill="#333" text-anchor="start" textLength="10.0" lengthAdjust="spacingAndGlyphs">ADCINN0</text><text x="1096.4" y="386.7" font-size="3.172" fill="#555" text-anchor="end" textLength="2.8" lengthAdjust="spacingAndGlyphs">A1</text><text x="1098.8" y="393.5" font-size="3.294" fill="#333" text-anchor="start" textLength="11.4" lengthAdjust="spacingAndGlyphs">ADCXM_IN</text><text x="1096.4" y="392.1" font-size="3.172" fill="#555" text-anchor="end" textLength="2.8" lengthAdjust="spacingAndGlyphs">A6</text><path d="M1037.0 392.4 L1097.6 392.4" stroke="#767676" stroke-width="0.8"/><rect x="1031.0" y="390.7" width="6.0" height="3.4" rx="1" stroke="#8a8a8a" stroke-width="0.6" fill="#fff"/><text x="1029.0" y="394.0" font-size="5" fill="#3c3cb8" text-anchor="end" textLength="16.6" lengthAdjust="spacingAndGlyphs">GPIOXM_IN</text><path d="M1012.4 394.6 h16.6" stroke="#4646c0" stroke-width="0.55"/><text x="1000.0" y="393.4" font-size="3.294" fill="#666" text-anchor="start" textLength="7.2" lengthAdjust="spacingAndGlyphs">P9,10</text><rect x="1058.0" y="388.0" width="25.0" height="9.0" fill="#ffffcc" opacity="0.25"/><rect x="1062" y="390.7" width="9" height="3.4" fill="#ffffe2"/><path d="M1062.7 392.4 L1063.4 393.7 L1064.7 391.1 L1066.0 393.7 L1067.4 391.1 L1068.7 393.7 L1070.0 391.1 L1070.7 392.4" stroke="#767676" stroke-width="0.7" fill="none"/><text x="1071.5" y="391.3" font-size="3.172" fill="#444" text-anchor="start" textLength="6.9" lengthAdjust="spacingAndGlyphs">R0603</text><text x="1098.8" y="399.3" font-size="3.294" fill="#333" text-anchor="start" textLength="10.0" lengthAdjust="spacingAndGlyphs">ADCINP1</text><text x="1096.4" y="397.9" font-size="3.172" fill="#555" text-anchor="end" textLength="2.8" lengthAdjust="spacingAndGlyphs">A3</text><path d="M1037.0 398.2 L1097.6 398.2" stroke="#767676" stroke-width="0.8"/><rect x="1031.0" y="396.5" width="6.0" height="3.4" rx="1" stroke="#8a8a8a" stroke-width="0.6" fill="#fff"/><text x="1029.0" y="399.8" font-size="5" fill="#3c3cb8" text-anchor="end" textLength="14.8" lengthAdjust="spacingAndGlyphs">BBGPADC1</text><path d="M1014.2 400.4 h14.8" stroke="#4646c0" stroke-width="0.55"/><text x="1000.0" y="399.2" font-size="3.294" fill="#666" text-anchor="start" textLength="4.3" lengthAdjust="spacingAndGlyphs">1.8</text><text x="1098.8" y="402.1" font-size="3.294" fill="#333" text-anchor="start" textLength="10.0" lengthAdjust="spacingAndGlyphs">ADCINN1</text><text x="1096.4" y="400.7" font-size="3.172" fill="#555" text-anchor="end" textLength="2.8" lengthAdjust="spacingAndGlyphs">A6</text><path d="M1037.0 401.0 L1097.6 401.0" stroke="#767676" stroke-width="0.8"/><rect x="1031.0" y="399.3" width="6.0" height="3.4" rx="1" stroke="#8a8a8a" stroke-width="0.6" fill="#fff"/><text x="1029.0" y="402.6" font-size="5" fill="#3c3cb8" text-anchor="end" textLength="14.8" lengthAdjust="spacingAndGlyphs">BBGPADC2</text><path d="M1014.2 403.2 h14.8" stroke="#4646c0" stroke-width="0.55"/><text x="1000.0" y="402.0" font-size="3.294" fill="#666" text-anchor="start" textLength="4.3" lengthAdjust="spacingAndGlyphs">1.8</text><text x="1098.8" y="407.9" font-size="3.294" fill="#333" text-anchor="start" textLength="5.7" lengthAdjust="spacingAndGlyphs">DAC1</text><text x="1096.4" y="406.5" font-size="3.172" fill="#555" text-anchor="end" textLength="2.8" lengthAdjust="spacingAndGlyphs">A2</text><text x="1098.8" y="410.4" font-size="3.294" fill="#333" text-anchor="start" textLength="5.7" lengthAdjust="spacingAndGlyphs">DAC2</text><text x="1096.4" y="409.0" font-size="3.172" fill="#555" text-anchor="end" textLength="2.8" lengthAdjust="spacingAndGlyphs">A5</text><text x="1098.8" y="416.6" font-size="3.294" fill="#333" text-anchor="start" textLength="8.6" lengthAdjust="spacingAndGlyphs">RXIP_0</text><text x="1096.4" y="415.2" font-size="3.172" fill="#555" text-anchor="end" textLength="2.8" lengthAdjust="spacingAndGlyphs">A2</text><path d="M1037.0 415.5 L1097.6 415.5" stroke="#767676" stroke-width="0.8"/><rect x="1031.0" y="413.8" width="6.0" height="3.4" rx="1" stroke="#8a8a8a" stroke-width="0.6" fill="#fff"/><text x="1029.0" y="417.1" font-size="5" fill="#3c3cb8" text-anchor="end" textLength="12.9" lengthAdjust="spacingAndGlyphs">BBRXIPM</text><path d="M1016.1 417.7 h12.9" stroke="#4646c0" stroke-width="0.55"/><text x="1000.0" y="416.5" font-size="3.294" fill="#666" text-anchor="start" textLength="4.3" lengthAdjust="spacingAndGlyphs">1.8</text><text x="1098.8" y="419.4" font-size="3.294" fill="#333" text-anchor="start" textLength="8.6" lengthAdjust="spacingAndGlyphs">RXIM_0</text><text x="1096.4" y="418.0" font-size="3.172" fill="#555" text-anchor="end" textLength="2.8" lengthAdjust="spacingAndGlyphs">A5</text><path d="M1037.0 418.3 L1097.6 418.3" stroke="#767676" stroke-width="0.8"/><rect x="1031.0" y="416.6" width="6.0" height="3.4" rx="1" stroke="#8a8a8a" stroke-width="0.6" fill="#fff"/><text x="1029.0" y="419.9" font-size="5" fill="#3c3cb8" text-anchor="end" textLength="12.9" lengthAdjust="spacingAndGlyphs">BBRXIMM</text><path d="M1016.1 420.5 h12.9" stroke="#4646c0" stroke-width="0.55"/><text x="1000.0" y="419.3" font-size="3.294" fill="#666" text-anchor="start" textLength="4.3" lengthAdjust="spacingAndGlyphs">1.8</text><text x="1098.8" y="425.2" font-size="3.294" fill="#333" text-anchor="start" textLength="5.7" lengthAdjust="spacingAndGlyphs">RXQP</text><text x="1096.4" y="423.8" font-size="3.172" fill="#555" text-anchor="end" textLength="2.8" lengthAdjust="spacingAndGlyphs">A2</text><path d="M1037.0 424.1 L1097.6 424.1" stroke="#767676" stroke-width="0.8"/><rect x="1031.0" y="422.4" width="6.0" height="3.4" rx="1" stroke="#8a8a8a" stroke-width="0.6" fill="#fff"/><text x="1029.0" y="425.7" font-size="5" fill="#3c3cb8" text-anchor="end" textLength="11.1" lengthAdjust="spacingAndGlyphs">BBRXQP</text><path d="M1017.9 426.3 h11.1" stroke="#4646c0" stroke-width="0.55"/><text x="1000.0" y="425.1" font-size="3.294" fill="#666" text-anchor="start" textLength="4.3" lengthAdjust="spacingAndGlyphs">1.8</text><text x="1098.8" y="428.1" font-size="3.294" fill="#333" text-anchor="start" textLength="5.7" lengthAdjust="spacingAndGlyphs">RXQM</text><text x="1096.4" y="426.7" font-size="3.172" fill="#555" text-anchor="end" textLength="2.8" lengthAdjust="spacingAndGlyphs">A5</text><path d="M1037.0 427.0 L1097.6 427.0" stroke="#767676" stroke-width="0.8"/><rect x="1031.0" y="425.3" width="6.0" height="3.4" rx="1" stroke="#8a8a8a" stroke-width="0.6" fill="#fff"/><text x="1029.0" y="428.6" font-size="5" fill="#3c3cb8" text-anchor="end" textLength="11.1" lengthAdjust="spacingAndGlyphs">BBRXQM</text><path d="M1017.9 429.2 h11.1" stroke="#4646c0" stroke-width="0.55"/><text x="1000.0" y="428.0" font-size="3.294" fill="#666" text-anchor="start" textLength="4.3" lengthAdjust="spacingAndGlyphs">1.8</text><text x="1098.8" y="434.1" font-size="3.294" fill="#333" text-anchor="start" textLength="5.7" lengthAdjust="spacingAndGlyphs">TXIP</text><text x="1096.4" y="432.7" font-size="3.172" fill="#555" text-anchor="end" textLength="2.8" lengthAdjust="spacingAndGlyphs">A2</text><path d="M1037.0 433.0 L1097.6 433.0" stroke="#767676" stroke-width="0.8"/><rect x="1031.0" y="431.3" width="6.0" height="3.4" rx="1" stroke="#8a8a8a" stroke-width="0.6" fill="#fff"/><text x="1029.0" y="434.6" font-size="5" fill="#3c3cb8" text-anchor="end" textLength="12.9" lengthAdjust="spacingAndGlyphs">BBTXIPM</text><path d="M1016.1 435.2 h12.9" stroke="#4646c0" stroke-width="0.55"/><text x="1000.0" y="434.0" font-size="3.294" fill="#666" text-anchor="start" textLength="4.3" lengthAdjust="spacingAndGlyphs">1.8</text><text x="1098.8" y="437.1" font-size="3.294" fill="#333" text-anchor="start" textLength="5.7" lengthAdjust="spacingAndGlyphs">TXIM</text><text x="1096.4" y="435.7" font-size="3.172" fill="#555" text-anchor="end" textLength="2.8" lengthAdjust="spacingAndGlyphs">A5</text><path d="M1037.0 436.0 L1097.6 436.0" stroke="#767676" stroke-width="0.8"/><rect x="1031.0" y="434.3" width="6.0" height="3.4" rx="1" stroke="#8a8a8a" stroke-width="0.6" fill="#fff"/><text x="1029.0" y="437.6" font-size="5" fill="#3c3cb8" text-anchor="end" textLength="12.9" lengthAdjust="spacingAndGlyphs">BBTXIMM</text><path d="M1016.1 438.2 h12.9" stroke="#4646c0" stroke-width="0.55"/><text x="1000.0" y="437.0" font-size="3.294" fill="#666" text-anchor="start" textLength="4.3" lengthAdjust="spacingAndGlyphs">1.8</text><text x="1098.8" y="442.7" font-size="3.294" fill="#333" text-anchor="start" textLength="8.6" lengthAdjust="spacingAndGlyphs">TXQP_0</text><text x="1096.4" y="441.3" font-size="3.172" fill="#555" text-anchor="end" textLength="2.8" lengthAdjust="spacingAndGlyphs">A1</text><path d="M1037.0 441.6 L1097.6 441.6" stroke="#767676" stroke-width="0.8"/><rect x="1031.0" y="439.9" width="6.0" height="3.4" rx="1" stroke="#8a8a8a" stroke-width="0.6" fill="#fff"/><text x="1029.0" y="443.2" font-size="5" fill="#3c3cb8" text-anchor="end" textLength="11.1" lengthAdjust="spacingAndGlyphs">BBTXQP</text><path d="M1017.9 443.8 h11.1" stroke="#4646c0" stroke-width="0.55"/><text x="1000.0" y="442.6" font-size="3.294" fill="#666" text-anchor="start" textLength="4.3" lengthAdjust="spacingAndGlyphs">1.8</text><text x="1098.8" y="445.7" font-size="3.294" fill="#333" text-anchor="start" textLength="8.6" lengthAdjust="spacingAndGlyphs">TXQM_0</text><text x="1096.4" y="444.3" font-size="3.172" fill="#555" text-anchor="end" textLength="2.8" lengthAdjust="spacingAndGlyphs">A4</text><path d="M1037.0 444.6 L1097.6 444.6" stroke="#767676" stroke-width="0.8"/><rect x="1031.0" y="442.9" width="6.0" height="3.4" rx="1" stroke="#8a8a8a" stroke-width="0.6" fill="#fff"/><text x="1029.0" y="446.2" font-size="5" fill="#3c3cb8" text-anchor="end" textLength="11.1" lengthAdjust="spacingAndGlyphs">BBTXQM</text><path d="M1017.9 446.8 h11.1" stroke="#4646c0" stroke-width="0.55"/><text x="1000.0" y="445.6" font-size="3.294" fill="#666" text-anchor="start" textLength="4.3" lengthAdjust="spacingAndGlyphs">1.8</text><rect x="1057.5" y="448.0" width="3.5" height="44.0" fill="#ffffcc" opacity="0.34"/><text x="1098.8" y="454.0" font-size="3.294" fill="#333" text-anchor="start" textLength="10.0" lengthAdjust="spacingAndGlyphs">PA_VCOM</text><text x="1096.4" y="452.6" font-size="3.172" fill="#555" text-anchor="end" textLength="2.8" lengthAdjust="spacingAndGlyphs">A3</text><path d="M1097.6 452.9 L1082.8 452.9 L1082.8 458.7 L1053.3 458.7" stroke="#767676" stroke-width="0.8" fill="none"/><path d="M1053.3 455.2 L1082.8 455.2" stroke="#767676" stroke-width="0.8"/><rect x="1064.0" y="451.0" width="17.0" height="10.0" fill="#ffffcc" opacity="0.28"/><path d="M1066.1 453.0 L1066.1 457.4" stroke="#555" stroke-width="0.8"/><path d="M1067.9 453.0 L1067.9 457.4" stroke="#555" stroke-width="0.8"/><path d="M1066.1 456.5 L1066.1 460.9" stroke="#555" stroke-width="0.8"/><path d="M1067.9 456.5 L1067.9 460.9" stroke="#555" stroke-width="0.8"/><text x="1071.0" y="454.6" font-size="3.172" fill="#444" text-anchor="start" textLength="6.9" lengthAdjust="spacingAndGlyphs">C0603</text><text x="1071.0" y="458.0" font-size="3.172" fill="#444" text-anchor="start" textLength="6.9" lengthAdjust="spacingAndGlyphs">C0402</text><path d="M1048.8 456.5 L1048.8 460.9" stroke="#aaa" stroke-width="0.7"/><path d="M1050.2 457.5 L1050.2 459.9" stroke="#bbb" stroke-width="0.6"/><path d="M1050.2 458.7 L1053.3 458.7" stroke="#767676" stroke-width="0.8"/><text x="1098.8" y="465.5" font-size="3.294" fill="#333" text-anchor="start" textLength="10.0" lengthAdjust="spacingAndGlyphs">VDDA1P8</text><text x="1096.4" y="464.1" font-size="3.172" fill="#555" text-anchor="end" textLength="2.8" lengthAdjust="spacingAndGlyphs">A6</text><path d="M1097.6 464.4 L1082.8 464.4 L1082.8 487.5" stroke="#767676" stroke-width="0.8" fill="none"/><text x="1098.8" y="471.3" font-size="3.294" fill="#333" text-anchor="start" textLength="11.4" lengthAdjust="spacingAndGlyphs">XTAL_19M</text><text x="1096.4" y="469.9" font-size="3.172" fill="#555" text-anchor="end" textLength="2.8" lengthAdjust="spacingAndGlyphs">A3</text><path d="M1037.0 470.2 L1097.6 470.2" stroke="#767676" stroke-width="0.8"/><rect x="1031.0" y="468.5" width="6.0" height="3.4" rx="1" stroke="#8a8a8a" stroke-width="0.6" fill="#fff"/><text x="1029.0" y="471.8" font-size="5" fill="#3c3cb8" text-anchor="end" textLength="12.9" lengthAdjust="spacingAndGlyphs">SNC_OHC</text><path d="M1016.1 472.4 h12.9" stroke="#4646c0" stroke-width="0.55"/><text x="1000.0" y="471.2" font-size="3.294" fill="#666" text-anchor="start" textLength="5.7" lengthAdjust="spacingAndGlyphs">1.10</text><text x="1098.8" y="477.1" font-size="3.294" fill="#333" text-anchor="start" textLength="15.7" lengthAdjust="spacingAndGlyphs">XTAL_19M_EN</text><text x="1096.4" y="475.7" font-size="3.172" fill="#555" text-anchor="end" textLength="2.8" lengthAdjust="spacingAndGlyphs">A9</text><path d="M1037.0 476.0 L1097.6 476.0" stroke="#767676" stroke-width="0.8"/><rect x="1031.0" y="474.3" width="6.0" height="3.4" rx="1" stroke="#8a8a8a" stroke-width="0.6" fill="#fff"/><text x="1029.0" y="477.6" font-size="5" fill="#3c3cb8" text-anchor="end" textLength="12.9" lengthAdjust="spacingAndGlyphs">SNC_OHC</text><path d="M1016.1 478.2 h12.9" stroke="#4646c0" stroke-width="0.55"/><text x="1000.0" y="477.0" font-size="3.294" fill="#666" text-anchor="start" textLength="5.7" lengthAdjust="spacingAndGlyphs">1.10</text><rect x="1062.0" y="466.5" width="19.0" height="23.5" fill="#ffffcc" opacity="0.28"/><rect x="1062.5" y="468.5" width="9" height="3.4" fill="#ffffe2"/><path d="M1063.0 470.2 L1063.7 471.5 L1065.0 468.9 L1066.3 471.5 L1067.7 468.9 L1069.0 471.5 L1070.3 468.9 L1071.0 470.2" stroke="#767676" stroke-width="0.7" fill="none"/><text x="1071.5" y="469.2" font-size="3.172" fill="#444" text-anchor="start" textLength="6.9" lengthAdjust="spacingAndGlyphs">R0603</text><rect x="1062.5" y="474.3" width="9" height="3.4" fill="#ffffe2"/><path d="M1063.0 476.0 L1063.7 477.3 L1065.0 474.7 L1066.3 477.3 L1067.7 474.7 L1069.0 477.3 L1070.3 474.7 L1071.0 476.0" stroke="#767676" stroke-width="0.7" fill="none"/><text x="1071.5" y="475.0" font-size="3.172" fill="#444" text-anchor="start" textLength="6.9" lengthAdjust="spacingAndGlyphs">R0603</text><rect x="1062.5" y="485.8" width="9" height="3.4" fill="#ffffe2"/><path d="M1063.0 487.5 L1063.7 488.8 L1065.0 486.2 L1066.3 488.8 L1067.7 486.2 L1069.0 488.8 L1070.3 486.2 L1071.0 487.5" stroke="#767676" stroke-width="0.7" fill="none"/><text x="1071.5" y="486.5" font-size="3.172" fill="#444" text-anchor="start" textLength="6.9" lengthAdjust="spacingAndGlyphs">R0603</text><path d="M1066.1 478.9 L1066.1 483.3" stroke="#555" stroke-width="0.8"/><path d="M1067.9 478.9 L1067.9 483.3" stroke="#555" stroke-width="0.8"/><text x="1071.5" y="480.1" font-size="3.172" fill="#444" text-anchor="start" textLength="6.9" lengthAdjust="spacingAndGlyphs">C0402</text><path d="M1051.4 481.1 L1082.8 481.1" stroke="#767676" stroke-width="0.8"/><path d="M1051.4 487.5 L1082.8 487.5" stroke="#767676" stroke-width="0.8"/><path d="M1051.4 470.2 L1051.4 487.5" stroke="#767676" stroke-width="0.8"/><circle cx="1051.4" cy="470.2" r="0.8" fill="#333"/><circle cx="1051.4" cy="476" r="0" fill="#333"/><path d="M1053.0 479.0 L1053.0 483.2" stroke="#aaa" stroke-width="0.7"/><text x="1182.8" y="333.4" font-size="3.294" fill="#333" text-anchor="end" textLength="10.0" lengthAdjust="spacingAndGlyphs">ATC_CLK</text><text x="1185.2" y="332.0" font-size="3.172" fill="#555" text-anchor="start" textLength="2.8" lengthAdjust="spacingAndGlyphs">A9</text><text x="1182.8" y="336.3" font-size="3.294" fill="#333" text-anchor="end" textLength="11.4" lengthAdjust="spacingAndGlyphs">ATC_DATA</text><text x="1185.2" y="334.9" font-size="3.172" fill="#555" text-anchor="start" textLength="2.8" lengthAdjust="spacingAndGlyphs">B9</text><rect x="1191.0" y="337.5" width="42.0" height="8.5" fill="#ffffcc" opacity="0.28"/><text x="1182.8" y="342.4" font-size="3.294" fill="#333" text-anchor="end" textLength="10.0" lengthAdjust="spacingAndGlyphs">VDDRFIC</text><text x="1185.2" y="341.0" font-size="3.172" fill="#555" text-anchor="start" textLength="2.8" lengthAdjust="spacingAndGlyphs">K1</text><path d="M1184.0 341.3 L1244.0 341.3" stroke="#767676" stroke-width="0.8"/><rect x="1244.0" y="339.6" width="6.0" height="3.4" rx="1" stroke="#8a8a8a" stroke-width="0.6" fill="#fff"/><text x="1251.5" y="342.9" font-size="5" fill="#3c3cb8" text-anchor="start" textLength="12.9" lengthAdjust="spacingAndGlyphs">VBBRFIC</text><path d="M1251.5 343.5 h12.9" stroke="#4646c0" stroke-width="0.55"/><text x="1278.0" y="342.3" font-size="3.294" fill="#666" text-anchor="start" textLength="4.3" lengthAdjust="spacingAndGlyphs">1.8</text><path d="M1197.4 341.3 L1197.4 343.9 L1230.0 343.9 L1230.0 341.3" stroke="#909090" stroke-width="0.7" fill="none"/><path d="M1211.2 340.9 L1213.8 345.1" stroke="#666" stroke-width="0.7"/><path d="M1213.8 340.9 L1211.2 345.1" stroke="#666" stroke-width="0.7"/><text x="1199.0" y="343.2" font-size="3.172" fill="#444" text-anchor="start" textLength="8.3" lengthAdjust="spacingAndGlyphs">C_0402</text><rect x="1218.0" y="346.0" width="36.0" height="7.5" fill="#ffffcc" opacity="0.25"/><text x="1182.8" y="347.3" font-size="3.294" fill="#333" text-anchor="end" textLength="7.2" lengthAdjust="spacingAndGlyphs">VBBFB</text><text x="1185.2" y="345.9" font-size="3.172" fill="#555" text-anchor="start" textLength="2.8" lengthAdjust="spacingAndGlyphs">L1</text><path d="M1184.0 346.2 L1203.2 346.2 L1203.2 349.7 L1251.5 349.7" stroke="#767676" stroke-width="0.8" fill="none"/><path d="M1231.7 348.4 L1234.3 352.6" stroke="#666" stroke-width="0.7"/><path d="M1234.3 348.4 L1231.7 352.6" stroke="#666" stroke-width="0.7"/><text x="1221.0" y="349.0" font-size="3.172" fill="#444" text-anchor="start" textLength="6.9" lengthAdjust="spacingAndGlyphs">C0402</text><text x="1237.0" y="349.0" font-size="3.172" fill="#444" text-anchor="start" textLength="13.8" lengthAdjust="spacingAndGlyphs">_0603  PNP</text><rect x="1195.0" y="353.0" width="38.0" height="9.5" fill="#ffffcc" opacity="0.31"/><text x="1182.8" y="356.1" font-size="3.294" fill="#333" text-anchor="end" textLength="10.0" lengthAdjust="spacingAndGlyphs">EXT_CAP</text><text x="1185.2" y="354.7" font-size="3.172" fill="#555" text-anchor="start" textLength="4.1" lengthAdjust="spacingAndGlyphs">J18</text><path d="M1184.0 355.0 L1197.4 355.0 L1197.4 358.4 L1230.0 358.4 L1230.0 355.5" stroke="#808080" stroke-width="0.8" fill="none"/><path d="M1211.2 355.4 L1213.8 359.6" stroke="#666" stroke-width="0.7"/><path d="M1213.8 355.4 L1211.2 359.6" stroke="#666" stroke-width="0.7"/><text x="1200.0" y="357.6" font-size="3.172" fill="#444" text-anchor="start" textLength="6.9" lengthAdjust="spacingAndGlyphs">C0402</text><text x="1182.8" y="362.4" font-size="3.294" fill="#333" text-anchor="end" textLength="8.6" lengthAdjust="spacingAndGlyphs">RF_INP</text><text x="1185.2" y="361.0" font-size="3.172" fill="#555" text-anchor="start" textLength="2.8" lengthAdjust="spacingAndGlyphs">A1</text><path d="M1184.0 361.3 L1244.0 361.3" stroke="#767676" stroke-width="0.8"/><rect x="1244.0" y="359.6" width="6.0" height="3.4" rx="1" stroke="#8a8a8a" stroke-width="0.6" fill="#fff"/><text x="1251.5" y="362.9" font-size="5" fill="#3c3cb8" text-anchor="start" textLength="11.1" lengthAdjust="spacingAndGlyphs">RF_INP</text><path d="M1251.5 363.5 h11.1" stroke="#4646c0" stroke-width="0.55"/><text x="1278.0" y="362.3" font-size="3.294" fill="#666" text-anchor="start" textLength="4.3" lengthAdjust="spacingAndGlyphs">1.8</text><path d="M1209.0 361.3 L1209.7 362.6 L1211.0 360.0 L1212.3 362.6 L1213.7 360.0 L1215.0 362.6 L1216.3 360.0 L1217.0 361.3" stroke="#767676" stroke-width="0.7" fill="none"/><text x="1200.0" y="361.0" font-size="3.172" fill="#444" text-anchor="start" textLength="6.9" lengthAdjust="spacingAndGlyphs">R0402</text><rect x="1190.0" y="362.5" width="24.0" height="36.5" fill="#ffffcc" opacity="0.31"/><path d="M1197.4 361.3 L1197.4 398.6" stroke="#767676" stroke-width="0.8"/><path d="M1194.6 366.0 L1200.2 366.0 L1197.4 368.6 Z" fill="#1c1c1c"/><path d="M1194.3 369.0 L1200.5 369.0" stroke="#1c1c1c" stroke-width="0.9"/><path d="M1194.6 365.1 L1197.4 366.3 L1200.2 365.1" stroke="#1c1c1c" stroke-width="0.8" fill="none"/><path d="M1194.6 386.3 L1200.2 386.3 L1197.4 388.9 Z" fill="#1c1c1c"/><path d="M1194.3 389.3 L1200.5 389.3" stroke="#1c1c1c" stroke-width="0.9"/><path d="M1194.6 385.4 L1197.4 386.6 L1200.2 385.4" stroke="#1c1c1c" stroke-width="0.8" fill="none"/><text x="1202.0" y="367.3" font-size="3.172" fill="#444" text-anchor="start" textLength="6.9" lengthAdjust="spacingAndGlyphs">D0504</text><text x="1202.0" y="387.3" font-size="3.172" fill="#444" text-anchor="start" textLength="6.9" lengthAdjust="spacingAndGlyphs">D0507</text><circle cx="1197.4" cy="361.3" r="0.8" fill="#333"/><circle cx="1197.4" cy="381.1" r="0.8" fill="#333"/><circle cx="1226.5" cy="361.3" r="0.8" fill="#333"/><circle cx="1226.5" cy="381.1" r="0.8" fill="#333"/><path d="M1194.6 401.0 L1200.2 401.0" stroke="#aaa" stroke-width="0.7"/><path d="M1223.7 401.0 L1229.3 401.0" stroke="#aaa" stroke-width="0.7"/><text x="1182.8" y="372.3" font-size="3.294" fill="#333" text-anchor="end" textLength="10.0" lengthAdjust="spacingAndGlyphs">HVDD_RF</text><text x="1185.2" y="370.9" font-size="3.172" fill="#555" text-anchor="start" textLength="2.8" lengthAdjust="spacingAndGlyphs">K9</text><path d="M1184.0 371.2 L1191.5 371.2 L1191.5 378.2 L1197.4 378.2" stroke="#909090" stroke-width="0.7" fill="none"/><text x="1182.8" y="382.2" font-size="3.294" fill="#333" text-anchor="end" textLength="8.6" lengthAdjust="spacingAndGlyphs">FBL_RF</text><text x="1185.2" y="380.8" font-size="3.172" fill="#555" text-anchor="start" textLength="2.8" lengthAdjust="spacingAndGlyphs">L9</text><path d="M1184.0 381.1 L1287.6 381.1" stroke="#767676" stroke-width="0.8"/><path d="M1209.0 381.1 L1209.7 382.4 L1211.0 379.8 L1212.3 382.4 L1213.7 379.8 L1215.0 382.4 L1216.3 379.8 L1217.0 381.1" stroke="#767676" stroke-width="0.7" fill="none"/><text x="1201.0" y="380.6" font-size="3.172" fill="#444" text-anchor="start" textLength="6.9" lengthAdjust="spacingAndGlyphs">R0402</text><rect x="1222.0" y="364.0" width="16.0" height="35.0" fill="#ffffcc" opacity="0.22"/><path d="M1226.5 361.3 L1226.5 398.6" stroke="#767676" stroke-width="0.8"/><rect x="1225" y="367.0" width="3" height="8.6" fill="#fffff0"/><path d="M1226.5 367.0 L1227.7 368.1 L1226.5 369.2 L1227.7 370.3 L1226.5 371.4 L1227.7 372.5 L1226.5 373.6 L1227.7 374.7 L1226.5 375.6" stroke="#555" stroke-width="0.7" fill="none"/><rect x="1225" y="386.0" width="3" height="8.6" fill="#fffff0"/><path d="M1226.5 386.0 L1227.7 387.1 L1226.5 388.2 L1227.7 389.3 L1226.5 390.4 L1227.7 391.5 L1226.5 392.6 L1227.7 393.7 L1226.5 394.6" stroke="#555" stroke-width="0.7" fill="none"/><text x="1229.3" y="369.5" font-size="3.172" fill="#444" text-anchor="start" textLength="6.9" lengthAdjust="spacingAndGlyphs">L0402</text><text x="1229.3" y="373.0" font-size="3.172" fill="#111" text-anchor="start" textLength="2.8" lengthAdjust="spacingAndGlyphs" font-weight="bold">NH</text><text x="1229.3" y="389.5" font-size="3.172" fill="#444" text-anchor="start" textLength="6.9" lengthAdjust="spacingAndGlyphs">L0402</text><text x="1229.3" y="393.0" font-size="3.172" fill="#111" text-anchor="start" textLength="2.8" lengthAdjust="spacingAndGlyphs" font-weight="bold">NH</text><rect x="1241.0" y="367.0" width="27.0" height="19.0" fill="#ffffcc" opacity="0.31"/><path d="M1237.5 381.1 L1237.5 372.4 L1287.6 372.4" stroke="#767676" stroke-width="0.8" fill="none"/><path d="M1255.2 370.9 L1257.8 375.1" stroke="#666" stroke-width="0.7"/><path d="M1257.8 370.9 L1255.2 375.1" stroke="#666" stroke-width="0.7"/><text x="1244.0" y="371.6" font-size="3.172" fill="#444" text-anchor="start" textLength="6.9" lengthAdjust="spacingAndGlyphs">R0402</text><path d="M1255.2 379.6 L1257.8 383.8" stroke="#666" stroke-width="0.7"/><path d="M1257.8 379.6 L1255.2 383.8" stroke="#666" stroke-width="0.7"/><text x="1244.0" y="380.3" font-size="3.172" fill="#444" text-anchor="start" textLength="6.9" lengthAdjust="spacingAndGlyphs">R0402</text><rect x="1287.6" y="370.7" width="6.0" height="3.4" rx="1" stroke="#8a8a8a" stroke-width="0.6" fill="#fff"/><text x="1295.0" y="374.0" font-size="5" fill="#3c3cb8" text-anchor="start" textLength="14.8" lengthAdjust="spacingAndGlyphs">SD_PA_RF</text><path d="M1295.0 374.6 h14.8" stroke="#4646c0" stroke-width="0.55"/><text x="1307.0" y="370.6" font-size="3.05" fill="#666" text-anchor="start" textLength="4.0" lengthAdjust="spacingAndGlyphs">P11</text><rect x="1287.6" y="379.4" width="6.0" height="3.4" rx="1" stroke="#8a8a8a" stroke-width="0.6" fill="#fff"/><text x="1295.0" y="382.7" font-size="5" fill="#3c3cb8" text-anchor="start" textLength="16.6" lengthAdjust="spacingAndGlyphs">SD_FBL_RF</text><path d="M1295.0 383.3 h16.6" stroke="#4646c0" stroke-width="0.55"/><text x="1309.0" y="378.6" font-size="3.05" fill="#666" text-anchor="start" textLength="4.0" lengthAdjust="spacingAndGlyphs">P11</text><text x="1182.8" y="401.9" font-size="3.294" fill="#333" text-anchor="end" textLength="12.9" lengthAdjust="spacingAndGlyphs">WLAN_EN_0</text><text x="1185.2" y="400.5" font-size="3.172" fill="#555" text-anchor="start" textLength="2.8" lengthAdjust="spacingAndGlyphs">B1</text><path d="M1184.0 400.8 L1244.0 400.8" stroke="#767676" stroke-width="0.8"/><rect x="1244.0" y="399.1" width="6.0" height="3.4" rx="1" stroke="#8a8a8a" stroke-width="0.6" fill="#fff"/><text x="1251.5" y="402.4" font-size="5" fill="#3c3cb8" text-anchor="start" textLength="18.5" lengthAdjust="spacingAndGlyphs">VBAT_EN_P0</text><path d="M1251.5 403.0 h18.5" stroke="#4646c0" stroke-width="0.55"/><text x="1278.0" y="401.8" font-size="3.294" fill="#666" text-anchor="start" textLength="4.3" lengthAdjust="spacingAndGlyphs">P11</text><text x="1182.8" y="404.8" font-size="3.294" fill="#333" text-anchor="end" textLength="12.9" lengthAdjust="spacingAndGlyphs">WLAN_EN_1</text><text x="1185.2" y="403.4" font-size="3.172" fill="#555" text-anchor="start" textLength="2.8" lengthAdjust="spacingAndGlyphs">B1</text><path d="M1184.0 403.7 L1244.0 403.7" stroke="#767676" stroke-width="0.8"/><rect x="1244.0" y="402.0" width="6.0" height="3.4" rx="1" stroke="#8a8a8a" stroke-width="0.6" fill="#fff"/><text x="1251.5" y="405.3" font-size="5" fill="#3c3cb8" text-anchor="start" textLength="18.5" lengthAdjust="spacingAndGlyphs">VBAT_EN_P1</text><path d="M1251.5 405.9 h18.5" stroke="#4646c0" stroke-width="0.55"/><text x="1278.0" y="404.7" font-size="3.294" fill="#666" text-anchor="start" textLength="4.3" lengthAdjust="spacingAndGlyphs">P11</text><text x="1182.8" y="410.7" font-size="3.294" fill="#333" text-anchor="end" textLength="10.0" lengthAdjust="spacingAndGlyphs">BT_SSBI</text><text x="1185.2" y="409.3" font-size="3.172" fill="#555" text-anchor="start" textLength="2.8" lengthAdjust="spacingAndGlyphs">B1</text><path d="M1184.0 409.6 L1244.0 409.6" stroke="#767676" stroke-width="0.8"/><rect x="1244.0" y="407.9" width="6.0" height="3.4" rx="1" stroke="#8a8a8a" stroke-width="0.6" fill="#fff"/><text x="1251.5" y="411.2" font-size="5" fill="#3c3cb8" text-anchor="start" textLength="18.5" lengthAdjust="spacingAndGlyphs">BBBT_BB_PA</text><path d="M1251.5 411.8 h18.5" stroke="#4646c0" stroke-width="0.55"/><text x="1278.0" y="410.6" font-size="3.294" fill="#666" text-anchor="start" textLength="4.3" lengthAdjust="spacingAndGlyphs">P11</text><text x="1182.8" y="413.6" font-size="3.294" fill="#333" text-anchor="end" textLength="10.0" lengthAdjust="spacingAndGlyphs">BT_DATA</text><text x="1185.2" y="412.2" font-size="3.172" fill="#555" text-anchor="start" textLength="2.8" lengthAdjust="spacingAndGlyphs">B1</text><path d="M1184.0 412.5 L1244.0 412.5" stroke="#767676" stroke-width="0.8"/><rect x="1244.0" y="410.8" width="6.0" height="3.4" rx="1" stroke="#8a8a8a" stroke-width="0.6" fill="#fff"/><text x="1251.5" y="414.1" font-size="5" fill="#3c3cb8" text-anchor="start" textLength="18.5" lengthAdjust="spacingAndGlyphs">BBBT_DA_P4</text><path d="M1251.5 414.7 h18.5" stroke="#4646c0" stroke-width="0.55"/><text x="1278.0" y="413.5" font-size="3.294" fill="#666" text-anchor="start" textLength="4.3" lengthAdjust="spacingAndGlyphs">P11</text><text x="1182.8" y="419.4" font-size="3.294" fill="#333" text-anchor="end" textLength="17.2" lengthAdjust="spacingAndGlyphs">WL_CMD_DATA2</text><text x="1185.2" y="418.0" font-size="3.172" fill="#555" text-anchor="start" textLength="2.8" lengthAdjust="spacingAndGlyphs">B1</text><path d="M1184.0 418.3 L1244.0 418.3" stroke="#767676" stroke-width="0.8"/><rect x="1244.0" y="416.6" width="6.0" height="3.4" rx="1" stroke="#8a8a8a" stroke-width="0.6" fill="#fff"/><text x="1251.5" y="419.9" font-size="5" fill="#3c3cb8" text-anchor="start" textLength="18.5" lengthAdjust="spacingAndGlyphs">WLCMDDA_TA</text><path d="M1251.5 420.5 h18.5" stroke="#4646c0" stroke-width="0.55"/><text x="1278.0" y="419.3" font-size="3.294" fill="#666" text-anchor="start" textLength="4.3" lengthAdjust="spacingAndGlyphs">P11</text><text x="1182.8" y="422.3" font-size="3.294" fill="#333" text-anchor="end" textLength="17.2" lengthAdjust="spacingAndGlyphs">WL_CMD_DATA1</text><text x="1185.2" y="420.9" font-size="3.172" fill="#555" text-anchor="start" textLength="2.8" lengthAdjust="spacingAndGlyphs">B1</text><path d="M1184.0 421.2 L1244.0 421.2" stroke="#767676" stroke-width="0.8"/><rect x="1244.0" y="419.5" width="6.0" height="3.4" rx="1" stroke="#8a8a8a" stroke-width="0.6" fill="#fff"/><text x="1251.5" y="422.8" font-size="5" fill="#3c3cb8" text-anchor="start" textLength="18.5" lengthAdjust="spacingAndGlyphs">WLCMDCL_PB</text><path d="M1251.5 423.4 h18.5" stroke="#4646c0" stroke-width="0.55"/><text x="1278.0" y="422.2" font-size="3.294" fill="#666" text-anchor="start" textLength="4.3" lengthAdjust="spacingAndGlyphs">P11</text><text x="1182.8" y="428.1" font-size="3.294" fill="#333" text-anchor="end" textLength="10.0" lengthAdjust="spacingAndGlyphs">FM_SSBI</text><text x="1185.2" y="426.7" font-size="3.172" fill="#555" text-anchor="start" textLength="2.8" lengthAdjust="spacingAndGlyphs">B1</text><path d="M1184.0 427.0 L1244.0 427.0" stroke="#767676" stroke-width="0.8"/><rect x="1244.0" y="425.3" width="6.0" height="3.4" rx="1" stroke="#8a8a8a" stroke-width="0.6" fill="#fff"/><text x="1251.5" y="428.6" font-size="5" fill="#3c3cb8" text-anchor="start" textLength="14.8" lengthAdjust="spacingAndGlyphs">SNC_RANE</text><path d="M1251.5 429.2 h14.8" stroke="#4646c0" stroke-width="0.55"/><text x="1278.0" y="428.0" font-size="3.294" fill="#666" text-anchor="start" textLength="2.9" lengthAdjust="spacingAndGlyphs">P9</text><text x="1182.8" y="436.3" font-size="3.294" fill="#333" text-anchor="end" textLength="10.0" lengthAdjust="spacingAndGlyphs">RFI_IN1</text><text x="1185.2" y="434.9" font-size="3.172" fill="#555" text-anchor="start" textLength="2.8" lengthAdjust="spacingAndGlyphs">B1</text><path d="M1184.0 435.2 L1244.0 435.2" stroke="#767676" stroke-width="0.8"/><rect x="1244.0" y="433.5" width="6.0" height="3.4" rx="1" stroke="#8a8a8a" stroke-width="0.6" fill="#fff"/><text x="1251.5" y="436.8" font-size="5" fill="#3c3cb8" text-anchor="start" textLength="12.9" lengthAdjust="spacingAndGlyphs">SNC_OHC</text><path d="M1251.5 437.4 h12.9" stroke="#4646c0" stroke-width="0.55"/><text x="1278.0" y="436.2" font-size="3.294" fill="#666" text-anchor="start" textLength="4.3" lengthAdjust="spacingAndGlyphs">1.8</text><text x="1182.8" y="442.4" font-size="3.294" fill="#333" text-anchor="end" textLength="8.6" lengthAdjust="spacingAndGlyphs">RFI_IN</text><text x="1185.2" y="441.0" font-size="3.172" fill="#555" text-anchor="start" textLength="2.8" lengthAdjust="spacingAndGlyphs">B1</text><path d="M1184.0 441.3 L1244.0 441.3" stroke="#767676" stroke-width="0.8"/><rect x="1244.0" y="439.6" width="6.0" height="3.4" rx="1" stroke="#8a8a8a" stroke-width="0.6" fill="#fff"/><text x="1251.5" y="442.9" font-size="5" fill="#3c3cb8" text-anchor="start" textLength="12.9" lengthAdjust="spacingAndGlyphs">SNC_OHC</text><path d="M1251.5 443.5 h12.9" stroke="#4646c0" stroke-width="0.55"/><text x="1278.0" y="442.3" font-size="3.294" fill="#666" text-anchor="start" textLength="4.3" lengthAdjust="spacingAndGlyphs">1.8</text><text x="1182.8" y="450.8" font-size="3.294" fill="#333" text-anchor="end" textLength="11.4" lengthAdjust="spacingAndGlyphs">RFT1_OUT</text><text x="1185.2" y="449.4" font-size="3.172" fill="#555" text-anchor="start" textLength="4.1" lengthAdjust="spacingAndGlyphs">K11</text><text x="1182.8" y="456.4" font-size="3.294" fill="#333" text-anchor="end" textLength="11.4" lengthAdjust="spacingAndGlyphs">RFT1_OUT</text><text x="1185.2" y="455.0" font-size="3.172" fill="#555" text-anchor="start" textLength="4.1" lengthAdjust="spacingAndGlyphs">L11</text><text x="1182.8" y="467.7" font-size="3.294" fill="#333" text-anchor="end" textLength="5.7" lengthAdjust="spacingAndGlyphs">VDD6</text><text x="1185.2" y="466.3" font-size="3.172" fill="#555" text-anchor="start" textLength="2.8" lengthAdjust="spacingAndGlyphs">B6</text><text x="1182.8" y="470.1" font-size="3.294" fill="#333" text-anchor="end" textLength="5.7" lengthAdjust="spacingAndGlyphs">VDD9</text><text x="1185.2" y="468.7" font-size="3.172" fill="#555" text-anchor="start" textLength="2.8" lengthAdjust="spacingAndGlyphs">B9</text><text x="1182.8" y="473.5" font-size="3.294" fill="#333" text-anchor="end" textLength="7.2" lengthAdjust="spacingAndGlyphs">VDD12</text><text x="1185.2" y="472.1" font-size="3.172" fill="#555" text-anchor="start" textLength="4.1" lengthAdjust="spacingAndGlyphs">B12</text><text x="1182.8" y="476.4" font-size="3.294" fill="#333" text-anchor="end" textLength="7.2" lengthAdjust="spacingAndGlyphs">VDD15</text><text x="1185.2" y="475.0" font-size="3.172" fill="#555" text-anchor="start" textLength="4.1" lengthAdjust="spacingAndGlyphs">B15</text><path d="M1184.0 470.7 L1244.0 470.7" stroke="#767676" stroke-width="0.8"/><rect x="1244.0" y="469.0" width="6.0" height="3.4" rx="1" stroke="#8a8a8a" stroke-width="0.6" fill="#fff"/><text x="1251.5" y="472.3" font-size="5" fill="#3c3cb8" text-anchor="start" textLength="16.6" lengthAdjust="spacingAndGlyphs">VBBC_DIG1</text><path d="M1251.5 472.9 h16.6" stroke="#4646c0" stroke-width="0.55"/><text x="1278.0" y="471.7" font-size="3.294" fill="#666" text-anchor="start" textLength="4.3" lengthAdjust="spacingAndGlyphs">P11</text><rect x="1132.0" y="557.0" width="46.0" height="39.0" fill="#ffffcc" opacity="0.12"/><rect x="1132.0" y="600.0" width="46.0" height="40.0" fill="#ffffcc" opacity="0.12"/><rect x="1140.5" y="562.4" width="27.9" height="27.9" stroke="#6c6c6c" stroke-width="0.9" fill="none"/><text x="1154.4" y="561.8" font-size="3.172" fill="#444" text-anchor="middle" textLength="6.9" lengthAdjust="spacingAndGlyphs">U1001</text><text x="1154.4" y="593.2" font-size="3.172" fill="#111" text-anchor="middle" textLength="23.4" lengthAdjust="spacingAndGlyphs" font-weight="bold">BGT5X6R0KB-SPDXR0</text><text x="1141.7" y="568.9" font-size="3.416" fill="#222" text-anchor="start" textLength="4.5" lengthAdjust="spacingAndGlyphs">ENB</text><text x="1167.2" y="568.9" font-size="3.416" fill="#222" text-anchor="end" textLength="4.5" lengthAdjust="spacingAndGlyphs">VCC</text><text x="1139.5" y="567.3" font-size="3.05" fill="#333" text-anchor="end">1</text><text x="1169.4" y="567.3" font-size="3.05" fill="#333" text-anchor="start">8</text><text x="1141.7" y="574.7" font-size="3.416" fill="#222" text-anchor="start" textLength="10.4" lengthAdjust="spacingAndGlyphs">SCL/SDA</text><text x="1167.2" y="574.7" font-size="3.416" fill="#222" text-anchor="end" textLength="5.9" lengthAdjust="spacingAndGlyphs">SDA1</text><text x="1139.5" y="573.1" font-size="3.05" fill="#333" text-anchor="end">2</text><text x="1169.4" y="573.1" font-size="3.05" fill="#333" text-anchor="start">7</text><text x="1141.7" y="580.5" font-size="3.416" fill="#222" text-anchor="start" textLength="13.4" lengthAdjust="spacingAndGlyphs">RFIN/GND2</text><text x="1167.2" y="580.5" font-size="3.416" fill="#222" text-anchor="end" textLength="5.9" lengthAdjust="spacingAndGlyphs">SCLA</text><text x="1139.5" y="578.9" font-size="3.05" fill="#333" text-anchor="end">3</text><text x="1169.4" y="578.9" font-size="3.05" fill="#333" text-anchor="start">6</text><text x="1141.7" y="586.3" font-size="3.416" fill="#222" text-anchor="start" textLength="4.5" lengthAdjust="spacingAndGlyphs">GND</text><text x="1167.2" y="586.3" font-size="3.416" fill="#222" text-anchor="end" textLength="8.9" lengthAdjust="spacingAndGlyphs">OUTGND</text><text x="1139.5" y="584.7" font-size="3.05" fill="#333" text-anchor="end">4</text><text x="1169.4" y="584.7" font-size="3.05" fill="#333" text-anchor="start">5</text><rect x="1140.5" y="605.6" width="27.9" height="28.4" stroke="#6c6c6c" stroke-width="0.9" fill="none"/><text x="1154.4" y="605.0" font-size="3.172" fill="#444" text-anchor="middle" textLength="6.9" lengthAdjust="spacingAndGlyphs">U1002</text><text x="1154.4" y="636.9" font-size="3.172" fill="#111" text-anchor="middle" textLength="23.4" lengthAdjust="spacingAndGlyphs" font-weight="bold">BGT5X6R0KB-SPDXR0</text><text x="1141.7" y="611.8" font-size="3.416" fill="#222" text-anchor="start" textLength="4.5" lengthAdjust="spacingAndGlyphs">ENB</text><text x="1167.2" y="611.8" font-size="3.416" fill="#222" text-anchor="end" textLength="4.5" lengthAdjust="spacingAndGlyphs">VCC</text><text x="1139.5" y="610.2" font-size="3.05" fill="#333" text-anchor="end">1</text><text x="1169.4" y="610.2" font-size="3.05" fill="#333" text-anchor="start">8</text><text x="1141.7" y="617.6" font-size="3.416" fill="#222" text-anchor="start" textLength="10.4" lengthAdjust="spacingAndGlyphs">SCL/SDA</text><text x="1167.2" y="617.6" font-size="3.416" fill="#222" text-anchor="end" textLength="5.9" lengthAdjust="spacingAndGlyphs">SDA1</text><text x="1139.5" y="616.0" font-size="3.05" fill="#333" text-anchor="end">2</text><text x="1169.4" y="616.0" font-size="3.05" fill="#333" text-anchor="start">7</text><text x="1141.7" y="623.4" font-size="3.416" fill="#222" text-anchor="start" textLength="13.4" lengthAdjust="spacingAndGlyphs">RFIN/GND2</text><text x="1167.2" y="623.4" font-size="3.416" fill="#222" text-anchor="end" textLength="5.9" lengthAdjust="spacingAndGlyphs">SCLA</text><text x="1139.5" y="621.8" font-size="3.05" fill="#333" text-anchor="end">3</text><text x="1169.4" y="621.8" font-size="3.05" fill="#333" text-anchor="start">6</text><text x="1141.7" y="629.3" font-size="3.416" fill="#222" text-anchor="start" textLength="4.5" lengthAdjust="spacingAndGlyphs">GND</text><text x="1167.2" y="629.3" font-size="3.416" fill="#222" text-anchor="end" textLength="8.9" lengthAdjust="spacingAndGlyphs">OUTGND</text><text x="1139.5" y="627.7" font-size="3.05" fill="#333" text-anchor="end">4</text><text x="1169.4" y="627.7" font-size="3.05" fill="#333" text-anchor="start">5</text><rect x="1243.4" y="548.6" width="6.0" height="3.4" rx="1" stroke="#8a8a8a" stroke-width="0.6" fill="#fff"/><text x="1251.4" y="551.9" font-size="5" fill="#3c3cb8" text-anchor="start" textLength="12.9" lengthAdjust="spacingAndGlyphs">SNC_OHC</text><path d="M1251.4 552.5 h12.9" stroke="#4646c0" stroke-width="0.55"/><text x="1277.0" y="551.3" font-size="3.294" fill="#555" text-anchor="start" textLength="4.3" lengthAdjust="spacingAndGlyphs">1.8</text><rect x="1243.4" y="554.4" width="6.0" height="3.4" rx="1" stroke="#8a8a8a" stroke-width="0.6" fill="#fff"/><text x="1251.4" y="557.7" font-size="5" fill="#3c3cb8" text-anchor="start" textLength="12.9" lengthAdjust="spacingAndGlyphs">SNC_OHF</text><path d="M1251.4 558.4 h12.9" stroke="#4646c0" stroke-width="0.55"/><text x="1277.0" y="557.1" font-size="3.294" fill="#555" text-anchor="start" textLength="4.3" lengthAdjust="spacingAndGlyphs">1.8</text><rect x="1243.4" y="560.2" width="6.0" height="3.4" rx="1" stroke="#8a8a8a" stroke-width="0.6" fill="#fff"/><text x="1251.4" y="563.5" font-size="5" fill="#3c3cb8" text-anchor="start" textLength="14.8" lengthAdjust="spacingAndGlyphs">SNC_DSM1</text><path d="M1251.4 564.1 h14.8" stroke="#4646c0" stroke-width="0.55"/><text x="1277.0" y="562.9" font-size="3.294" fill="#555" text-anchor="start" textLength="4.3" lengthAdjust="spacingAndGlyphs">1.8</text><rect x="1243.4" y="566.1" width="6.0" height="3.4" rx="1" stroke="#8a8a8a" stroke-width="0.6" fill="#fff"/><text x="1251.4" y="569.4" font-size="5" fill="#3c3cb8" text-anchor="start" textLength="14.8" lengthAdjust="spacingAndGlyphs">SNRL_DSM</text><path d="M1251.4 570.0 h14.8" stroke="#4646c0" stroke-width="0.55"/><text x="1277.0" y="568.8" font-size="3.294" fill="#555" text-anchor="start" textLength="4.3" lengthAdjust="spacingAndGlyphs">1.8</text><rect x="1243.4" y="571.9" width="6.0" height="3.4" rx="1" stroke="#8a8a8a" stroke-width="0.6" fill="#fff"/><text x="1251.4" y="575.2" font-size="5" fill="#3c3cb8" text-anchor="start" textLength="12.9" lengthAdjust="spacingAndGlyphs">SNC_OHT</text><path d="M1251.4 575.9 h12.9" stroke="#4646c0" stroke-width="0.55"/><text x="1277.0" y="574.6" font-size="3.294" fill="#555" text-anchor="start" textLength="4.3" lengthAdjust="spacingAndGlyphs">1.8</text><rect x="1243.4" y="577.7" width="6.0" height="3.4" rx="1" stroke="#8a8a8a" stroke-width="0.6" fill="#fff"/><text x="1251.4" y="581.0" font-size="5" fill="#3c3cb8" text-anchor="start" textLength="14.8" lengthAdjust="spacingAndGlyphs">SNC_DSM3</text><path d="M1251.4 581.6 h14.8" stroke="#4646c0" stroke-width="0.55"/><text x="1277.0" y="580.4" font-size="3.294" fill="#555" text-anchor="start" textLength="4.3" lengthAdjust="spacingAndGlyphs">1.8</text><rect x="1243.4" y="583.5" width="6.0" height="3.4" rx="1" stroke="#8a8a8a" stroke-width="0.6" fill="#fff"/><text x="1251.4" y="586.8" font-size="5" fill="#3c3cb8" text-anchor="start" textLength="12.9" lengthAdjust="spacingAndGlyphs">SNC_OHG</text><path d="M1251.4 587.5 h12.9" stroke="#4646c0" stroke-width="0.55"/><text x="1277.0" y="586.2" font-size="3.294" fill="#555" text-anchor="start" textLength="4.3" lengthAdjust="spacingAndGlyphs">1.8</text><path d="M1140.5 622.3 L1120.1 622.3 L1120.1 547.4 L1186.2 547.4 L1186.2 550.3 L1243.4 550.3" stroke="#767676" stroke-width="0.8" fill="none"/><path d="M1120.1 579.4 L1140.5 579.4" stroke="#767676" stroke-width="0.8"/><path d="M1140.5 616.5 L1125.5 616.5 L1125.5 553.2 L1180.3 553.2 L1180.3 556.1 L1243.4 556.1" stroke="#767676" stroke-width="0.8" fill="none"/><path d="M1125.5 573.6 L1140.5 573.6" stroke="#767676" stroke-width="0.8"/><path d="M1140.5 610.7 L1131.7 610.7 L1131.7 559.5 L1174.5 559.5 L1174.5 561.9 L1243.4 561.9" stroke="#767676" stroke-width="0.8" fill="none"/><path d="M1131.7 567.8 L1140.5 567.8" stroke="#767676" stroke-width="0.8"/><path d="M1140.5 585.2 L1114.3 585.2 L1114.3 592.5" stroke="#767676" stroke-width="0.8" fill="none"/><path d="M1111.8 593.0 L1116.8 593.0" stroke="#888" stroke-width="0.7"/><path d="M1112.8 594.2 L1115.8 594.2" stroke="#888" stroke-width="0.6"/><path d="M1114.3 595.4 L1114.3 595.4" stroke="#767676" stroke-width="0.8"/><path d="M1140.5 628.2 L1131.7 628.2 L1131.7 635.6" stroke="#767676" stroke-width="0.8" fill="none"/><path d="M1129.2 636.2 L1134.2 636.2" stroke="#888" stroke-width="0.7"/><path d="M1130.2 637.4 L1133.2 637.4" stroke="#888" stroke-width="0.6"/><path d="M1168.4 567.8 L1243.4 567.8" stroke="#767676" stroke-width="0.8"/><path d="M1177.1 567.8 L1177.1 610.7 L1168.4 610.7" stroke="#767676" stroke-width="0.8" fill="none"/><circle cx="1177.1" cy="567.8" r="0.8" fill="#333"/><path d="M1168.4 573.6 L1243.4 573.6" stroke="#767676" stroke-width="0.8"/><path d="M1183.4 573.6 L1183.4 616.5 L1168.4 616.5" stroke="#767676" stroke-width="0.8" fill="none"/><circle cx="1183.4" cy="573.6" r="0.8" fill="#333"/><path d="M1168.4 579.4 L1243.4 579.4" stroke="#767676" stroke-width="0.8"/><path d="M1189.1 579.4 L1189.1 622.3 L1168.4 622.3" stroke="#767676" stroke-width="0.8" fill="none"/><circle cx="1189.1" cy="579.4" r="0.8" fill="#333"/><path d="M1168.4 585.2 L1243.4 585.2" stroke="#767676" stroke-width="0.8"/><path d="M1194.6 585.2 L1194.6 628.2 L1168.4 628.2" stroke="#767676" stroke-width="0.8" fill="none"/><circle cx="1194.6" cy="585.2" r="0.8" fill="#333"/><circle cx="1120.1" cy="579.4" r="0.8" fill="#333"/><circle cx="1125.5" cy="573.6" r="0.8" fill="#333"/><circle cx="1131.7" cy="567.8" r="0.8" fill="#333"/><circle cx="1211.8" cy="567.8" r="0.8" fill="#333"/><path d="M1211.8 567.8 L1211.8 641.6" stroke="#767676" stroke-width="0.8"/><rect x="1207.0" y="628.0" width="22.5" height="28.0" fill="#ffffcc" opacity="0.28"/><path d="M1208.2 642.4 L1215.8 642.4" stroke="#222" stroke-width="1.3"/><path d="M1208.2 645.4 Q1212 643.6 1215.8 645.4" stroke="#222" stroke-width="1.1" fill="none"/><path d="M1211.8 645.0 L1211.8 653.0" stroke="#888" stroke-width="0.8"/><path d="M1209.3 653.5 L1214.3 653.5" stroke="#888" stroke-width="0.7"/><path d="M1210.3 654.7 L1213.3 654.7" stroke="#888" stroke-width="0.6"/><text x="1217.5" y="643.3" font-size="3.172" fill="#333" text-anchor="start" textLength="6.9" lengthAdjust="spacingAndGlyphs">C0402</text><rect x="1215.0" y="668.0" width="13.0" height="63.0" fill="#ffffcc" opacity="0.37"/><circle cx="1220.3" cy="674.1" r="3.6" stroke="#5c5c5c" stroke-width="0.8" fill="#fffff2"/><text x="1220.3" y="670.0" font-size="2.806" fill="#555" text-anchor="middle" textLength="7.3" lengthAdjust="spacingAndGlyphs">TP0603</text><path d="M1224.0 674.1 L1245.0 674.1" stroke="#767676" stroke-width="0.8"/><rect x="1245.0" y="672.4" width="6.0" height="3.4" rx="1" stroke="#8a8a8a" stroke-width="0.6" fill="#fff"/><text x="1252.5" y="675.7" font-size="5" fill="#3c3cb8" text-anchor="start" textLength="9.2" lengthAdjust="spacingAndGlyphs">VBATT</text><path d="M1252.5 676.4 h9.2" stroke="#4646c0" stroke-width="0.55"/><text x="1282.0" y="675.1" font-size="2.928" fill="#666" text-anchor="end" textLength="17.8" lengthAdjust="spacingAndGlyphs">1,2,3,4,7,8,10</text><circle cx="1220.3" cy="682.7" r="3.6" stroke="#5c5c5c" stroke-width="0.8" fill="#fffff2"/><text x="1220.3" y="678.6" font-size="2.806" fill="#555" text-anchor="middle" textLength="7.3" lengthAdjust="spacingAndGlyphs">TP0603</text><path d="M1224.0 682.7 L1245.0 682.7" stroke="#767676" stroke-width="0.8"/><rect x="1245.0" y="681.0" width="6.0" height="3.4" rx="1" stroke="#8a8a8a" stroke-width="0.6" fill="#fff"/><text x="1252.5" y="684.3" font-size="5" fill="#3c3cb8" text-anchor="start" textLength="9.2" lengthAdjust="spacingAndGlyphs">VDDPX</text><path d="M1252.5 685.0 h9.2" stroke="#4646c0" stroke-width="0.55"/><text x="1282.0" y="683.7" font-size="2.928" fill="#666" text-anchor="end" textLength="5.1" lengthAdjust="spacingAndGlyphs">9,10</text><circle cx="1220.3" cy="691.2" r="3.6" stroke="#5c5c5c" stroke-width="0.8" fill="#fffff2"/><text x="1220.3" y="687.1" font-size="2.806" fill="#555" text-anchor="middle" textLength="7.3" lengthAdjust="spacingAndGlyphs">TP0603</text><path d="M1224.0 691.2 L1229.5 691.2" stroke="#767676" stroke-width="0.8"/><path d="M1229.5 689.2 L1229.5 693.2" stroke="#999" stroke-width="0.7"/><circle cx="1220.3" cy="699.8" r="3.6" stroke="#5c5c5c" stroke-width="0.8" fill="#fffff2"/><text x="1220.3" y="695.7" font-size="2.806" fill="#555" text-anchor="middle" textLength="7.3" lengthAdjust="spacingAndGlyphs">TP0603</text><path d="M1224.0 699.8 L1245.0 699.8" stroke="#767676" stroke-width="0.8"/><rect x="1245.0" y="698.1" width="6.0" height="3.4" rx="1" stroke="#8a8a8a" stroke-width="0.6" fill="#fff"/><text x="1252.5" y="701.4" font-size="5" fill="#3c3cb8" text-anchor="start" textLength="12.9" lengthAdjust="spacingAndGlyphs">PHONEXT</text><path d="M1252.5 702.0 h12.9" stroke="#4646c0" stroke-width="0.55"/><text x="1282.0" y="700.8" font-size="2.928" fill="#666" text-anchor="end" textLength="3.8" lengthAdjust="spacingAndGlyphs">1,9</text><circle cx="1220.3" cy="708.3" r="3.6" stroke="#5c5c5c" stroke-width="0.8" fill="#fffff2"/><text x="1220.3" y="704.2" font-size="2.806" fill="#555" text-anchor="middle" textLength="7.3" lengthAdjust="spacingAndGlyphs">TP0603</text><path d="M1224.0 708.3 L1245.0 708.3" stroke="#767676" stroke-width="0.8"/><rect x="1245.0" y="706.6" width="6.0" height="3.4" rx="1" stroke="#8a8a8a" stroke-width="0.6" fill="#fff"/><text x="1252.5" y="709.9" font-size="5" fill="#3c3cb8" text-anchor="start" textLength="12.9" lengthAdjust="spacingAndGlyphs">SNC_OHC</text><path d="M1252.5 710.5 h12.9" stroke="#4646c0" stroke-width="0.55"/><text x="1282.0" y="709.3" font-size="2.928" fill="#666" text-anchor="end" textLength="5.1" lengthAdjust="spacingAndGlyphs">9,10</text><circle cx="1220.3" cy="716.9" r="3.6" stroke="#5c5c5c" stroke-width="0.8" fill="#fffff2"/><text x="1220.3" y="712.8" font-size="2.806" fill="#555" text-anchor="middle" textLength="7.3" lengthAdjust="spacingAndGlyphs">TP0603</text><path d="M1224.0 716.9 L1245.0 716.9" stroke="#767676" stroke-width="0.8"/><rect x="1245.0" y="715.2" width="6.0" height="3.4" rx="1" stroke="#8a8a8a" stroke-width="0.6" fill="#fff"/><text x="1252.5" y="718.5" font-size="5" fill="#3c3cb8" text-anchor="start" textLength="12.9" lengthAdjust="spacingAndGlyphs">SNC_OHE</text><path d="M1252.5 719.1 h12.9" stroke="#4646c0" stroke-width="0.55"/><text x="1282.0" y="717.9" font-size="2.928" fill="#666" text-anchor="end" textLength="5.1" lengthAdjust="spacingAndGlyphs">9,10</text><circle cx="1220.3" cy="725.4" r="3.6" stroke="#5c5c5c" stroke-width="0.8" fill="#fffff2"/><text x="1220.3" y="721.3" font-size="2.806" fill="#555" text-anchor="middle" textLength="7.3" lengthAdjust="spacingAndGlyphs">TP0603</text><path d="M1224.0 725.4 L1245.0 725.4" stroke="#767676" stroke-width="0.8"/><rect x="1245.0" y="723.7" width="6.0" height="3.4" rx="1" stroke="#8a8a8a" stroke-width="0.6" fill="#fff"/><text x="1252.5" y="727.0" font-size="5" fill="#3c3cb8" text-anchor="start" textLength="11.1" lengthAdjust="spacingAndGlyphs">VBATCO</text><path d="M1252.5 727.6 h11.1" stroke="#4646c0" stroke-width="0.55"/><text x="1282.0" y="726.4" font-size="2.928" fill="#666" text-anchor="end" textLength="3.8" lengthAdjust="spacingAndGlyphs">1,9</text><rect x="1072.0" y="751.0" width="59.0" height="19.0" fill="#ffffcc" opacity="0.22"/><circle cx="1080.0" cy="760.4" r="5.6" stroke="#5c5c5c" stroke-width="0.8" fill="#fffffa"/><text x="1080.0" y="753.6" font-size="2.928" fill="#333" text-anchor="middle" textLength="6.4" lengthAdjust="spacingAndGlyphs">MARK1</text><text x="1080.0" y="769.2" font-size="2.928" fill="#333" text-anchor="middle" textLength="6.4" lengthAdjust="spacingAndGlyphs">MARK1</text><path d="M1078.8 760.8 L1081.2 760.8" stroke="#666" stroke-width="0.6"/><path d="M1080.0 759.3 L1080.0 760.8" stroke="#666" stroke-width="0.6"/><circle cx="1094.2" cy="760.4" r="5.6" stroke="#5c5c5c" stroke-width="0.8" fill="#fffffa"/><text x="1094.2" y="753.6" font-size="2.928" fill="#333" text-anchor="middle" textLength="6.4" lengthAdjust="spacingAndGlyphs">MARK2</text><text x="1094.2" y="769.2" font-size="2.928" fill="#333" text-anchor="middle" textLength="6.4" lengthAdjust="spacingAndGlyphs">MARK2</text><path d="M1093.0 760.8 L1095.4 760.8" stroke="#666" stroke-width="0.6"/><path d="M1094.2 759.3 L1094.2 760.8" stroke="#666" stroke-width="0.6"/><circle cx="1108.6" cy="760.4" r="5.6" stroke="#5c5c5c" stroke-width="0.8" fill="#fffffa"/><text x="1108.6" y="753.6" font-size="2.928" fill="#333" text-anchor="middle" textLength="6.4" lengthAdjust="spacingAndGlyphs">MARK3</text><text x="1108.6" y="769.2" font-size="2.928" fill="#333" text-anchor="middle" textLength="6.4" lengthAdjust="spacingAndGlyphs">MARK3</text><path d="M1107.4 760.8 L1109.8 760.8" stroke="#666" stroke-width="0.6"/><path d="M1108.6 759.3 L1108.6 760.8" stroke="#666" stroke-width="0.6"/><circle cx="1122.8" cy="760.4" r="5.6" stroke="#5c5c5c" stroke-width="0.8" fill="#fffffa"/><text x="1122.8" y="753.6" font-size="2.928" fill="#333" text-anchor="middle" textLength="6.4" lengthAdjust="spacingAndGlyphs">MARK4</text><text x="1122.8" y="769.2" font-size="2.928" fill="#333" text-anchor="middle" textLength="6.4" lengthAdjust="spacingAndGlyphs">MARK4</text><path d="M1121.6 760.8 L1124.0 760.8" stroke="#666" stroke-width="0.6"/><path d="M1122.8 759.3 L1122.8 760.8" stroke="#666" stroke-width="0.6"/><rect x="1140.6" y="749.0" width="143.1" height="71.3" stroke="#7c7c7c" stroke-width="0.9" fill="none"/><path d="M1140.6 763.3 L1283.7 763.3" stroke="#7c7c7c" stroke-width="0.9"/><path d="M1140.6 786.0 L1283.7 786.0" stroke="#7c7c7c" stroke-width="0.9"/><path d="M1140.6 813.4 L1283.7 813.4" stroke="#7c7c7c" stroke-width="0.9"/><path d="M1174.4 786.0 L1174.4 813.4" stroke="#7c7c7c" stroke-width="0.9"/><path d="M1194.4 786.0 L1194.4 813.4" stroke="#7c7c7c" stroke-width="0.9"/><path d="M1269.3 786.0 L1269.3 813.4" stroke="#7c7c7c" stroke-width="0.9"/><path d="M1232.4 813.4 L1232.4 820.3" stroke="#7c7c7c" stroke-width="0.9"/><rect x="1068.3" y="774.0" width="72.3" height="46.3" stroke="#7c7c7c" stroke-width="0.9" fill="none"/><path d="M1068.3 786.4 L1140.6 786.4" stroke="#7c7c7c" stroke-width="0.9"/><path d="M1068.3 797.5 L1140.6 797.5" stroke="#7c7c7c" stroke-width="0.9"/><path d="M1068.3 809.0 L1140.6 809.0" stroke="#7c7c7c" stroke-width="0.9"/><path d="M1111.2 774.0 L1111.2 820.3" stroke="#7c7c7c" stroke-width="0.9"/><text x="1142.0" y="753.8" font-size="2.928" fill="#333" text-anchor="start" textLength="10.2" lengthAdjust="spacingAndGlyphs">COMPANY:</text><text x="1212.0" y="758.8" font-size="6.4" fill="#666" text-anchor="middle" letter-spacing="0.5">&lt;Company Name&gt;</text><text x="1142.0" y="768.0" font-size="2.928" fill="#333" text-anchor="start" textLength="6.4" lengthAdjust="spacingAndGlyphs">TITLE</text><text x="1217.5" y="777.6" font-size="6.4" fill="#666" text-anchor="middle" letter-spacing="0.4">&lt;TITLE&gt;</text><text x="1157.0" y="791.5" font-size="2.928" fill="#333" text-anchor="middle" textLength="5.1" lengthAdjust="spacingAndGlyphs">CODE</text><text x="1183.0" y="791.5" font-size="2.928" fill="#333" text-anchor="middle" textLength="5.1" lengthAdjust="spacingAndGlyphs">SIZE</text><text x="1231.0" y="791.5" font-size="2.928" fill="#333" text-anchor="middle" textLength="12.7" lengthAdjust="spacingAndGlyphs">DRAWING NO</text><text x="1275.0" y="791.5" font-size="2.928" fill="#333" text-anchor="middle" textLength="3.8" lengthAdjust="spacingAndGlyphs">REV</text><text x="1142.0" y="806.8" font-size="8" fill="#7a7a7a" text-anchor="start" letter-spacing="0.3">&lt;Code&gt;</text><text x="1179.5" y="806.8" font-size="8" fill="#7a7a7a" text-anchor="start">A</text><text x="1187.5" y="806.8" font-size="8" fill="#7a7a7a" text-anchor="start" letter-spacing="0.35">&lt;Drawing Number&gt;</text><text x="1254.5" y="806.8" font-size="8" fill="#7a7a7a" text-anchor="start" letter-spacing="0.3">&lt;Revision&gt;</text><text x="1142.0" y="818.0" font-size="3.66" fill="#444" text-anchor="start" textLength="19.1" lengthAdjust="spacingAndGlyphs">Scal &lt;Scale&gt;</text><text x="1234.0" y="818.0" font-size="3.416" fill="#444" text-anchor="start" textLength="26.7" lengthAdjust="spacingAndGlyphs">SHEET:  1   OF  99</text><text x="1069.3" y="777.2" font-size="2.806" fill="#333" text-anchor="start" textLength="7.3" lengthAdjust="spacingAndGlyphs">DRAWN:</text><text x="1103.5" y="782.6" font-size="3.6" fill="#555" text-anchor="end" font-family='"Liberation Mono",monospace'>&lt;Drawn By&gt;</text><text x="1112.2" y="777.2" font-size="2.806" fill="#333" text-anchor="start" textLength="7.3" lengthAdjust="spacingAndGlyphs">DATES:</text><text x="1112.2" y="782.6" font-size="3.6" fill="#555" text-anchor="start" font-family='"Liberation Mono",monospace'>&lt;Drawn Date&gt;</text><text x="1069.3" y="789.6" font-size="2.806" fill="#333" text-anchor="start" textLength="9.8" lengthAdjust="spacingAndGlyphs">CHECKED:</text><text x="1103.5" y="795.0" font-size="3.6" fill="#555" text-anchor="end" font-family='"Liberation Mono",monospace'>&lt;Checked By&gt;</text><text x="1112.2" y="789.6" font-size="2.806" fill="#333" text-anchor="start" textLength="7.3" lengthAdjust="spacingAndGlyphs">DATES:</text><text x="1112.2" y="795.0" font-size="3.6" fill="#555" text-anchor="start" font-family='"Liberation Mono",monospace'>&lt;Checked Date&gt;</text><text x="1069.3" y="800.7" font-size="2.806" fill="#333" text-anchor="start" textLength="19.5" lengthAdjust="spacingAndGlyphs">QUALITY CONTROL:</text><text x="1103.5" y="806.1" font-size="3.6" fill="#555" text-anchor="end" font-family='"Liberation Mono",monospace'>&lt;QC By&gt;</text><text x="1112.2" y="800.7" font-size="2.806" fill="#333" text-anchor="start" textLength="7.3" lengthAdjust="spacingAndGlyphs">DATES:</text><text x="1112.2" y="806.1" font-size="3.6" fill="#555" text-anchor="start" font-family='"Liberation Mono",monospace'>&lt;QC Date&gt;</text><text x="1069.3" y="812.2" font-size="2.806" fill="#333" text-anchor="start" textLength="11.0" lengthAdjust="spacingAndGlyphs">RELEASED:</text><text x="1103.5" y="817.6" font-size="3.6" fill="#555" text-anchor="end" font-family='"Liberation Mono",monospace'>&lt;Released By&gt;</text><text x="1112.2" y="812.2" font-size="2.806" fill="#333" text-anchor="start" textLength="7.3" lengthAdjust="spacingAndGlyphs">DATES:</text><text x="1112.2" y="817.6" font-size="3.6" fill="#555" text-anchor="start" font-family='"Liberation Mono",monospace'>&lt;Release Date&gt;</text></svg>
<div id="status" class="abs"><div class="abs mono" style="left:0;top:5px;color:#fff">Version:1.0.0.52</div><div class="abs mono" style="right:2px;top:5px;color:#fff">Current [S42M98JB1(S285)_Schematic]</div></div><div id="bottomline" class="abs"></div>
</body></html>
